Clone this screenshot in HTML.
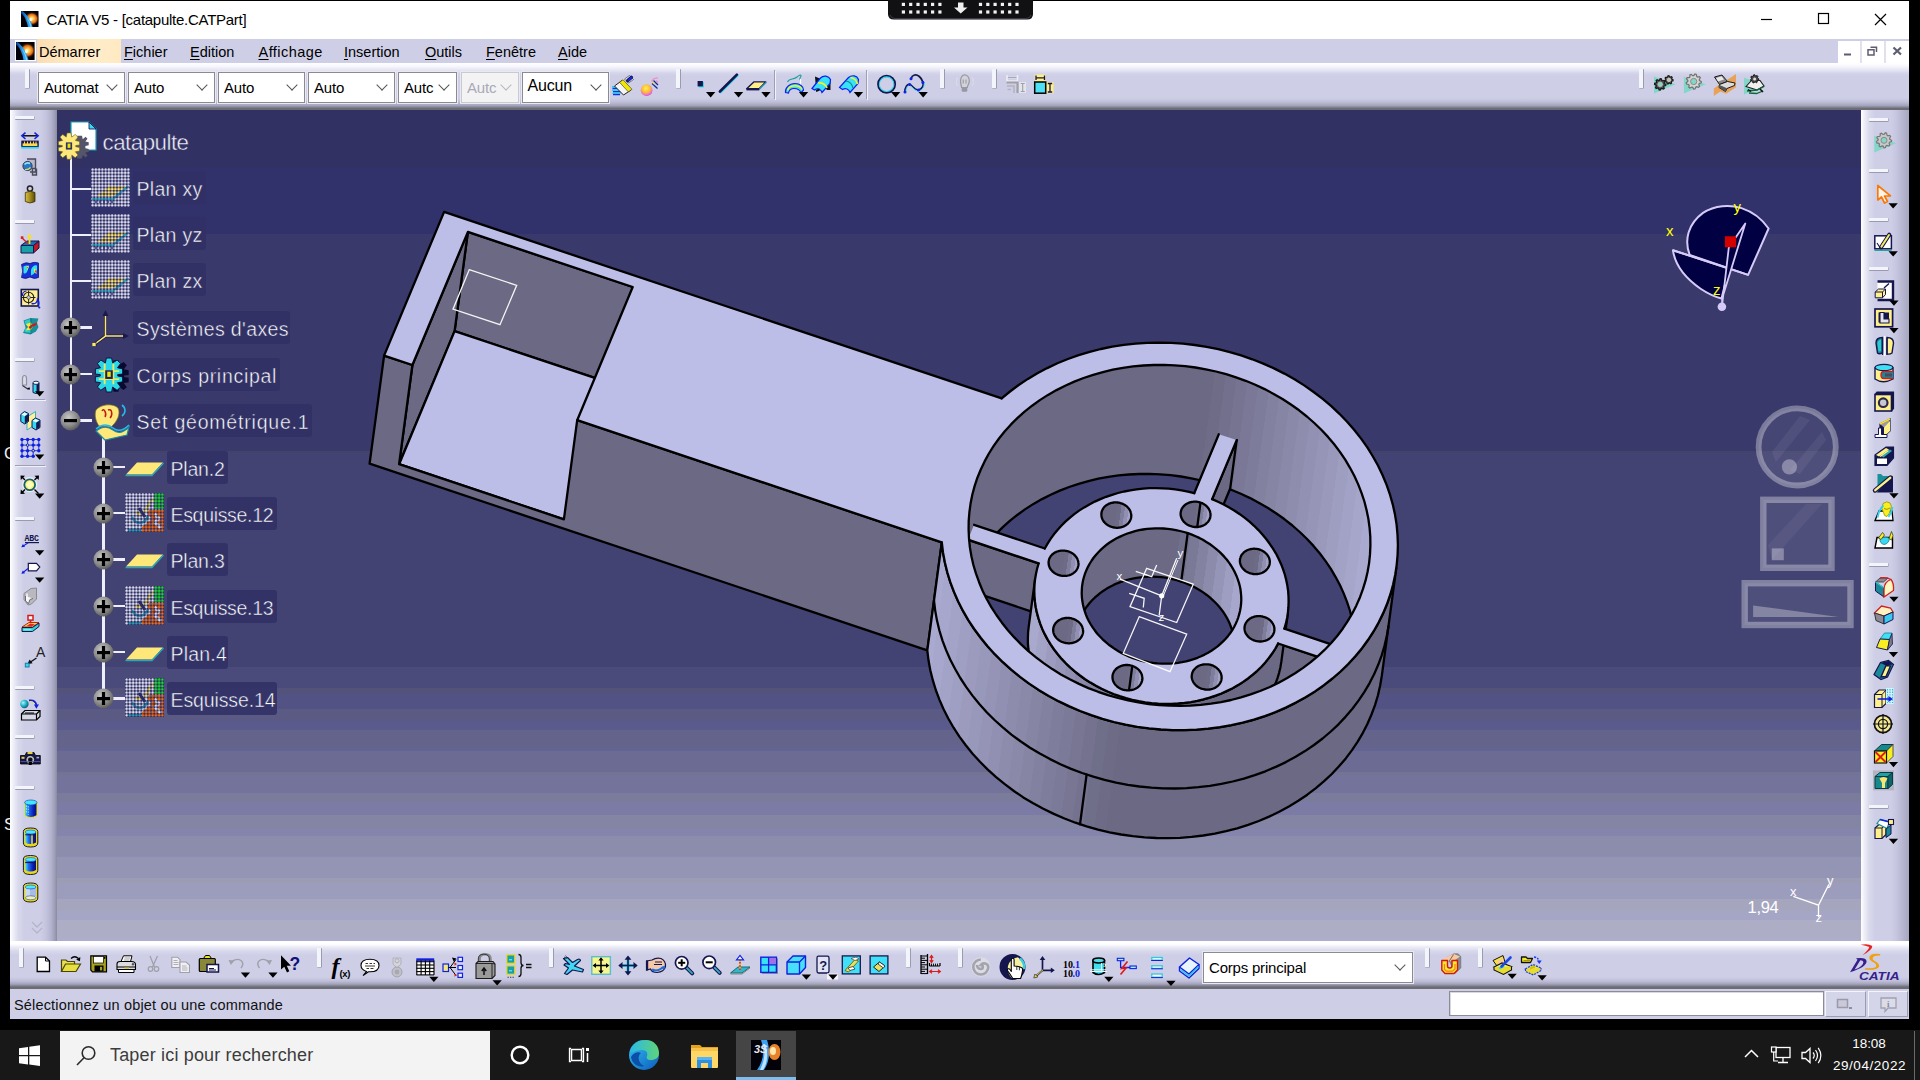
<!DOCTYPE html>
<html><head><meta charset="utf-8"><title>CATIA V5 - [catapulte.CATPart]</title>
<style>
*{box-sizing:border-box;margin:0;padding:0}
html,body{width:1920px;height:1080px;overflow:hidden;background:#000}
body{font-family:"Liberation Sans",sans-serif;position:relative;color:#000}
body>*{position:absolute}
.a{position:absolute}
#win{left:10px;top:1px;width:1899px;height:1017px;background:#cecfe7}
#title{left:10px;top:1px;width:1899px;height:38px;background:#fff}
.tt{left:46.5px;top:10.5px;font-size:15px;letter-spacing:-0.27px;color:#000;white-space:nowrap}
#menu{left:10px;top:39px;width:1899px;height:24px;background:#cecfe7}
.mi{top:42px;font-size:14.5px;white-space:nowrap;height:20px;line-height:20px}
.mi u{text-decoration:underline;text-underline-offset:2px}
#tb{left:10px;top:63px;width:1899px;height:47px;background:linear-gradient(#ffffff 0,#f8f8fd 3px,#e6e6f4 7px,#d4d5ea 10px,#cecfe7 13px,#cecfe7 35px,#bebed8 39px,#a4a4bc 42.5px,#808090 44.5px,#6c6c74 45.3px,#6c6c74 47px)}
.combo{top:72px;height:31px;background:#fff;border:1px solid #8a8a90;box-shadow:0 0 0 1px #e9e9f3;font-size:15px;line-height:30px;padding-left:5px;overflow:hidden;white-space:nowrap;letter-spacing:-0.2px}
.combo:after{content:"";position:absolute;right:8px;top:8px;width:7px;height:7px;border-right:1.3px solid #555;border-bottom:1.3px solid #555;transform:rotate(45deg)}
.combo.dis{background:#f3f3f3;color:#a9a9b9;border-color:#c9c9d2}
.combo.dis:after{border-color:#b8b8c4}
#ltb{left:10px;top:110px;width:47px;height:831px;background:linear-gradient(90deg,#fff 0,#f0f0f9 3px,#dadaec 8px,#cecfe7 14px,#cecfe7 30px,#c4c4de 36px,#b3b3cf 41px,#9c9cb6 45px,#8a8a9e 47px)}
#rtb{left:1861px;top:110px;width:48px;height:831px;background:linear-gradient(90deg,#fff 0,#f0f0f9 3px,#dadaec 8px,#cecfe7 14px,#cecfe7 30px,#c4c4de 36px,#b5b5d0 42px,#a6a6c0 48px)}
#btb{left:10px;top:941px;width:1899px;height:48px;background:linear-gradient(#fff 0,#fff 3px,#ececf7 6px,#d8d8ec 10px,#cecfe7 14px,#cecfe7 36px,#bebed8 40px,#a4a4bc 43px,#808090 45px,#6c6c74 46px,#6c6c74 48px)}
#status{left:10px;top:989px;width:1899px;height:29.5px;background:#cecfe7}
#vp{left:57px;top:110px;width:1804px;height:831px;overflow:hidden}
.sep{width:20px;height:4px;background:#f4f4fb;border-bottom:1px solid #9a9ab0;border-right:1px solid #b0b0c4;border-radius:1px}
.vsep{width:5px;height:20px;background:#f4f4fb;border-right:1px solid #9a9ab0;border-bottom:1px solid #b0b0c4;border-radius:1px}
.line{background:#9e9eb6;box-shadow:1px 1px 0 #f2f2fa}
#task{left:0;top:1030px;width:1920px;height:50px;background:#181818}
.lbl{height:33px;background:rgba(49,49,102,.9);border-radius:3px;color:#fff;font-size:19.5px;line-height:33px;padding:0 2px;white-space:nowrap}
.tr{color:#fff;white-space:nowrap}
</style></head><body>
<div id="win"></div><div id="title"></div><div id="menu"></div><div id="tb"></div><div id="ltb"></div><div id="rtb"></div><div id="btb"></div><div id="status"></div><div id="task"></div><svg id="vp" viewBox="57 110 1804 831" width="1804" height="831"><defs><linearGradient id="bgv" gradientUnits="userSpaceOnUse" x1="0" y1="110" x2="0" y2="941"><stop offset="0.00000" stop-color="#313163"/><stop offset="0.06980" stop-color="#313163"/><stop offset="0.06980" stop-color="#31316b"/><stop offset="0.14922" stop-color="#31316b"/><stop offset="0.14922" stop-color="#39396b"/><stop offset="0.41035" stop-color="#39396b"/><stop offset="0.41035" stop-color="#42426b"/><stop offset="0.41276" stop-color="#42426b"/><stop offset="0.41276" stop-color="#424273"/><stop offset="0.67028" stop-color="#424273"/><stop offset="0.67028" stop-color="#4a4a7b"/><stop offset="0.69555" stop-color="#4a4a7b"/><stop offset="0.69555" stop-color="#52527b"/><stop offset="0.70277" stop-color="#52527b"/><stop offset="0.70277" stop-color="#525284"/><stop offset="0.72082" stop-color="#525284"/><stop offset="0.72082" stop-color="#5a5a84"/><stop offset="0.73526" stop-color="#5a5a84"/><stop offset="0.73526" stop-color="#5a5a8c"/><stop offset="0.74609" stop-color="#5a5a8c"/><stop offset="0.74609" stop-color="#63638c"/><stop offset="0.76775" stop-color="#63638c"/><stop offset="0.76775" stop-color="#636394"/><stop offset="0.77136" stop-color="#636394"/><stop offset="0.77136" stop-color="#6b6b94"/><stop offset="0.79663" stop-color="#6b6b94"/><stop offset="0.79663" stop-color="#737394"/><stop offset="0.80024" stop-color="#737394"/><stop offset="0.80024" stop-color="#73739c"/><stop offset="0.82190" stop-color="#73739c"/><stop offset="0.82190" stop-color="#7b7b9c"/><stop offset="0.83273" stop-color="#7b7b9c"/><stop offset="0.83273" stop-color="#7b7ba5"/><stop offset="0.84838" stop-color="#7b7ba5"/><stop offset="0.84838" stop-color="#8484a5"/><stop offset="0.86522" stop-color="#8484a5"/><stop offset="0.86522" stop-color="#8484ad"/><stop offset="0.87365" stop-color="#8484ad"/><stop offset="0.87365" stop-color="#8c8cad"/><stop offset="0.89771" stop-color="#8c8cad"/><stop offset="0.89771" stop-color="#8c8cb5"/><stop offset="0.89892" stop-color="#8c8cb5"/><stop offset="0.89892" stop-color="#9494b5"/><stop offset="0.92419" stop-color="#9494b5"/><stop offset="0.92419" stop-color="#9c9cb5"/><stop offset="0.93020" stop-color="#9c9cb5"/><stop offset="0.93020" stop-color="#9c9cbd"/><stop offset="0.94946" stop-color="#9c9cbd"/><stop offset="0.94946" stop-color="#a5a5bd"/><stop offset="0.96390" stop-color="#a5a5bd"/><stop offset="0.96390" stop-color="#a5a5c6"/><stop offset="0.97473" stop-color="#a5a5c6"/><stop offset="0.97473" stop-color="#adadc6"/><stop offset="0.99639" stop-color="#adadc6"/><stop offset="0.99639" stop-color="#adadce"/><stop offset="1.00000" stop-color="#adadce"/></linearGradient></defs><rect x="57" y="110" width="1804" height="832" fill="url(#bgv)"/><defs><linearGradient id="gOut" gradientUnits="userSpaceOnUse" x1="942.7" y1="504.9" x2="1396.3" y2="567.9"><stop offset="0.0000" stop-color="rgb(170,170,208)"/><stop offset="0.0250" stop-color="rgb(170,170,208)"/><stop offset="0.0250" stop-color="rgb(167,166,204)"/><stop offset="0.0500" stop-color="rgb(167,166,204)"/><stop offset="0.0500" stop-color="rgb(163,163,199)"/><stop offset="0.0750" stop-color="rgb(163,163,199)"/><stop offset="0.0750" stop-color="rgb(159,159,195)"/><stop offset="0.1000" stop-color="rgb(159,159,195)"/><stop offset="0.1000" stop-color="rgb(156,155,190)"/><stop offset="0.1250" stop-color="rgb(156,155,190)"/><stop offset="0.1250" stop-color="rgb(152,152,186)"/><stop offset="0.1500" stop-color="rgb(152,152,186)"/><stop offset="0.1500" stop-color="rgb(149,148,182)"/><stop offset="0.1750" stop-color="rgb(149,148,182)"/><stop offset="0.1750" stop-color="rgb(145,144,178)"/><stop offset="0.2000" stop-color="rgb(145,144,178)"/><stop offset="0.2000" stop-color="rgb(141,140,173)"/><stop offset="0.2250" stop-color="rgb(141,140,173)"/><stop offset="0.2250" stop-color="rgb(138,137,169)"/><stop offset="0.2500" stop-color="rgb(138,137,169)"/><stop offset="0.2500" stop-color="rgb(134,133,164)"/><stop offset="0.2750" stop-color="rgb(134,133,164)"/><stop offset="0.2750" stop-color="rgb(130,129,160)"/><stop offset="0.3000" stop-color="rgb(130,129,160)"/><stop offset="0.3000" stop-color="rgb(127,125,156)"/><stop offset="0.3250" stop-color="rgb(127,125,156)"/><stop offset="0.3250" stop-color="rgb(123,122,152)"/><stop offset="0.3500" stop-color="rgb(123,122,152)"/><stop offset="0.3500" stop-color="rgb(120,118,147)"/><stop offset="0.3750" stop-color="rgb(120,118,147)"/><stop offset="0.3750" stop-color="rgb(116,114,143)"/><stop offset="0.4000" stop-color="rgb(116,114,143)"/><stop offset="0.4000" stop-color="rgb(112,111,138)"/><stop offset="0.4250" stop-color="rgb(112,111,138)"/><stop offset="0.4250" stop-color="rgb(109,107,134)"/><stop offset="0.4500" stop-color="rgb(109,107,134)"/><stop offset="0.4500" stop-color="rgb(107,105,132)"/><stop offset="0.4750" stop-color="rgb(107,105,132)"/><stop offset="0.4750" stop-color="rgb(107,105,132)"/><stop offset="0.5000" stop-color="rgb(107,105,132)"/><stop offset="0.5000" stop-color="rgb(107,105,132)"/><stop offset="0.5250" stop-color="rgb(107,105,132)"/><stop offset="0.5250" stop-color="rgb(107,105,132)"/><stop offset="0.5500" stop-color="rgb(107,105,132)"/><stop offset="0.5500" stop-color="rgb(107,105,132)"/><stop offset="0.5750" stop-color="rgb(107,105,132)"/><stop offset="0.5750" stop-color="rgb(107,105,132)"/><stop offset="0.6000" stop-color="rgb(107,105,132)"/><stop offset="0.6000" stop-color="rgb(107,105,132)"/><stop offset="0.6250" stop-color="rgb(107,105,132)"/><stop offset="0.6250" stop-color="rgb(107,105,132)"/><stop offset="0.6500" stop-color="rgb(107,105,132)"/><stop offset="0.6500" stop-color="rgb(107,105,132)"/><stop offset="0.6750" stop-color="rgb(107,105,132)"/><stop offset="0.6750" stop-color="rgb(107,105,132)"/><stop offset="0.7000" stop-color="rgb(107,105,132)"/><stop offset="0.7000" stop-color="rgb(107,105,132)"/><stop offset="0.7250" stop-color="rgb(107,105,132)"/><stop offset="0.7250" stop-color="rgb(107,105,132)"/><stop offset="0.7500" stop-color="rgb(107,105,132)"/><stop offset="0.7500" stop-color="rgb(107,105,132)"/><stop offset="0.7750" stop-color="rgb(107,105,132)"/><stop offset="0.7750" stop-color="rgb(107,105,132)"/><stop offset="0.8000" stop-color="rgb(107,105,132)"/><stop offset="0.8000" stop-color="rgb(107,105,132)"/><stop offset="0.8250" stop-color="rgb(107,105,132)"/><stop offset="0.8250" stop-color="rgb(107,105,132)"/><stop offset="0.8500" stop-color="rgb(107,105,132)"/><stop offset="0.8500" stop-color="rgb(107,105,132)"/><stop offset="0.8750" stop-color="rgb(107,105,132)"/><stop offset="0.8750" stop-color="rgb(107,105,132)"/><stop offset="0.9000" stop-color="rgb(107,105,132)"/><stop offset="0.9000" stop-color="rgb(107,105,132)"/><stop offset="0.9250" stop-color="rgb(107,105,132)"/><stop offset="0.9250" stop-color="rgb(107,105,132)"/><stop offset="0.9500" stop-color="rgb(107,105,132)"/><stop offset="0.9500" stop-color="rgb(107,105,132)"/><stop offset="0.9750" stop-color="rgb(107,105,132)"/><stop offset="0.9750" stop-color="rgb(107,105,132)"/><stop offset="1.0000" stop-color="rgb(107,105,132)"/></linearGradient><linearGradient id="gIn" gradientUnits="userSpaceOnUse" x1="969.9" y1="508.7" x2="1369.1" y2="564.1"><stop offset="0.0000" stop-color="rgb(107,105,132)"/><stop offset="0.0278" stop-color="rgb(107,105,132)"/><stop offset="0.0278" stop-color="rgb(107,105,132)"/><stop offset="0.0556" stop-color="rgb(107,105,132)"/><stop offset="0.0556" stop-color="rgb(107,105,132)"/><stop offset="0.0833" stop-color="rgb(107,105,132)"/><stop offset="0.0833" stop-color="rgb(107,105,132)"/><stop offset="0.1111" stop-color="rgb(107,105,132)"/><stop offset="0.1111" stop-color="rgb(107,105,132)"/><stop offset="0.1389" stop-color="rgb(107,105,132)"/><stop offset="0.1389" stop-color="rgb(107,105,132)"/><stop offset="0.1667" stop-color="rgb(107,105,132)"/><stop offset="0.1667" stop-color="rgb(107,105,132)"/><stop offset="0.1944" stop-color="rgb(107,105,132)"/><stop offset="0.1944" stop-color="rgb(107,105,132)"/><stop offset="0.2222" stop-color="rgb(107,105,132)"/><stop offset="0.2222" stop-color="rgb(107,105,132)"/><stop offset="0.2500" stop-color="rgb(107,105,132)"/><stop offset="0.2500" stop-color="rgb(107,105,132)"/><stop offset="0.2778" stop-color="rgb(107,105,132)"/><stop offset="0.2778" stop-color="rgb(107,105,132)"/><stop offset="0.3056" stop-color="rgb(107,105,132)"/><stop offset="0.3056" stop-color="rgb(107,105,132)"/><stop offset="0.3333" stop-color="rgb(107,105,132)"/><stop offset="0.3333" stop-color="rgb(107,105,132)"/><stop offset="0.3611" stop-color="rgb(107,105,132)"/><stop offset="0.3611" stop-color="rgb(107,105,132)"/><stop offset="0.3889" stop-color="rgb(107,105,132)"/><stop offset="0.3889" stop-color="rgb(107,105,132)"/><stop offset="0.4167" stop-color="rgb(107,105,132)"/><stop offset="0.4167" stop-color="rgb(107,105,132)"/><stop offset="0.4444" stop-color="rgb(107,105,132)"/><stop offset="0.4444" stop-color="rgb(107,105,132)"/><stop offset="0.4722" stop-color="rgb(107,105,132)"/><stop offset="0.4722" stop-color="rgb(107,105,132)"/><stop offset="0.5000" stop-color="rgb(107,105,132)"/><stop offset="0.5000" stop-color="rgb(107,105,132)"/><stop offset="0.5278" stop-color="rgb(107,105,132)"/><stop offset="0.5278" stop-color="rgb(107,105,132)"/><stop offset="0.5556" stop-color="rgb(107,105,132)"/><stop offset="0.5556" stop-color="rgb(110,108,135)"/><stop offset="0.5833" stop-color="rgb(110,108,135)"/><stop offset="0.5833" stop-color="rgb(114,112,140)"/><stop offset="0.6111" stop-color="rgb(114,112,140)"/><stop offset="0.6111" stop-color="rgb(118,116,145)"/><stop offset="0.6389" stop-color="rgb(118,116,145)"/><stop offset="0.6389" stop-color="rgb(122,120,150)"/><stop offset="0.6667" stop-color="rgb(122,120,150)"/><stop offset="0.6667" stop-color="rgb(126,124,155)"/><stop offset="0.6944" stop-color="rgb(126,124,155)"/><stop offset="0.6944" stop-color="rgb(130,129,159)"/><stop offset="0.7222" stop-color="rgb(130,129,159)"/><stop offset="0.7222" stop-color="rgb(134,133,164)"/><stop offset="0.7500" stop-color="rgb(134,133,164)"/><stop offset="0.7500" stop-color="rgb(138,137,169)"/><stop offset="0.7778" stop-color="rgb(138,137,169)"/><stop offset="0.7778" stop-color="rgb(142,141,174)"/><stop offset="0.8056" stop-color="rgb(142,141,174)"/><stop offset="0.8056" stop-color="rgb(146,145,179)"/><stop offset="0.8333" stop-color="rgb(146,145,179)"/><stop offset="0.8333" stop-color="rgb(150,149,184)"/><stop offset="0.8611" stop-color="rgb(150,149,184)"/><stop offset="0.8611" stop-color="rgb(154,153,188)"/><stop offset="0.8889" stop-color="rgb(154,153,188)"/><stop offset="0.8889" stop-color="rgb(158,158,193)"/><stop offset="0.9167" stop-color="rgb(158,158,193)"/><stop offset="0.9167" stop-color="rgb(162,162,198)"/><stop offset="0.9444" stop-color="rgb(162,162,198)"/><stop offset="0.9444" stop-color="rgb(166,166,203)"/><stop offset="0.9722" stop-color="rgb(166,166,203)"/><stop offset="0.9722" stop-color="rgb(170,170,208)"/><stop offset="1.0000" stop-color="rgb(170,170,208)"/></linearGradient><linearGradient id="gHub" gradientUnits="userSpaceOnUse" x1="1035.2" y1="578.5" x2="1287.8" y2="613.6"><stop offset="0.0000" stop-color="rgb(169,169,206)"/><stop offset="0.0417" stop-color="rgb(169,169,206)"/><stop offset="0.0417" stop-color="rgb(163,163,199)"/><stop offset="0.0833" stop-color="rgb(163,163,199)"/><stop offset="0.0833" stop-color="rgb(157,156,192)"/><stop offset="0.1250" stop-color="rgb(157,156,192)"/><stop offset="0.1250" stop-color="rgb(151,150,185)"/><stop offset="0.1667" stop-color="rgb(151,150,185)"/><stop offset="0.1667" stop-color="rgb(145,144,178)"/><stop offset="0.2083" stop-color="rgb(145,144,178)"/><stop offset="0.2083" stop-color="rgb(139,138,170)"/><stop offset="0.2500" stop-color="rgb(139,138,170)"/><stop offset="0.2500" stop-color="rgb(133,132,163)"/><stop offset="0.2917" stop-color="rgb(133,132,163)"/><stop offset="0.2917" stop-color="rgb(127,125,156)"/><stop offset="0.3333" stop-color="rgb(127,125,156)"/><stop offset="0.3333" stop-color="rgb(121,119,149)"/><stop offset="0.3750" stop-color="rgb(121,119,149)"/><stop offset="0.3750" stop-color="rgb(115,113,141)"/><stop offset="0.4167" stop-color="rgb(115,113,141)"/><stop offset="0.4167" stop-color="rgb(109,107,134)"/><stop offset="0.4583" stop-color="rgb(109,107,134)"/><stop offset="0.4583" stop-color="rgb(107,105,132)"/><stop offset="0.5000" stop-color="rgb(107,105,132)"/><stop offset="0.5000" stop-color="rgb(107,105,132)"/><stop offset="0.5417" stop-color="rgb(107,105,132)"/><stop offset="0.5417" stop-color="rgb(107,105,132)"/><stop offset="0.5833" stop-color="rgb(107,105,132)"/><stop offset="0.5833" stop-color="rgb(107,105,132)"/><stop offset="0.6250" stop-color="rgb(107,105,132)"/><stop offset="0.6250" stop-color="rgb(107,105,132)"/><stop offset="0.6667" stop-color="rgb(107,105,132)"/><stop offset="0.6667" stop-color="rgb(107,105,132)"/><stop offset="0.7083" stop-color="rgb(107,105,132)"/><stop offset="0.7083" stop-color="rgb(107,105,132)"/><stop offset="0.7500" stop-color="rgb(107,105,132)"/><stop offset="0.7500" stop-color="rgb(107,105,132)"/><stop offset="0.7917" stop-color="rgb(107,105,132)"/><stop offset="0.7917" stop-color="rgb(107,105,132)"/><stop offset="0.8333" stop-color="rgb(107,105,132)"/><stop offset="0.8333" stop-color="rgb(107,105,132)"/><stop offset="0.8750" stop-color="rgb(107,105,132)"/><stop offset="0.8750" stop-color="rgb(107,105,132)"/><stop offset="0.9167" stop-color="rgb(107,105,132)"/><stop offset="0.9167" stop-color="rgb(107,105,132)"/><stop offset="0.9583" stop-color="rgb(107,105,132)"/><stop offset="0.9583" stop-color="rgb(107,105,132)"/><stop offset="1.0000" stop-color="rgb(107,105,132)"/></linearGradient><linearGradient id="gHin" gradientUnits="userSpaceOnUse" x1="1082.3" y1="585.0" x2="1240.7" y2="607.0"><stop offset="0.0000" stop-color="rgb(107,105,132)"/><stop offset="0.0625" stop-color="rgb(107,105,132)"/><stop offset="0.0625" stop-color="rgb(107,105,132)"/><stop offset="0.1250" stop-color="rgb(107,105,132)"/><stop offset="0.1250" stop-color="rgb(107,105,132)"/><stop offset="0.1875" stop-color="rgb(107,105,132)"/><stop offset="0.1875" stop-color="rgb(107,105,132)"/><stop offset="0.2500" stop-color="rgb(107,105,132)"/><stop offset="0.2500" stop-color="rgb(107,105,132)"/><stop offset="0.3125" stop-color="rgb(107,105,132)"/><stop offset="0.3125" stop-color="rgb(107,105,132)"/><stop offset="0.3750" stop-color="rgb(107,105,132)"/><stop offset="0.3750" stop-color="rgb(107,105,132)"/><stop offset="0.4375" stop-color="rgb(107,105,132)"/><stop offset="0.4375" stop-color="rgb(107,105,132)"/><stop offset="0.5000" stop-color="rgb(107,105,132)"/><stop offset="0.5000" stop-color="rgb(107,105,132)"/><stop offset="0.5625" stop-color="rgb(107,105,132)"/><stop offset="0.5625" stop-color="rgb(113,112,140)"/><stop offset="0.6250" stop-color="rgb(113,112,140)"/><stop offset="0.6250" stop-color="rgb(122,121,150)"/><stop offset="0.6875" stop-color="rgb(122,121,150)"/><stop offset="0.6875" stop-color="rgb(131,130,161)"/><stop offset="0.7500" stop-color="rgb(131,130,161)"/><stop offset="0.7500" stop-color="rgb(140,139,172)"/><stop offset="0.8125" stop-color="rgb(140,139,172)"/><stop offset="0.8125" stop-color="rgb(149,149,183)"/><stop offset="0.8750" stop-color="rgb(149,149,183)"/><stop offset="0.8750" stop-color="rgb(158,158,194)"/><stop offset="0.9375" stop-color="rgb(158,158,194)"/><stop offset="0.9375" stop-color="rgb(167,167,205)"/><stop offset="1.0000" stop-color="rgb(167,167,205)"/></linearGradient><clipPath id="cInTop"><path d="M1369.1,563.1 L1367.6,571.8 L1365.6,580.4 L1363.0,588.9 L1360.0,597.2 L1356.4,605.4 L1352.3,613.4 L1347.7,621.1 L1342.7,628.7 L1337.2,636.0 L1331.2,643.0 L1324.8,649.7 L1317.9,656.1 L1310.7,662.2 L1303.1,667.9 L1295.1,673.3 L1286.8,678.3 L1278.2,683.0 L1269.3,687.2 L1260.1,691.0 L1250.6,694.4 L1241.0,697.4 L1231.1,700.0 L1221.1,702.1 L1211.0,703.7 L1200.7,704.9 L1190.4,705.6 L1180.0,705.9 L1169.6,705.7 L1159.1,705.1 L1148.7,704.0 L1138.4,702.4 L1128.1,700.4 L1118.0,698.0 L1107.9,695.1 L1098.1,691.8 L1088.4,688.1 L1079.0,683.9 L1069.8,679.3 L1060.9,674.4 L1052.3,669.1 L1044.0,663.4 L1036.0,657.4 L1028.4,651.1 L1021.1,644.4 L1014.3,637.4 L1007.9,630.2 L1001.9,622.7 L996.4,615.0 L991.3,607.1 L986.7,599.0 L982.6,590.7 L979.1,582.2 L976.0,573.6 L973.4,565.0 L971.4,556.2 L969.9,547.4 L969.0,538.5 L968.6,529.7 L968.7,520.8 L969.4,512.1 L970.6,503.3 L972.3,494.7 L974.6,486.1 L977.4,477.7 L980.8,469.5 L984.6,461.4 L988.9,453.5 L993.7,445.9 L999.0,438.5 L1004.8,431.3 L1011.0,424.4 L1017.6,417.9 L1024.6,411.6 L1032.1,405.7 L1039.8,400.1 L1048.0,394.9 L1056.5,390.1 L1065.2,385.7 L1074.3,381.6 L1083.6,378.0 L1093.2,374.8 L1102.9,372.1 L1112.8,369.7 L1122.9,367.9 L1133.1,366.4 L1143.4,365.5 L1153.8,365.0 L1164.2,364.9 L1174.7,365.3 L1185.1,366.2 L1195.5,367.5 L1205.8,369.3 L1216.0,371.5 L1226.1,374.2 L1236.0,377.3 L1245.7,380.8 L1255.3,384.8 L1264.6,389.1 L1273.7,393.9 L1282.5,399.0 L1290.9,404.5 L1299.1,410.3 L1306.9,416.5 L1314.3,423.0 L1321.3,429.8 L1328.0,436.9 L1334.2,444.3 L1339.9,451.9 L1345.2,459.7 L1350.0,467.8 L1354.4,476.0 L1358.2,484.4 L1361.5,492.9 L1364.4,501.5 L1366.6,510.2 L1368.4,519.0 L1369.6,527.8 L1370.3,536.7 L1370.4,545.5 L1370.0,554.4Z"/></clipPath><clipPath id="cInBot"><path d="M1354.6,672.1 L1353.1,680.8 L1351.1,689.4 L1348.5,697.9 L1345.5,706.2 L1341.9,714.4 L1337.8,722.4 L1333.2,730.1 L1328.2,737.7 L1322.7,745.0 L1316.7,752.0 L1310.3,758.7 L1303.4,765.1 L1296.2,771.2 L1288.6,776.9 L1280.6,782.3 L1272.3,787.3 L1263.7,792.0 L1254.8,796.2 L1245.6,800.0 L1236.1,803.4 L1226.5,806.4 L1216.6,809.0 L1206.6,811.1 L1196.5,812.7 L1186.2,813.9 L1175.9,814.6 L1165.5,814.9 L1155.1,814.7 L1144.6,814.1 L1134.2,813.0 L1123.9,811.4 L1113.6,809.4 L1103.5,807.0 L1093.4,804.1 L1083.6,800.8 L1073.9,797.1 L1064.5,792.9 L1055.3,788.3 L1046.4,783.4 L1037.8,778.1 L1029.5,772.4 L1021.5,766.4 L1013.9,760.1 L1006.6,753.4 L999.8,746.4 L993.4,739.2 L987.4,731.7 L981.9,724.0 L976.8,716.1 L972.2,708.0 L968.1,699.7 L964.6,691.2 L961.5,682.6 L958.9,674.0 L956.9,665.2 L955.4,656.4 L954.5,647.5 L954.1,638.7 L954.2,629.8 L954.9,621.1 L956.1,612.3 L957.8,603.7 L960.1,595.1 L962.9,586.7 L966.3,578.5 L970.1,570.4 L974.4,562.5 L979.2,554.9 L984.5,547.5 L990.3,540.3 L996.5,533.4 L1003.1,526.9 L1010.1,520.6 L1017.6,514.7 L1025.3,509.1 L1033.5,503.9 L1042.0,499.1 L1050.7,494.7 L1059.8,490.6 L1069.1,487.0 L1078.7,483.8 L1088.4,481.1 L1098.3,478.7 L1108.4,476.9 L1118.6,475.4 L1128.9,474.5 L1139.3,474.0 L1149.7,473.9 L1160.2,474.3 L1170.6,475.2 L1181.0,476.5 L1191.3,478.3 L1201.5,480.5 L1211.6,483.2 L1221.5,486.3 L1231.2,489.8 L1240.8,493.8 L1250.1,498.1 L1259.2,502.9 L1268.0,508.0 L1276.4,513.5 L1284.6,519.3 L1292.4,525.5 L1299.8,532.0 L1306.8,538.8 L1313.5,545.9 L1319.7,553.3 L1325.4,560.9 L1330.7,568.7 L1335.5,576.8 L1339.9,585.0 L1343.7,593.4 L1347.0,601.9 L1349.9,610.5 L1352.1,619.2 L1353.9,628.0 L1355.1,636.8 L1355.8,645.7 L1355.9,654.5 L1355.5,663.4Z"/></clipPath><clipPath id="cHTop"><path d="M1240.7,607.0 L1240.1,610.5 L1239.3,613.9 L1238.3,617.3 L1237.1,620.6 L1235.7,623.8 L1234.1,627.0 L1232.3,630.1 L1230.3,633.0 L1228.1,635.9 L1225.7,638.7 L1223.1,641.4 L1220.4,643.9 L1217.6,646.4 L1214.5,648.6 L1211.4,650.8 L1208.1,652.8 L1204.6,654.6 L1201.1,656.3 L1197.5,657.8 L1193.7,659.2 L1189.9,660.3 L1186.0,661.4 L1182.0,662.2 L1178.0,662.8 L1173.9,663.3 L1169.8,663.6 L1165.7,663.7 L1161.5,663.6 L1157.4,663.4 L1153.2,663.0 L1149.1,662.3 L1145.1,661.5 L1141.0,660.6 L1137.1,659.4 L1133.1,658.1 L1129.3,656.6 L1125.6,655.0 L1121.9,653.2 L1118.4,651.2 L1115.0,649.1 L1111.7,646.8 L1108.5,644.5 L1105.5,641.9 L1102.6,639.3 L1099.9,636.5 L1097.3,633.7 L1095.0,630.7 L1092.8,627.6 L1090.8,624.5 L1088.9,621.2 L1087.3,618.0 L1085.9,614.6 L1084.7,611.2 L1083.7,607.7 L1082.9,604.3 L1082.3,600.8 L1081.9,597.3 L1081.7,593.7 L1081.8,590.2 L1082.0,586.7 L1082.5,583.3 L1083.2,579.8 L1084.1,576.5 L1085.2,573.1 L1086.6,569.8 L1088.1,566.6 L1089.8,563.5 L1091.7,560.5 L1093.8,557.5 L1096.1,554.7 L1098.6,552.0 L1101.2,549.4 L1104.0,546.9 L1106.9,544.5 L1110.0,542.3 L1113.3,540.2 L1116.6,538.3 L1120.1,536.6 L1123.7,535.0 L1127.4,533.5 L1131.2,532.3 L1135.1,531.2 L1139.0,530.2 L1143.0,529.5 L1147.1,528.9 L1151.1,528.6 L1155.3,528.3 L1159.4,528.3 L1163.5,528.5 L1167.7,528.8 L1171.8,529.4 L1175.9,530.1 L1179.9,531.0 L1184.0,532.0 L1187.9,533.2 L1191.8,534.6 L1195.6,536.2 L1199.3,537.9 L1202.9,539.8 L1206.3,541.9 L1209.7,544.0 L1212.9,546.4 L1216.0,548.8 L1219.0,551.4 L1221.8,554.1 L1224.4,556.9 L1226.9,559.8 L1229.2,562.9 L1231.3,566.0 L1233.2,569.2 L1234.9,572.4 L1236.4,575.7 L1237.7,579.1 L1238.9,582.6 L1239.8,586.0 L1240.5,589.5 L1240.9,593.0 L1241.2,596.5 L1241.3,600.0 L1241.1,603.5Z"/></clipPath><clipPath id="cHBot"><path d="M1234.2,655.4 L1233.7,658.9 L1232.9,662.3 L1231.8,665.6 L1230.6,668.9 L1229.2,672.2 L1227.6,675.4 L1225.8,678.4 L1223.8,681.4 L1221.6,684.3 L1219.2,687.1 L1216.6,689.8 L1213.9,692.3 L1211.1,694.7 L1208.0,697.0 L1204.9,699.2 L1201.6,701.2 L1198.2,703.0 L1194.6,704.7 L1191.0,706.2 L1187.2,707.5 L1183.4,708.7 L1179.5,709.7 L1175.5,710.6 L1171.5,711.2 L1167.4,711.7 L1163.3,712.0 L1159.2,712.1 L1155.0,712.0 L1150.9,711.8 L1146.7,711.3 L1142.6,710.7 L1138.6,709.9 L1134.5,709.0 L1130.6,707.8 L1126.7,706.5 L1122.8,705.0 L1119.1,703.4 L1115.4,701.6 L1111.9,699.6 L1108.5,697.5 L1105.2,695.2 L1102.0,692.8 L1099.0,690.3 L1096.1,687.7 L1093.4,684.9 L1090.8,682.0 L1088.5,679.1 L1086.3,676.0 L1084.3,672.9 L1082.4,669.6 L1080.8,666.3 L1079.4,663.0 L1078.2,659.6 L1077.2,656.1 L1076.4,652.7 L1075.8,649.2 L1075.4,645.6 L1075.2,642.1 L1075.3,638.6 L1075.5,635.1 L1076.0,631.7 L1076.7,628.2 L1077.6,624.8 L1078.7,621.5 L1080.1,618.2 L1081.6,615.0 L1083.3,611.9 L1085.2,608.9 L1087.3,605.9 L1089.6,603.1 L1092.1,600.3 L1094.7,597.7 L1097.5,595.3 L1100.4,592.9 L1103.5,590.7 L1106.8,588.6 L1110.1,586.7 L1113.6,584.9 L1117.2,583.3 L1120.9,581.9 L1124.7,580.6 L1128.6,579.5 L1132.5,578.6 L1136.5,577.9 L1140.6,577.3 L1144.7,576.9 L1148.8,576.7 L1152.9,576.7 L1157.1,576.9 L1161.2,577.2 L1165.3,577.7 L1169.4,578.5 L1173.5,579.3 L1177.5,580.4 L1181.4,581.6 L1185.3,583.0 L1189.1,584.6 L1192.8,586.3 L1196.4,588.2 L1199.8,590.2 L1203.2,592.4 L1206.4,594.7 L1209.5,597.2 L1212.5,599.8 L1215.3,602.5 L1217.9,605.3 L1220.4,608.2 L1222.7,611.2 L1224.8,614.4 L1226.7,617.5 L1228.4,620.8 L1229.9,624.1 L1231.2,627.5 L1232.4,630.9 L1233.3,634.4 L1234.0,637.9 L1234.5,641.4 L1234.7,644.9 L1234.8,648.4 L1234.6,651.9Z"/></clipPath><linearGradient id="gh0" gradientUnits="userSpaceOnUse" x1="1180.7" y1="512.3" x2="1210.4" y2="516.4"><stop offset="0.0000" stop-color="rgb(107,105,132)"/><stop offset="0.1250" stop-color="rgb(107,105,132)"/><stop offset="0.1250" stop-color="rgb(107,105,132)"/><stop offset="0.2500" stop-color="rgb(107,105,132)"/><stop offset="0.2500" stop-color="rgb(107,105,132)"/><stop offset="0.3750" stop-color="rgb(107,105,132)"/><stop offset="0.3750" stop-color="rgb(107,105,132)"/><stop offset="0.5000" stop-color="rgb(107,105,132)"/><stop offset="0.5000" stop-color="rgb(109,107,134)"/><stop offset="0.6250" stop-color="rgb(109,107,134)"/><stop offset="0.6250" stop-color="rgb(127,125,156)"/><stop offset="0.7500" stop-color="rgb(127,125,156)"/><stop offset="0.7500" stop-color="rgb(145,144,178)"/><stop offset="0.8750" stop-color="rgb(145,144,178)"/><stop offset="0.8750" stop-color="rgb(163,163,199)"/><stop offset="1.0000" stop-color="rgb(163,163,199)"/></linearGradient><linearGradient id="gh1" gradientUnits="userSpaceOnUse" x1="1240.0" y1="559.4" x2="1269.7" y2="563.5"><stop offset="0.0000" stop-color="rgb(107,105,132)"/><stop offset="0.1250" stop-color="rgb(107,105,132)"/><stop offset="0.1250" stop-color="rgb(107,105,132)"/><stop offset="0.2500" stop-color="rgb(107,105,132)"/><stop offset="0.2500" stop-color="rgb(107,105,132)"/><stop offset="0.3750" stop-color="rgb(107,105,132)"/><stop offset="0.3750" stop-color="rgb(107,105,132)"/><stop offset="0.5000" stop-color="rgb(107,105,132)"/><stop offset="0.5000" stop-color="rgb(109,107,134)"/><stop offset="0.6250" stop-color="rgb(109,107,134)"/><stop offset="0.6250" stop-color="rgb(127,125,156)"/><stop offset="0.7500" stop-color="rgb(127,125,156)"/><stop offset="0.7500" stop-color="rgb(145,144,178)"/><stop offset="0.8750" stop-color="rgb(145,144,178)"/><stop offset="0.8750" stop-color="rgb(163,163,199)"/><stop offset="1.0000" stop-color="rgb(163,163,199)"/></linearGradient><linearGradient id="gh2" gradientUnits="userSpaceOnUse" x1="1244.6" y1="626.7" x2="1274.3" y2="630.8"><stop offset="0.0000" stop-color="rgb(107,105,132)"/><stop offset="0.1250" stop-color="rgb(107,105,132)"/><stop offset="0.1250" stop-color="rgb(107,105,132)"/><stop offset="0.2500" stop-color="rgb(107,105,132)"/><stop offset="0.2500" stop-color="rgb(107,105,132)"/><stop offset="0.3750" stop-color="rgb(107,105,132)"/><stop offset="0.3750" stop-color="rgb(107,105,132)"/><stop offset="0.5000" stop-color="rgb(107,105,132)"/><stop offset="0.5000" stop-color="rgb(109,107,134)"/><stop offset="0.6250" stop-color="rgb(109,107,134)"/><stop offset="0.6250" stop-color="rgb(127,125,156)"/><stop offset="0.7500" stop-color="rgb(127,125,156)"/><stop offset="0.7500" stop-color="rgb(145,144,178)"/><stop offset="0.8750" stop-color="rgb(145,144,178)"/><stop offset="0.8750" stop-color="rgb(163,163,199)"/><stop offset="1.0000" stop-color="rgb(163,163,199)"/></linearGradient><linearGradient id="gh3" gradientUnits="userSpaceOnUse" x1="1191.8" y1="674.9" x2="1221.5" y2="679.0"><stop offset="0.0000" stop-color="rgb(107,105,132)"/><stop offset="0.1250" stop-color="rgb(107,105,132)"/><stop offset="0.1250" stop-color="rgb(107,105,132)"/><stop offset="0.2500" stop-color="rgb(107,105,132)"/><stop offset="0.2500" stop-color="rgb(107,105,132)"/><stop offset="0.3750" stop-color="rgb(107,105,132)"/><stop offset="0.3750" stop-color="rgb(107,105,132)"/><stop offset="0.5000" stop-color="rgb(107,105,132)"/><stop offset="0.5000" stop-color="rgb(109,107,134)"/><stop offset="0.6250" stop-color="rgb(109,107,134)"/><stop offset="0.6250" stop-color="rgb(127,125,156)"/><stop offset="0.7500" stop-color="rgb(127,125,156)"/><stop offset="0.7500" stop-color="rgb(145,144,178)"/><stop offset="0.8750" stop-color="rgb(145,144,178)"/><stop offset="0.8750" stop-color="rgb(163,163,199)"/><stop offset="1.0000" stop-color="rgb(163,163,199)"/></linearGradient><linearGradient id="gh4" gradientUnits="userSpaceOnUse" x1="1112.6" y1="675.6" x2="1142.3" y2="679.8"><stop offset="0.0000" stop-color="rgb(107,105,132)"/><stop offset="0.1250" stop-color="rgb(107,105,132)"/><stop offset="0.1250" stop-color="rgb(107,105,132)"/><stop offset="0.2500" stop-color="rgb(107,105,132)"/><stop offset="0.2500" stop-color="rgb(107,105,132)"/><stop offset="0.3750" stop-color="rgb(107,105,132)"/><stop offset="0.3750" stop-color="rgb(107,105,132)"/><stop offset="0.5000" stop-color="rgb(107,105,132)"/><stop offset="0.5000" stop-color="rgb(109,107,134)"/><stop offset="0.6250" stop-color="rgb(109,107,134)"/><stop offset="0.6250" stop-color="rgb(127,125,156)"/><stop offset="0.7500" stop-color="rgb(127,125,156)"/><stop offset="0.7500" stop-color="rgb(145,144,178)"/><stop offset="0.8750" stop-color="rgb(145,144,178)"/><stop offset="0.8750" stop-color="rgb(163,163,199)"/><stop offset="1.0000" stop-color="rgb(163,163,199)"/></linearGradient><linearGradient id="gh5" gradientUnits="userSpaceOnUse" x1="1053.3" y1="628.5" x2="1083.0" y2="632.7"><stop offset="0.0000" stop-color="rgb(107,105,132)"/><stop offset="0.1250" stop-color="rgb(107,105,132)"/><stop offset="0.1250" stop-color="rgb(107,105,132)"/><stop offset="0.2500" stop-color="rgb(107,105,132)"/><stop offset="0.2500" stop-color="rgb(107,105,132)"/><stop offset="0.3750" stop-color="rgb(107,105,132)"/><stop offset="0.3750" stop-color="rgb(107,105,132)"/><stop offset="0.5000" stop-color="rgb(107,105,132)"/><stop offset="0.5000" stop-color="rgb(109,107,134)"/><stop offset="0.6250" stop-color="rgb(109,107,134)"/><stop offset="0.6250" stop-color="rgb(127,125,156)"/><stop offset="0.7500" stop-color="rgb(127,125,156)"/><stop offset="0.7500" stop-color="rgb(145,144,178)"/><stop offset="0.8750" stop-color="rgb(145,144,178)"/><stop offset="0.8750" stop-color="rgb(163,163,199)"/><stop offset="1.0000" stop-color="rgb(163,163,199)"/></linearGradient><linearGradient id="gh6" gradientUnits="userSpaceOnUse" x1="1048.7" y1="561.2" x2="1078.4" y2="565.3"><stop offset="0.0000" stop-color="rgb(107,105,132)"/><stop offset="0.1250" stop-color="rgb(107,105,132)"/><stop offset="0.1250" stop-color="rgb(107,105,132)"/><stop offset="0.2500" stop-color="rgb(107,105,132)"/><stop offset="0.2500" stop-color="rgb(107,105,132)"/><stop offset="0.3750" stop-color="rgb(107,105,132)"/><stop offset="0.3750" stop-color="rgb(107,105,132)"/><stop offset="0.5000" stop-color="rgb(107,105,132)"/><stop offset="0.5000" stop-color="rgb(109,107,134)"/><stop offset="0.6250" stop-color="rgb(109,107,134)"/><stop offset="0.6250" stop-color="rgb(127,125,156)"/><stop offset="0.7500" stop-color="rgb(127,125,156)"/><stop offset="0.7500" stop-color="rgb(145,144,178)"/><stop offset="0.8750" stop-color="rgb(145,144,178)"/><stop offset="0.8750" stop-color="rgb(163,163,199)"/><stop offset="1.0000" stop-color="rgb(163,163,199)"/></linearGradient><linearGradient id="gh7" gradientUnits="userSpaceOnUse" x1="1101.5" y1="513.0" x2="1131.2" y2="517.2"><stop offset="0.0000" stop-color="rgb(107,105,132)"/><stop offset="0.1250" stop-color="rgb(107,105,132)"/><stop offset="0.1250" stop-color="rgb(107,105,132)"/><stop offset="0.2500" stop-color="rgb(107,105,132)"/><stop offset="0.2500" stop-color="rgb(107,105,132)"/><stop offset="0.3750" stop-color="rgb(107,105,132)"/><stop offset="0.3750" stop-color="rgb(107,105,132)"/><stop offset="0.5000" stop-color="rgb(107,105,132)"/><stop offset="0.5000" stop-color="rgb(109,107,134)"/><stop offset="0.6250" stop-color="rgb(109,107,134)"/><stop offset="0.6250" stop-color="rgb(127,125,156)"/><stop offset="0.7500" stop-color="rgb(127,125,156)"/><stop offset="0.7500" stop-color="rgb(145,144,178)"/><stop offset="0.8750" stop-color="rgb(145,144,178)"/><stop offset="0.8750" stop-color="rgb(163,163,199)"/><stop offset="1.0000" stop-color="rgb(163,163,199)"/></linearGradient></defs>
<path d="M467.9,231.9 L632.7,287.0 L619.4,386.2 L454.6,331.1Z" fill="#6b6984" stroke="#000" stroke-width="2.3" stroke-linejoin="round" stroke-linecap="round"/>
<path d="M412.4,365.0 L467.9,231.9 L454.6,331.1 L399.1,464.2Z" fill="#6b6984" stroke="#000" stroke-width="2.3" stroke-linejoin="round" stroke-linecap="round"/>
<path d="M454.6,331.1 L619.4,386.2 L563.9,519.3 L399.1,464.2Z" fill="#bdbee7" stroke="#000" stroke-width="2.3" stroke-linejoin="round" stroke-linecap="round"/>
<path d="M384.1,355.6 L412.4,365.0 L399.1,464.2 L563.9,519.3 L577.2,420.2 L941.8,542.3 L927.3,650.3 L369.6,463.6Z" fill="#6b6984" stroke="#000" stroke-width="2.3" stroke-linejoin="round" stroke-linecap="round"/>
<path d="M941.8,542.3 L943.0,552.3 L944.8,562.3 L947.3,572.2 L950.3,582.0 L953.9,591.6 L958.1,601.2 L962.8,610.5 L968.1,619.7 L973.9,628.6 L980.3,637.3 L987.1,645.7 L994.5,653.8 L1002.3,661.6 L1010.6,669.1 L1019.3,676.2 L1028.4,683.0 L1037.8,689.4 L1047.7,695.3 L1057.8,700.8 L1068.3,705.9 L1079.0,710.5 L1089.9,714.7 L1101.1,718.4 L1112.5,721.6 L1124.0,724.3 L1135.6,726.5 L1147.3,728.2 L1159.1,729.4 L1170.9,730.0 L1182.7,730.2 L1194.5,729.8 L1206.2,728.9 L1217.8,727.5 L1229.3,725.6 L1240.6,723.2 L1251.7,720.3 L1262.6,716.9 L1273.3,713.0 L1283.6,708.6 L1293.7,703.8 L1303.4,698.5 L1312.8,692.8 L1321.8,686.7 L1330.4,680.1 L1338.6,673.2 L1346.3,666.0 L1353.5,658.3 L1360.3,650.4 L1366.5,642.1 L1372.2,633.6 L1377.4,624.8 L1382.0,615.8 L1386.0,606.5 L1389.5,597.1 L1392.4,587.5 L1394.6,577.8 L1396.3,567.9 L1381.8,675.9 L1380.1,685.8 L1377.9,695.5 L1375.0,705.1 L1371.5,714.5 L1367.5,723.8 L1362.9,732.8 L1357.7,741.6 L1352.0,750.1 L1345.8,758.4 L1339.0,766.3 L1331.8,774.0 L1324.1,781.2 L1315.9,788.1 L1307.3,794.7 L1298.3,800.8 L1288.9,806.5 L1279.2,811.8 L1269.1,816.6 L1258.8,821.0 L1248.1,824.9 L1237.2,828.3 L1226.1,831.2 L1214.8,833.6 L1203.3,835.5 L1191.7,836.9 L1180.0,837.8 L1168.2,838.2 L1156.4,838.0 L1144.6,837.4 L1132.8,836.2 L1121.1,834.5 L1109.5,832.3 L1098.0,829.6 L1086.6,826.4 L1075.4,822.7 L1064.5,818.5 L1053.8,813.9 L1043.3,808.8 L1033.2,803.3 L1023.3,797.4 L1013.9,791.0 L1004.8,784.2 L996.1,777.1 L987.8,769.6 L980.0,761.8 L972.6,753.7 L965.8,745.3 L959.4,736.6 L953.6,727.7 L948.3,718.5 L943.6,709.2 L939.4,699.6 L935.8,690.0 L932.8,680.2 L930.3,670.3 L928.5,660.3 L927.3,650.3Z" fill="url(#gOut)" stroke="#000" stroke-width="2.3" stroke-linejoin="round" stroke-linecap="round"/>
<path d="M934.0,600.6 L935.2,610.6 L937.0,620.6 L939.4,630.5 L942.4,640.3 L946.0,649.9 L950.2,659.5 L955.0,668.8 L960.3,678.0 L966.1,686.9 L972.5,695.6 L979.3,704.0 L986.7,712.2 L994.5,720.0 L1002.8,727.4 L1011.4,734.6 L1020.5,741.3 L1030.0,747.7 L1039.8,753.6 L1050.0,759.1 L1060.4,764.2 L1071.1,768.9 L1082.1,773.0 L1093.3,776.7 L1104.6,779.9 L1116.1,782.6 L1127.8,784.8 L1139.5,786.5 L1151.3,787.7 L1163.1,788.4 L1174.9,788.5 L1186.6,788.1 L1198.3,787.2 L1209.9,785.8 L1221.4,783.9 L1232.7,781.5 L1243.9,778.6 L1254.8,775.2 L1265.4,771.3 L1275.8,766.9 L1285.9,762.1 L1295.6,756.8 L1305.0,751.1 L1314.0,745.0 L1322.6,738.5 L1330.8,731.5 L1338.5,724.3 L1345.7,716.6 L1352.4,708.7 L1358.7,700.4 L1364.4,691.9 L1369.6,683.1 L1374.2,674.1 L1378.2,664.8 L1381.7,655.4 L1384.5,645.8 L1386.8,636.1 L1388.5,626.2" fill="none" stroke="#000" stroke-width="2.3" stroke-linejoin="round" stroke-linecap="round"/>
<path d="M1086.6,774.6 L1080.0,824.3" fill="none" stroke="#000" stroke-width="2.3" stroke-linejoin="round" stroke-linecap="round"/>
<path d="M444.1,211.9 L1001.7,398.4 L941.8,542.3 L577.2,420.2 L632.7,287.0 L467.9,231.9 L412.4,365.0 L384.1,355.6Z" fill="#bdbee7"/>
<path d="M1396.3,567.9 L1394.6,577.8 L1392.3,587.6 L1389.5,597.2 L1386.0,606.7 L1381.9,615.9 L1377.3,625.0 L1372.1,633.8 L1366.3,642.4 L1360.0,650.7 L1353.2,658.6 L1346.0,666.3 L1338.2,673.6 L1330.0,680.5 L1321.3,687.0 L1312.3,693.2 L1302.8,698.9 L1293.0,704.1 L1282.9,708.9 L1272.4,713.3 L1261.7,717.2 L1250.8,720.5 L1239.6,723.4 L1228.2,725.8 L1216.7,727.7 L1205.0,729.0 L1193.2,729.9 L1181.4,730.2 L1169.6,730.0 L1157.7,729.3 L1145.9,728.0 L1134.1,726.2 L1122.5,724.0 L1110.9,721.2 L1099.5,717.9 L1088.4,714.1 L1077.4,709.9 L1066.7,705.2 L1056.2,700.0 L1046.1,694.4 L1036.3,688.3 L1026.8,681.9 L1017.8,675.1 L1009.1,667.8 L1000.9,660.3 L993.1,652.4 L985.8,644.2 L979.0,635.7 L972.7,626.9 L967.0,617.9 L961.8,608.6 L957.1,599.2 L953.1,589.6 L949.6,579.8 L946.7,570.0 L944.4,560.0 L942.7,550.0 L941.6,540.0 L941.1,529.9 L941.3,519.9 L942.1,509.9 L943.4,499.9 L945.4,490.1 L948.0,480.4 L951.2,470.8 L955.0,461.5 L959.3,452.3 L964.3,443.3 L969.7,434.6 L975.8,426.2 L982.3,418.1 L989.3,410.3 L996.9,402.8 L1004.9,395.7 L1013.3,389.0 L1022.2,382.7 L1031.4,376.7 L1041.0,371.3 L1051.0,366.2 L1061.3,361.6 L1071.9,357.5 L1082.7,353.9 L1093.8,350.8 L1105.1,348.1 L1116.6,346.0 L1128.2,344.4 L1139.9,343.3 L1151.7,342.7 L1163.5,342.6 L1175.4,343.1 L1187.2,344.1 L1199.0,345.6 L1210.7,347.6 L1222.3,350.2 L1233.8,353.2 L1245.1,356.7 L1256.2,360.7 L1267.0,365.2 L1277.6,370.2 L1287.9,375.6 L1297.9,381.4 L1307.5,387.6 L1316.8,394.3 L1325.6,401.3 L1334.1,408.7 L1342.1,416.4 L1349.6,424.5 L1356.6,432.9 L1363.2,441.5 L1369.2,450.4 L1374.7,459.5 L1379.6,468.9 L1384.0,478.4 L1387.8,488.1 L1390.9,497.9 L1393.5,507.8 L1395.5,517.8 L1396.9,527.8 L1397.7,537.9 L1397.9,547.9 L1397.4,557.9Z" fill="#bdbee7"/>
<path d="M941.8,542.3 L577.2,420.2 L632.7,287.0 L467.9,231.9 L412.4,365.0 L384.1,355.6 L444.1,211.9 L1001.7,398.4" fill="none" stroke="#000" stroke-width="2.3" stroke-linejoin="round" stroke-linecap="round"/>
<path d="M1001.7,398.4 L1010.0,391.5 L1018.7,385.0 L1027.9,378.9 L1037.4,373.3 L1047.2,368.1 L1057.4,363.3 L1067.9,359.0 L1078.7,355.2 L1089.7,351.9 L1100.9,349.0 L1112.3,346.7 L1123.9,344.9 L1135.6,343.6 L1147.4,342.9 L1159.2,342.6 L1171.1,342.9 L1183.0,343.7 L1194.8,345.0 L1206.6,346.9 L1218.2,349.2 L1229.8,352.1 L1241.1,355.4 L1252.3,359.3 L1263.3,363.6 L1274.0,368.4 L1284.4,373.6 L1294.5,379.3 L1304.2,385.4 L1313.6,392.0 L1322.7,398.9 L1331.3,406.2 L1339.4,413.8 L1347.1,421.8 L1354.3,430.0 L1361.1,438.6 L1367.3,447.4 L1372.9,456.5 L1378.1,465.8 L1382.6,475.3 L1386.6,484.9 L1390.0,494.7 L1392.8,504.6 L1395.0,514.6 L1396.6,524.6 L1397.5,534.7 L1397.9,544.7 L1397.6,554.8 L1396.7,564.8 L1395.2,574.7 L1393.1,584.5 L1390.4,594.2 L1387.1,603.8 L1383.2,613.1 L1378.7,622.3 L1373.7,631.2 L1368.1,639.8 L1362.0,648.2 L1355.3,656.3 L1348.2,664.0 L1340.5,671.5 L1332.4,678.5 L1323.9,685.2 L1315.0,691.4 L1305.6,697.2 L1295.9,702.6 L1285.8,707.6 L1275.5,712.1 L1264.8,716.1 L1253.9,719.6 L1242.7,722.7 L1231.4,725.2 L1219.9,727.2 L1208.2,728.7 L1196.5,729.7 L1184.7,730.2 L1172.8,730.1 L1160.9,729.5 L1149.1,728.4 L1137.3,726.8 L1125.6,724.6 L1114.0,722.0 L1102.5,718.8 L1091.3,715.2 L1080.2,711.0 L1069.4,706.4 L1058.9,701.4 L1048.7,695.9 L1038.7,689.9 L1029.2,683.6 L1020.0,676.8 L1011.2,669.7 L1002.9,662.2 L995.0,654.4 L987.6,646.2 L980.7,637.8 L974.2,629.0 L968.3,620.1 L963.0,610.9 L958.2,601.5 L954.0,591.9 L950.3,582.2 L947.3,572.3 L944.9,562.4 L943.0,552.4 L941.8,542.3" fill="none" stroke="#000" stroke-width="2.3" stroke-linejoin="round" stroke-linecap="round"/>
<g clip-path="url(#cInTop)">
<path d="M1369.1,563.1 L1367.6,571.8 L1365.6,580.4 L1363.0,588.9 L1360.0,597.2 L1356.4,605.4 L1352.3,613.4 L1347.7,621.1 L1342.7,628.7 L1337.2,636.0 L1331.2,643.0 L1324.8,649.7 L1317.9,656.1 L1310.7,662.2 L1303.1,667.9 L1295.1,673.3 L1286.8,678.3 L1278.2,683.0 L1269.3,687.2 L1260.1,691.0 L1250.6,694.4 L1241.0,697.4 L1231.1,700.0 L1221.1,702.1 L1211.0,703.7 L1200.7,704.9 L1190.4,705.6 L1180.0,705.9 L1169.6,705.7 L1159.1,705.1 L1148.7,704.0 L1138.4,702.4 L1128.1,700.4 L1118.0,698.0 L1107.9,695.1 L1098.1,691.8 L1088.4,688.1 L1079.0,683.9 L1069.8,679.3 L1060.9,674.4 L1052.3,669.1 L1044.0,663.4 L1036.0,657.4 L1028.4,651.1 L1021.1,644.4 L1014.3,637.4 L1007.9,630.2 L1001.9,622.7 L996.4,615.0 L991.3,607.1 L986.7,599.0 L982.6,590.7 L979.1,582.2 L976.0,573.6 L973.4,565.0 L971.4,556.2 L969.9,547.4 L969.0,538.5 L968.6,529.7 L968.7,520.8 L969.4,512.1 L970.6,503.3 L972.3,494.7 L974.6,486.1 L977.4,477.7 L980.8,469.5 L984.6,461.4 L988.9,453.5 L993.7,445.9 L999.0,438.5 L1004.8,431.3 L1011.0,424.4 L1017.6,417.9 L1024.6,411.6 L1032.1,405.7 L1039.8,400.1 L1048.0,394.9 L1056.5,390.1 L1065.2,385.7 L1074.3,381.6 L1083.6,378.0 L1093.2,374.8 L1102.9,372.1 L1112.8,369.7 L1122.9,367.9 L1133.1,366.4 L1143.4,365.5 L1153.8,365.0 L1164.2,364.9 L1174.7,365.3 L1185.1,366.2 L1195.5,367.5 L1205.8,369.3 L1216.0,371.5 L1226.1,374.2 L1236.0,377.3 L1245.7,380.8 L1255.3,384.8 L1264.6,389.1 L1273.7,393.9 L1282.5,399.0 L1290.9,404.5 L1299.1,410.3 L1306.9,416.5 L1314.3,423.0 L1321.3,429.8 L1328.0,436.9 L1334.2,444.3 L1339.9,451.9 L1345.2,459.7 L1350.0,467.8 L1354.4,476.0 L1358.2,484.4 L1361.5,492.9 L1364.4,501.5 L1366.6,510.2 L1368.4,519.0 L1369.6,527.8 L1370.3,536.7 L1370.4,545.5 L1370.0,554.4Z" fill="url(#gIn)"/>
<g clip-path="url(#cInBot)"><rect x="900" y="300" width="520" height="560" fill="url(#bgv)"/></g>
<path d="M1354.6,672.1 L1353.1,680.8 L1351.1,689.4 L1348.5,697.9 L1345.5,706.2 L1341.9,714.4 L1337.8,722.4 L1333.2,730.1 L1328.2,737.7 L1322.7,745.0 L1316.7,752.0 L1310.3,758.7 L1303.4,765.1 L1296.2,771.2 L1288.6,776.9 L1280.6,782.3 L1272.3,787.3 L1263.7,792.0 L1254.8,796.2 L1245.6,800.0 L1236.1,803.4 L1226.5,806.4 L1216.6,809.0 L1206.6,811.1 L1196.5,812.7 L1186.2,813.9 L1175.9,814.6 L1165.5,814.9 L1155.1,814.7 L1144.6,814.1 L1134.2,813.0 L1123.9,811.4 L1113.6,809.4 L1103.5,807.0 L1093.4,804.1 L1083.6,800.8 L1073.9,797.1 L1064.5,792.9 L1055.3,788.3 L1046.4,783.4 L1037.8,778.1 L1029.5,772.4 L1021.5,766.4 L1013.9,760.1 L1006.6,753.4 L999.8,746.4 L993.4,739.2 L987.4,731.7 L981.9,724.0 L976.8,716.1 L972.2,708.0 L968.1,699.7 L964.6,691.2 L961.5,682.6 L958.9,674.0 L956.9,665.2 L955.4,656.4 L954.5,647.5 L954.1,638.7 L954.2,629.8 L954.9,621.1 L956.1,612.3 L957.8,603.7 L960.1,595.1 L962.9,586.7 L966.3,578.5 L970.1,570.4 L974.4,562.5 L979.2,554.9 L984.5,547.5 L990.3,540.3 L996.5,533.4 L1003.1,526.9 L1010.1,520.6 L1017.6,514.7 L1025.3,509.1 L1033.5,503.9 L1042.0,499.1 L1050.7,494.7 L1059.8,490.6 L1069.1,487.0 L1078.7,483.8 L1088.4,481.1 L1098.3,478.7 L1108.4,476.9 L1118.6,475.4 L1128.9,474.5 L1139.3,474.0 L1149.7,473.9 L1160.2,474.3 L1170.6,475.2 L1181.0,476.5 L1191.3,478.3 L1201.5,480.5 L1211.6,483.2 L1221.5,486.3 L1231.2,489.8 L1240.8,493.8 L1250.1,498.1 L1259.2,502.9 L1268.0,508.0 L1276.4,513.5 L1284.6,519.3 L1292.4,525.5 L1299.8,532.0 L1306.8,538.8 L1313.5,545.9 L1319.7,553.3 L1325.4,560.9 L1330.7,568.7 L1335.5,576.8 L1339.9,585.0 L1343.7,593.4 L1347.0,601.9 L1349.9,610.5 L1352.1,619.2 L1353.9,628.0 L1355.1,636.8 L1355.8,645.7 L1355.9,654.5 L1355.5,663.4Z" fill="none" stroke="#000" stroke-width="2.3" stroke-linejoin="round" stroke-linecap="round"/>
<path d="M1211.8,499.9 L1236.7,440.1 L1230.2,488.5 L1205.3,548.3Z" fill="#6b6984" stroke="#000" stroke-width="2.3" stroke-linejoin="round" stroke-linecap="round"/>
<path d="M1277.2,643.2 L1348.9,667.2 L1342.4,715.6 L1270.7,691.6Z" fill="#6b6984" stroke="#000" stroke-width="2.3" stroke-linejoin="round" stroke-linecap="round"/>
<path d="M1039.6,563.7 L967.9,539.7 L961.4,588.1 L1033.1,612.1Z" fill="#6b6984" stroke="#000" stroke-width="2.3" stroke-linejoin="round" stroke-linecap="round"/>
<path d="M1035.2,578.5 L1034.6,584.0 L1034.4,589.5 L1034.4,595.1 L1034.9,600.6 L1035.6,606.2 L1036.7,611.7 L1038.1,617.2 L1039.9,622.6 L1041.9,627.9 L1044.3,633.2 L1047.0,638.4 L1050.0,643.4 L1053.3,648.3 L1056.9,653.1 L1060.7,657.8 L1064.9,662.2 L1069.2,666.5 L1073.9,670.6 L1078.7,674.6 L1083.8,678.3 L1089.1,681.7 L1094.6,685.0 L1100.2,688.0 L1106.0,690.8 L1112.0,693.3 L1118.1,695.6 L1124.3,697.6 L1130.6,699.3 L1137.0,700.8 L1143.5,702.0 L1150.0,702.9 L1156.5,703.5 L1163.0,703.8 L1169.6,703.9 L1176.1,703.7 L1182.6,703.1 L1189.0,702.3 L1195.4,701.2 L1201.6,699.9 L1207.8,698.2 L1213.8,696.3 L1219.7,694.1 L1225.5,691.7 L1231.0,689.0 L1236.4,686.1 L1241.6,682.9 L1246.6,679.5 L1251.3,675.8 L1255.9,672.0 L1260.1,668.0 L1264.1,663.7 L1267.8,659.3 L1271.3,654.7 L1274.4,650.0 L1277.3,645.1 L1279.9,640.1 L1282.1,635.0 L1284.0,629.7 L1285.6,624.4 L1286.9,619.0 L1287.8,613.6 L1281.3,661.9 L1280.4,667.4 L1279.1,672.8 L1277.5,678.1 L1275.6,683.3 L1273.4,688.5 L1270.8,693.5 L1268.0,698.4 L1264.8,703.1 L1261.4,707.7 L1257.6,712.1 L1253.6,716.3 L1249.4,720.4 L1244.8,724.2 L1240.1,727.9 L1235.1,731.3 L1229.9,734.4 L1224.5,737.4 L1219.0,740.1 L1213.2,742.5 L1207.3,744.7 L1201.3,746.6 L1195.1,748.3 L1188.9,749.6 L1182.5,750.7 L1176.1,751.5 L1169.6,752.0 L1163.1,752.3 L1156.5,752.2 L1150.0,751.9 L1143.5,751.3 L1137.0,750.4 L1130.5,749.2 L1124.1,747.7 L1117.8,746.0 L1111.6,744.0 L1105.5,741.7 L1099.5,739.2 L1093.7,736.4 L1088.1,733.4 L1082.6,730.1 L1077.3,726.6 L1072.2,722.9 L1067.4,719.0 L1062.7,714.9 L1058.4,710.6 L1054.2,706.1 L1050.4,701.5 L1046.8,696.7 L1043.5,691.8 L1040.5,686.7 L1037.8,681.6 L1035.4,676.3 L1033.4,671.0 L1031.6,665.5 L1030.2,660.1 L1029.1,654.5 L1028.4,649.0 L1027.9,643.4 L1027.9,637.9 L1028.1,632.4 L1028.7,626.9Z" fill="url(#gHub)" stroke="#000" stroke-width="2.3" stroke-linejoin="round" stroke-linecap="round"/>
<path d="M1210.5,503.1 L1236.7,440.1 L1218.8,434.2 L1192.6,497.1Z" fill="#bdbee7"/>
<path d="M1273.4,642.0 L1348.9,667.2 L1355.1,652.3 L1279.7,627.0Z" fill="#bdbee7"/>
<path d="M1049.6,550.1 L974.1,524.8 L967.9,539.7 L1043.3,565.0Z" fill="#bdbee7"/>
<path d="M1287.8,613.6 L1286.8,619.1 L1285.6,624.5 L1284.0,629.9 L1282.0,635.1 L1279.8,640.3 L1277.2,645.4 L1274.3,650.3 L1271.1,655.0 L1267.6,659.6 L1263.8,664.1 L1259.7,668.3 L1255.4,672.4 L1250.8,676.2 L1246.0,679.9 L1241.0,683.3 L1235.7,686.5 L1230.3,689.4 L1224.6,692.1 L1218.8,694.5 L1212.8,696.7 L1206.7,698.5 L1200.5,700.1 L1194.2,701.5 L1187.7,702.5 L1181.3,703.3 L1174.7,703.7 L1168.1,703.9 L1161.5,703.8 L1154.9,703.4 L1148.3,702.7 L1141.8,701.7 L1135.3,700.4 L1128.9,698.9 L1122.5,697.1 L1116.3,695.0 L1110.2,692.6 L1104.2,690.0 L1098.4,687.1 L1092.8,684.0 L1087.3,680.6 L1082.1,677.0 L1077.0,673.2 L1072.2,669.2 L1067.6,665.0 L1063.3,660.6 L1059.2,656.0 L1055.4,651.3 L1052.0,646.4 L1048.7,641.4 L1045.8,636.2 L1043.3,631.0 L1041.0,625.6 L1039.0,620.2 L1037.4,614.7 L1036.2,609.2 L1035.2,603.6 L1034.6,598.0 L1034.4,592.4 L1034.4,586.8 L1034.9,581.2 L1035.6,575.7 L1036.7,570.2 L1038.2,564.8 L1040.0,559.5 L1042.1,554.3 L1044.5,549.2 L1047.2,544.2 L1050.3,539.4 L1053.6,534.7 L1057.3,530.1 L1061.2,525.8 L1065.4,521.6 L1069.8,517.7 L1074.5,513.9 L1079.5,510.4 L1084.6,507.1 L1090.0,504.1 L1095.5,501.3 L1101.3,498.7 L1107.1,496.4 L1113.2,494.4 L1119.4,492.7 L1125.6,491.2 L1132.0,490.0 L1138.5,489.1 L1145.0,488.5 L1151.6,488.2 L1158.2,488.1 L1164.8,488.4 L1171.4,489.0 L1177.9,489.8 L1184.4,490.9 L1190.9,492.3 L1197.3,494.0 L1203.6,496.0 L1209.7,498.2 L1215.8,500.7 L1221.7,503.5 L1227.4,506.5 L1233.0,509.7 L1238.3,513.2 L1243.5,516.9 L1248.4,520.8 L1253.1,524.9 L1257.6,529.2 L1261.8,533.7 L1265.7,538.4 L1269.3,543.2 L1272.7,548.1 L1275.7,553.2 L1278.5,558.4 L1280.9,563.7 L1283.0,569.1 L1284.8,574.6 L1286.2,580.1 L1287.3,585.6 L1288.1,591.2 L1288.6,596.8 L1288.6,602.4 L1288.4,608.0Z" fill="#bdbee7"/>
<path d="M1212.1,499.1 L1236.7,440.1" fill="none" stroke="#000" stroke-width="2.3" stroke-linejoin="round" stroke-linecap="round"/>
<path d="M1194.2,493.2 L1218.8,434.2" fill="none" stroke="#000" stroke-width="2.3" stroke-linejoin="round" stroke-linecap="round"/>
<path d="M1278.1,643.5 L1348.9,667.2" fill="none" stroke="#000" stroke-width="2.3" stroke-linejoin="round" stroke-linecap="round"/>
<path d="M1284.4,628.6 L1355.1,652.3" fill="none" stroke="#000" stroke-width="2.3" stroke-linejoin="round" stroke-linecap="round"/>
<path d="M1044.8,548.5 L974.1,524.8" fill="none" stroke="#000" stroke-width="2.3" stroke-linejoin="round" stroke-linecap="round"/>
<path d="M1038.6,563.4 L967.9,539.7" fill="none" stroke="#000" stroke-width="2.3" stroke-linejoin="round" stroke-linecap="round"/>
<path d="M1278.1,643.5 L1275.4,648.5 L1272.3,653.3 L1268.9,657.9 L1265.3,662.4 L1261.4,666.7 L1257.2,670.8 L1252.7,674.7 L1248.0,678.4 L1243.1,681.9 L1238.0,685.1 L1232.7,688.2 L1227.1,690.9 L1221.4,693.5 L1215.6,695.7 L1209.6,697.7 L1203.4,699.4 L1197.2,700.9 L1190.8,702.1 L1184.4,702.9 L1177.9,703.5 L1171.4,703.9 L1164.9,703.9 L1158.3,703.6 L1151.7,703.1 L1145.2,702.3 L1138.7,701.2 L1132.3,699.8 L1126.0,698.1 L1119.7,696.2 L1113.6,694.0 L1107.6,691.5 L1101.7,688.8 L1096.0,685.8 L1090.5,682.6 L1085.1,679.2 L1080.0,675.5 L1075.1,671.6 L1070.4,667.6 L1065.9,663.3 L1061.7,658.9 L1057.8,654.3 L1054.1,649.5 L1050.8,644.6 L1047.7,639.6 L1044.9,634.4 L1042.4,629.2 L1040.3,623.8 L1038.5,618.4 L1037.0,612.9 L1035.8,607.4 L1035.0,601.9 L1034.5,596.3 L1034.3,590.7 L1034.5,585.2 L1035.0,579.7 L1035.9,574.2 L1037.1,568.8 L1038.6,563.4" fill="none" stroke="#000" stroke-width="2.3" stroke-linejoin="round" stroke-linecap="round"/>
<path d="M1044.8,548.5 L1047.6,543.6 L1050.6,538.9 L1053.9,534.3 L1057.5,529.9 L1061.3,525.7 L1065.4,521.6 L1069.7,517.8 L1074.3,514.1 L1079.1,510.6 L1084.2,507.4 L1089.4,504.4 L1094.8,501.6 L1100.4,499.1 L1106.1,496.8 L1112.0,494.8 L1118.0,493.0 L1124.1,491.5 L1130.3,490.3 L1136.6,489.3 L1143.0,488.6 L1149.4,488.2 L1155.8,488.1 L1162.3,488.3 L1168.7,488.7 L1175.2,489.4 L1181.6,490.4 L1187.9,491.6 L1194.2,493.2" fill="none" stroke="#000" stroke-width="2.3" stroke-linejoin="round" stroke-linecap="round"/>
<path d="M1212.1,499.1 L1218.0,501.7 L1223.7,504.5 L1229.2,507.5 L1234.6,510.7 L1239.8,514.2 L1244.8,517.9 L1249.5,521.7 L1254.1,525.8 L1258.4,530.1 L1262.4,534.5 L1266.2,539.0 L1269.7,543.8 L1273.0,548.6 L1276.0,553.6 L1278.6,558.7 L1281.0,563.9 L1283.0,569.2 L1284.8,574.5 L1286.2,579.9 L1287.3,585.3 L1288.1,590.8 L1288.5,596.3 L1288.6,601.7 L1288.4,607.2 L1287.9,612.6 L1287.1,618.0 L1285.9,623.4 L1284.4,628.6" fill="none" stroke="#000" stroke-width="2.3" stroke-linejoin="round" stroke-linecap="round"/>
<path d="M1240.7,607.0 L1240.1,610.5 L1239.3,613.9 L1238.3,617.3 L1237.1,620.6 L1235.7,623.8 L1234.1,627.0 L1232.3,630.1 L1230.3,633.0 L1228.1,635.9 L1225.7,638.7 L1223.1,641.4 L1220.4,643.9 L1217.6,646.4 L1214.5,648.6 L1211.4,650.8 L1208.1,652.8 L1204.6,654.6 L1201.1,656.3 L1197.5,657.8 L1193.7,659.2 L1189.9,660.3 L1186.0,661.4 L1182.0,662.2 L1178.0,662.8 L1173.9,663.3 L1169.8,663.6 L1165.7,663.7 L1161.5,663.6 L1157.4,663.4 L1153.2,663.0 L1149.1,662.3 L1145.1,661.5 L1141.0,660.6 L1137.1,659.4 L1133.1,658.1 L1129.3,656.6 L1125.6,655.0 L1121.9,653.2 L1118.4,651.2 L1115.0,649.1 L1111.7,646.8 L1108.5,644.5 L1105.5,641.9 L1102.6,639.3 L1099.9,636.5 L1097.3,633.7 L1095.0,630.7 L1092.8,627.6 L1090.8,624.5 L1088.9,621.2 L1087.3,618.0 L1085.9,614.6 L1084.7,611.2 L1083.7,607.7 L1082.9,604.3 L1082.3,600.8 L1081.9,597.3 L1081.7,593.7 L1081.8,590.2 L1082.0,586.7 L1082.5,583.3 L1083.2,579.8 L1084.1,576.5 L1085.2,573.1 L1086.6,569.8 L1088.1,566.6 L1089.8,563.5 L1091.7,560.5 L1093.8,557.5 L1096.1,554.7 L1098.6,552.0 L1101.2,549.4 L1104.0,546.9 L1106.9,544.5 L1110.0,542.3 L1113.3,540.2 L1116.6,538.3 L1120.1,536.6 L1123.7,535.0 L1127.4,533.5 L1131.2,532.3 L1135.1,531.2 L1139.0,530.2 L1143.0,529.5 L1147.1,528.9 L1151.1,528.6 L1155.3,528.3 L1159.4,528.3 L1163.5,528.5 L1167.7,528.8 L1171.8,529.4 L1175.9,530.1 L1179.9,531.0 L1184.0,532.0 L1187.9,533.2 L1191.8,534.6 L1195.6,536.2 L1199.3,537.9 L1202.9,539.8 L1206.3,541.9 L1209.7,544.0 L1212.9,546.4 L1216.0,548.8 L1219.0,551.4 L1221.8,554.1 L1224.4,556.9 L1226.9,559.8 L1229.2,562.9 L1231.3,566.0 L1233.2,569.2 L1234.9,572.4 L1236.4,575.7 L1237.7,579.1 L1238.9,582.6 L1239.8,586.0 L1240.5,589.5 L1240.9,593.0 L1241.2,596.5 L1241.3,600.0 L1241.1,603.5Z" fill="url(#gHin)"/>
<g clip-path="url(#cHTop)"><g clip-path="url(#cHBot)"><rect x="900" y="300" width="520" height="560" fill="url(#bgv)"/></g>
<path d="M1234.2,655.4 L1233.7,658.9 L1232.9,662.3 L1231.8,665.6 L1230.6,668.9 L1229.2,672.2 L1227.6,675.4 L1225.8,678.4 L1223.8,681.4 L1221.6,684.3 L1219.2,687.1 L1216.6,689.8 L1213.9,692.3 L1211.1,694.7 L1208.0,697.0 L1204.9,699.2 L1201.6,701.2 L1198.2,703.0 L1194.6,704.7 L1191.0,706.2 L1187.2,707.5 L1183.4,708.7 L1179.5,709.7 L1175.5,710.6 L1171.5,711.2 L1167.4,711.7 L1163.3,712.0 L1159.2,712.1 L1155.0,712.0 L1150.9,711.8 L1146.7,711.3 L1142.6,710.7 L1138.6,709.9 L1134.5,709.0 L1130.6,707.8 L1126.7,706.5 L1122.8,705.0 L1119.1,703.4 L1115.4,701.6 L1111.9,699.6 L1108.5,697.5 L1105.2,695.2 L1102.0,692.8 L1099.0,690.3 L1096.1,687.7 L1093.4,684.9 L1090.8,682.0 L1088.5,679.1 L1086.3,676.0 L1084.3,672.9 L1082.4,669.6 L1080.8,666.3 L1079.4,663.0 L1078.2,659.6 L1077.2,656.1 L1076.4,652.7 L1075.8,649.2 L1075.4,645.6 L1075.2,642.1 L1075.3,638.6 L1075.5,635.1 L1076.0,631.7 L1076.7,628.2 L1077.6,624.8 L1078.7,621.5 L1080.1,618.2 L1081.6,615.0 L1083.3,611.9 L1085.2,608.9 L1087.3,605.9 L1089.6,603.1 L1092.1,600.3 L1094.7,597.7 L1097.5,595.3 L1100.4,592.9 L1103.5,590.7 L1106.8,588.6 L1110.1,586.7 L1113.6,584.9 L1117.2,583.3 L1120.9,581.9 L1124.7,580.6 L1128.6,579.5 L1132.5,578.6 L1136.5,577.9 L1140.6,577.3 L1144.7,576.9 L1148.8,576.7 L1152.9,576.7 L1157.1,576.9 L1161.2,577.2 L1165.3,577.7 L1169.4,578.5 L1173.5,579.3 L1177.5,580.4 L1181.4,581.6 L1185.3,583.0 L1189.1,584.6 L1192.8,586.3 L1196.4,588.2 L1199.8,590.2 L1203.2,592.4 L1206.4,594.7 L1209.5,597.2 L1212.5,599.8 L1215.3,602.5 L1217.9,605.3 L1220.4,608.2 L1222.7,611.2 L1224.8,614.4 L1226.7,617.5 L1228.4,620.8 L1229.9,624.1 L1231.2,627.5 L1232.4,630.9 L1233.3,634.4 L1234.0,637.9 L1234.5,641.4 L1234.7,644.9 L1234.8,648.4 L1234.6,651.9Z" fill="none" stroke="#000" stroke-width="2.3" stroke-linejoin="round" stroke-linecap="round"/>
<path d="M1187.7,533.2 L1181.2,581.6" fill="none" stroke="#000" stroke-width="2.3" stroke-linejoin="round" stroke-linecap="round"/>
</g>
<path d="M1240.7,607.0 L1240.1,610.5 L1239.3,613.9 L1238.3,617.3 L1237.1,620.6 L1235.7,623.8 L1234.1,627.0 L1232.3,630.1 L1230.3,633.0 L1228.1,635.9 L1225.7,638.7 L1223.1,641.4 L1220.4,643.9 L1217.6,646.4 L1214.5,648.6 L1211.4,650.8 L1208.1,652.8 L1204.6,654.6 L1201.1,656.3 L1197.5,657.8 L1193.7,659.2 L1189.9,660.3 L1186.0,661.4 L1182.0,662.2 L1178.0,662.8 L1173.9,663.3 L1169.8,663.6 L1165.7,663.7 L1161.5,663.6 L1157.4,663.4 L1153.2,663.0 L1149.1,662.3 L1145.1,661.5 L1141.0,660.6 L1137.1,659.4 L1133.1,658.1 L1129.3,656.6 L1125.6,655.0 L1121.9,653.2 L1118.4,651.2 L1115.0,649.1 L1111.7,646.8 L1108.5,644.5 L1105.5,641.9 L1102.6,639.3 L1099.9,636.5 L1097.3,633.7 L1095.0,630.7 L1092.8,627.6 L1090.8,624.5 L1088.9,621.2 L1087.3,618.0 L1085.9,614.6 L1084.7,611.2 L1083.7,607.7 L1082.9,604.3 L1082.3,600.8 L1081.9,597.3 L1081.7,593.7 L1081.8,590.2 L1082.0,586.7 L1082.5,583.3 L1083.2,579.8 L1084.1,576.5 L1085.2,573.1 L1086.6,569.8 L1088.1,566.6 L1089.8,563.5 L1091.7,560.5 L1093.8,557.5 L1096.1,554.7 L1098.6,552.0 L1101.2,549.4 L1104.0,546.9 L1106.9,544.5 L1110.0,542.3 L1113.3,540.2 L1116.6,538.3 L1120.1,536.6 L1123.7,535.0 L1127.4,533.5 L1131.2,532.3 L1135.1,531.2 L1139.0,530.2 L1143.0,529.5 L1147.1,528.9 L1151.1,528.6 L1155.3,528.3 L1159.4,528.3 L1163.5,528.5 L1167.7,528.8 L1171.8,529.4 L1175.9,530.1 L1179.9,531.0 L1184.0,532.0 L1187.9,533.2 L1191.8,534.6 L1195.6,536.2 L1199.3,537.9 L1202.9,539.8 L1206.3,541.9 L1209.7,544.0 L1212.9,546.4 L1216.0,548.8 L1219.0,551.4 L1221.8,554.1 L1224.4,556.9 L1226.9,559.8 L1229.2,562.9 L1231.3,566.0 L1233.2,569.2 L1234.9,572.4 L1236.4,575.7 L1237.7,579.1 L1238.9,582.6 L1239.8,586.0 L1240.5,589.5 L1240.9,593.0 L1241.2,596.5 L1241.3,600.0 L1241.1,603.5Z" fill="none" stroke="#000" stroke-width="2.3" stroke-linejoin="round" stroke-linecap="round"/>
<path d="M1210.4,516.4 L1210.3,517.0 L1210.2,517.7 L1210.0,518.3 L1209.7,518.9 L1209.5,519.5 L1209.2,520.1 L1208.8,520.7 L1208.5,521.3 L1208.1,521.8 L1207.6,522.3 L1207.1,522.8 L1206.6,523.3 L1206.1,523.8 L1205.5,524.2 L1204.9,524.6 L1204.3,525.0 L1203.7,525.3 L1203.0,525.6 L1202.3,525.9 L1201.6,526.2 L1200.9,526.4 L1200.2,526.6 L1199.4,526.7 L1198.7,526.9 L1197.9,527.0 L1197.1,527.0 L1196.3,527.0 L1195.6,527.0 L1194.8,527.0 L1194.0,526.9 L1193.3,526.8 L1192.5,526.6 L1191.7,526.4 L1191.0,526.2 L1190.3,526.0 L1189.5,525.7 L1188.8,525.4 L1188.1,525.0 L1187.5,524.7 L1186.8,524.3 L1186.2,523.9 L1185.6,523.4 L1185.1,522.9 L1184.5,522.4 L1184.0,521.9 L1183.5,521.4 L1183.1,520.8 L1182.7,520.3 L1182.3,519.7 L1182.0,519.1 L1181.7,518.4 L1181.4,517.8 L1181.2,517.2 L1181.0,516.5 L1180.8,515.9 L1180.7,515.2 L1180.6,514.6 L1180.6,513.9 L1180.6,513.2 L1180.7,512.6 L1180.8,511.9 L1180.9,511.3 L1181.1,510.7 L1181.3,510.0 L1181.5,509.4 L1181.8,508.8 L1182.1,508.2 L1182.5,507.7 L1182.9,507.1 L1183.3,506.6 L1183.8,506.1 L1184.3,505.6 L1184.8,505.1 L1185.3,504.7 L1185.9,504.3 L1186.5,503.9 L1187.2,503.5 L1187.8,503.2 L1188.5,502.9 L1189.2,502.6 L1189.9,502.4 L1190.6,502.2 L1191.4,502.0 L1192.1,501.9 L1192.9,501.8 L1193.6,501.7 L1194.4,501.6 L1195.2,501.6 L1196.0,501.7 L1196.7,501.7 L1197.5,501.8 L1198.3,502.0 L1199.0,502.1 L1199.8,502.3 L1200.5,502.6 L1201.2,502.8 L1202.0,503.1 L1202.6,503.4 L1203.3,503.8 L1204.0,504.2 L1204.6,504.6 L1205.2,505.0 L1205.8,505.5 L1206.3,506.0 L1206.9,506.5 L1207.4,507.0 L1207.8,507.6 L1208.3,508.1 L1208.7,508.7 L1209.0,509.3 L1209.3,509.9 L1209.6,510.5 L1209.9,511.2 L1210.1,511.8 L1210.2,512.5 L1210.4,513.1 L1210.5,513.8 L1210.5,514.4 L1210.5,515.1 L1210.5,515.7Z" fill="url(#gh0)" stroke="#000" stroke-width="2.3" stroke-linejoin="round" stroke-linecap="round"/>
<clipPath id="ch0"><path d="M1210.4,516.4 L1210.3,517.0 L1210.2,517.7 L1210.0,518.3 L1209.7,518.9 L1209.5,519.5 L1209.2,520.1 L1208.8,520.7 L1208.5,521.3 L1208.1,521.8 L1207.6,522.3 L1207.1,522.8 L1206.6,523.3 L1206.1,523.8 L1205.5,524.2 L1204.9,524.6 L1204.3,525.0 L1203.7,525.3 L1203.0,525.6 L1202.3,525.9 L1201.6,526.2 L1200.9,526.4 L1200.2,526.6 L1199.4,526.7 L1198.7,526.9 L1197.9,527.0 L1197.1,527.0 L1196.3,527.0 L1195.6,527.0 L1194.8,527.0 L1194.0,526.9 L1193.3,526.8 L1192.5,526.6 L1191.7,526.4 L1191.0,526.2 L1190.3,526.0 L1189.5,525.7 L1188.8,525.4 L1188.1,525.0 L1187.5,524.7 L1186.8,524.3 L1186.2,523.9 L1185.6,523.4 L1185.1,522.9 L1184.5,522.4 L1184.0,521.9 L1183.5,521.4 L1183.1,520.8 L1182.7,520.3 L1182.3,519.7 L1182.0,519.1 L1181.7,518.4 L1181.4,517.8 L1181.2,517.2 L1181.0,516.5 L1180.8,515.9 L1180.7,515.2 L1180.6,514.6 L1180.6,513.9 L1180.6,513.2 L1180.7,512.6 L1180.8,511.9 L1180.9,511.3 L1181.1,510.7 L1181.3,510.0 L1181.5,509.4 L1181.8,508.8 L1182.1,508.2 L1182.5,507.7 L1182.9,507.1 L1183.3,506.6 L1183.8,506.1 L1184.3,505.6 L1184.8,505.1 L1185.3,504.7 L1185.9,504.3 L1186.5,503.9 L1187.2,503.5 L1187.8,503.2 L1188.5,502.9 L1189.2,502.6 L1189.9,502.4 L1190.6,502.2 L1191.4,502.0 L1192.1,501.9 L1192.9,501.8 L1193.6,501.7 L1194.4,501.6 L1195.2,501.6 L1196.0,501.7 L1196.7,501.7 L1197.5,501.8 L1198.3,502.0 L1199.0,502.1 L1199.8,502.3 L1200.5,502.6 L1201.2,502.8 L1202.0,503.1 L1202.6,503.4 L1203.3,503.8 L1204.0,504.2 L1204.6,504.6 L1205.2,505.0 L1205.8,505.5 L1206.3,506.0 L1206.9,506.5 L1207.4,507.0 L1207.8,507.6 L1208.3,508.1 L1208.7,508.7 L1209.0,509.3 L1209.3,509.9 L1209.6,510.5 L1209.9,511.2 L1210.1,511.8 L1210.2,512.5 L1210.4,513.1 L1210.5,513.8 L1210.5,514.4 L1210.5,515.1 L1210.5,515.7Z"/></clipPath>
<path clip-path="url(#ch0)" d="M1200.5,502.6 L1194.0,551.2" fill="none" stroke="#000" stroke-width="2.3" stroke-linejoin="round" stroke-linecap="round"/>
<path d="M1269.7,563.5 L1269.6,564.1 L1269.5,564.8 L1269.3,565.4 L1269.0,566.0 L1268.8,566.6 L1268.5,567.2 L1268.1,567.8 L1267.7,568.4 L1267.3,568.9 L1266.9,569.4 L1266.4,569.9 L1265.9,570.4 L1265.4,570.9 L1264.8,571.3 L1264.2,571.7 L1263.6,572.1 L1262.9,572.4 L1262.3,572.7 L1261.6,573.0 L1260.9,573.3 L1260.2,573.5 L1259.4,573.7 L1258.7,573.8 L1257.9,574.0 L1257.2,574.0 L1256.4,574.1 L1255.6,574.1 L1254.9,574.1 L1254.1,574.1 L1253.3,574.0 L1252.5,573.9 L1251.8,573.7 L1251.0,573.5 L1250.3,573.3 L1249.5,573.1 L1248.8,572.8 L1248.1,572.5 L1247.4,572.1 L1246.8,571.8 L1246.1,571.4 L1245.5,571.0 L1244.9,570.5 L1244.4,570.0 L1243.8,569.5 L1243.3,569.0 L1242.8,568.5 L1242.4,567.9 L1242.0,567.4 L1241.6,566.8 L1241.3,566.2 L1240.9,565.5 L1240.7,564.9 L1240.5,564.3 L1240.3,563.6 L1240.1,563.0 L1240.0,562.3 L1239.9,561.7 L1239.9,561.0 L1239.9,560.3 L1240.0,559.7 L1240.0,559.0 L1240.2,558.4 L1240.4,557.8 L1240.6,557.1 L1240.8,556.5 L1241.1,555.9 L1241.4,555.3 L1241.8,554.8 L1242.2,554.2 L1242.6,553.7 L1243.1,553.2 L1243.5,552.7 L1244.1,552.2 L1244.6,551.8 L1245.2,551.4 L1245.8,551.0 L1246.4,550.6 L1247.1,550.3 L1247.8,550.0 L1248.5,549.7 L1249.2,549.5 L1249.9,549.3 L1250.6,549.1 L1251.4,549.0 L1252.1,548.8 L1252.9,548.8 L1253.7,548.7 L1254.5,548.7 L1255.2,548.8 L1256.0,548.8 L1256.8,548.9 L1257.6,549.1 L1258.3,549.2 L1259.1,549.4 L1259.8,549.7 L1260.5,549.9 L1261.2,550.2 L1261.9,550.5 L1262.6,550.9 L1263.3,551.3 L1263.9,551.7 L1264.5,552.1 L1265.1,552.6 L1265.6,553.1 L1266.2,553.6 L1266.7,554.1 L1267.1,554.6 L1267.5,555.2 L1267.9,555.8 L1268.3,556.4 L1268.6,557.0 L1268.9,557.6 L1269.2,558.3 L1269.4,558.9 L1269.5,559.6 L1269.7,560.2 L1269.8,560.9 L1269.8,561.5 L1269.8,562.2 L1269.8,562.8Z" fill="url(#gh1)" stroke="#000" stroke-width="2.3" stroke-linejoin="round" stroke-linecap="round"/>
<path d="M1274.3,630.8 L1274.2,631.5 L1274.1,632.1 L1273.9,632.8 L1273.6,633.4 L1273.4,634.0 L1273.1,634.6 L1272.7,635.2 L1272.3,635.7 L1271.9,636.3 L1271.5,636.8 L1271.0,637.3 L1270.5,637.8 L1270.0,638.2 L1269.4,638.6 L1268.8,639.1 L1268.2,639.4 L1267.5,639.8 L1266.9,640.1 L1266.2,640.4 L1265.5,640.6 L1264.8,640.8 L1264.0,641.0 L1263.3,641.2 L1262.5,641.3 L1261.8,641.4 L1261.0,641.5 L1260.2,641.5 L1259.5,641.5 L1258.7,641.4 L1257.9,641.3 L1257.1,641.2 L1256.4,641.1 L1255.6,640.9 L1254.9,640.7 L1254.1,640.4 L1253.4,640.1 L1252.7,639.8 L1252.0,639.5 L1251.4,639.1 L1250.7,638.7 L1250.1,638.3 L1249.5,637.9 L1248.9,637.4 L1248.4,636.9 L1247.9,636.4 L1247.4,635.8 L1247.0,635.3 L1246.6,634.7 L1246.2,634.1 L1245.8,633.5 L1245.5,632.9 L1245.3,632.3 L1245.0,631.6 L1244.9,631.0 L1244.7,630.3 L1244.6,629.7 L1244.5,629.0 L1244.5,628.4 L1244.5,627.7 L1244.6,627.0 L1244.6,626.4 L1244.8,625.8 L1244.9,625.1 L1245.2,624.5 L1245.4,623.9 L1245.7,623.3 L1246.0,622.7 L1246.4,622.1 L1246.8,621.6 L1247.2,621.0 L1247.7,620.5 L1248.1,620.0 L1248.7,619.6 L1249.2,619.1 L1249.8,618.7 L1250.4,618.3 L1251.0,618.0 L1251.7,617.6 L1252.4,617.3 L1253.1,617.1 L1253.8,616.8 L1254.5,616.6 L1255.2,616.4 L1256.0,616.3 L1256.7,616.2 L1257.5,616.1 L1258.3,616.1 L1259.1,616.1 L1259.8,616.1 L1260.6,616.2 L1261.4,616.3 L1262.2,616.4 L1262.9,616.6 L1263.7,616.8 L1264.4,617.0 L1265.1,617.3 L1265.8,617.6 L1266.5,617.9 L1267.2,618.2 L1267.9,618.6 L1268.5,619.0 L1269.1,619.5 L1269.7,619.9 L1270.2,620.4 L1270.8,620.9 L1271.3,621.5 L1271.7,622.0 L1272.1,622.6 L1272.5,623.1 L1272.9,623.7 L1273.2,624.4 L1273.5,625.0 L1273.8,625.6 L1274.0,626.3 L1274.1,626.9 L1274.3,627.6 L1274.4,628.2 L1274.4,628.9 L1274.4,629.5 L1274.4,630.2Z" fill="url(#gh2)" stroke="#000" stroke-width="2.3" stroke-linejoin="round" stroke-linecap="round"/>
<path d="M1221.5,679.0 L1221.4,679.7 L1221.3,680.3 L1221.1,680.9 L1220.8,681.5 L1220.6,682.2 L1220.3,682.7 L1219.9,683.3 L1219.6,683.9 L1219.2,684.4 L1218.7,685.0 L1218.2,685.5 L1217.7,685.9 L1217.2,686.4 L1216.6,686.8 L1216.0,687.2 L1215.4,687.6 L1214.8,687.9 L1214.1,688.2 L1213.4,688.5 L1212.7,688.8 L1212.0,689.0 L1211.3,689.2 L1210.5,689.4 L1209.8,689.5 L1209.0,689.6 L1208.2,689.6 L1207.5,689.6 L1206.7,689.6 L1205.9,689.6 L1205.1,689.5 L1204.4,689.4 L1203.6,689.2 L1202.8,689.0 L1202.1,688.8 L1201.4,688.6 L1200.6,688.3 L1199.9,688.0 L1199.2,687.7 L1198.6,687.3 L1197.9,686.9 L1197.3,686.5 L1196.7,686.0 L1196.2,685.6 L1195.6,685.1 L1195.1,684.5 L1194.6,684.0 L1194.2,683.4 L1193.8,682.9 L1193.4,682.3 L1193.1,681.7 L1192.8,681.1 L1192.5,680.4 L1192.3,679.8 L1192.1,679.1 L1191.9,678.5 L1191.8,677.8 L1191.7,677.2 L1191.7,676.5 L1191.7,675.9 L1191.8,675.2 L1191.9,674.6 L1192.0,673.9 L1192.2,673.3 L1192.4,672.7 L1192.6,672.0 L1192.9,671.4 L1193.2,670.8 L1193.6,670.3 L1194.0,669.7 L1194.4,669.2 L1194.9,668.7 L1195.4,668.2 L1195.9,667.7 L1196.4,667.3 L1197.0,666.9 L1197.6,666.5 L1198.3,666.1 L1198.9,665.8 L1199.6,665.5 L1200.3,665.2 L1201.0,665.0 L1201.7,664.8 L1202.5,664.6 L1203.2,664.5 L1204.0,664.4 L1204.7,664.3 L1205.5,664.3 L1206.3,664.3 L1207.1,664.3 L1207.8,664.3 L1208.6,664.4 L1209.4,664.6 L1210.1,664.7 L1210.9,664.9 L1211.6,665.2 L1212.3,665.4 L1213.1,665.7 L1213.8,666.1 L1214.4,666.4 L1215.1,666.8 L1215.7,667.2 L1216.3,667.6 L1216.9,668.1 L1217.4,668.6 L1218.0,669.1 L1218.5,669.6 L1218.9,670.2 L1219.4,670.7 L1219.8,671.3 L1220.1,671.9 L1220.4,672.5 L1220.7,673.1 L1221.0,673.8 L1221.2,674.4 L1221.3,675.1 L1221.5,675.7 L1221.6,676.4 L1221.6,677.0 L1221.6,677.7 L1221.6,678.4Z" fill="url(#gh3)" stroke="#000" stroke-width="2.3" stroke-linejoin="round" stroke-linecap="round"/>
<path d="M1142.3,679.8 L1142.2,680.4 L1142.0,681.1 L1141.8,681.7 L1141.6,682.3 L1141.3,682.9 L1141.0,683.5 L1140.7,684.1 L1140.3,684.6 L1139.9,685.2 L1139.5,685.7 L1139.0,686.2 L1138.5,686.7 L1137.9,687.1 L1137.4,687.6 L1136.8,688.0 L1136.2,688.3 L1135.5,688.7 L1134.8,689.0 L1134.2,689.3 L1133.5,689.5 L1132.7,689.8 L1132.0,689.9 L1131.3,690.1 L1130.5,690.2 L1129.7,690.3 L1129.0,690.4 L1128.2,690.4 L1127.4,690.4 L1126.6,690.3 L1125.9,690.2 L1125.1,690.1 L1124.3,690.0 L1123.6,689.8 L1122.8,689.6 L1122.1,689.3 L1121.4,689.1 L1120.7,688.8 L1120.0,688.4 L1119.3,688.0 L1118.7,687.7 L1118.1,687.2 L1117.5,686.8 L1116.9,686.3 L1116.4,685.8 L1115.9,685.3 L1115.4,684.8 L1114.9,684.2 L1114.5,683.6 L1114.2,683.0 L1113.8,682.4 L1113.5,681.8 L1113.2,681.2 L1113.0,680.5 L1112.8,679.9 L1112.7,679.2 L1112.6,678.6 L1112.5,677.9 L1112.5,677.3 L1112.5,676.6 L1112.5,676.0 L1112.6,675.3 L1112.7,674.7 L1112.9,674.0 L1113.1,673.4 L1113.4,672.8 L1113.7,672.2 L1114.0,671.6 L1114.3,671.0 L1114.7,670.5 L1115.2,670.0 L1115.6,669.4 L1116.1,668.9 L1116.6,668.5 L1117.2,668.0 L1117.8,667.6 L1118.4,667.2 L1119.0,666.9 L1119.7,666.6 L1120.3,666.3 L1121.0,666.0 L1121.7,665.7 L1122.5,665.5 L1123.2,665.4 L1124.0,665.2 L1124.7,665.1 L1125.5,665.0 L1126.3,665.0 L1127.0,665.0 L1127.8,665.0 L1128.6,665.1 L1129.4,665.2 L1130.1,665.3 L1130.9,665.5 L1131.6,665.7 L1132.4,665.9 L1133.1,666.2 L1133.8,666.5 L1134.5,666.8 L1135.2,667.2 L1135.8,667.5 L1136.5,668.0 L1137.1,668.4 L1137.6,668.9 L1138.2,669.3 L1138.7,669.8 L1139.2,670.4 L1139.7,670.9 L1140.1,671.5 L1140.5,672.1 L1140.9,672.7 L1141.2,673.3 L1141.5,673.9 L1141.7,674.5 L1141.9,675.2 L1142.1,675.8 L1142.2,676.5 L1142.3,677.1 L1142.4,677.8 L1142.4,678.5 L1142.4,679.1Z" fill="url(#gh4)" stroke="#000" stroke-width="2.3" stroke-linejoin="round" stroke-linecap="round"/>
<clipPath id="ch4"><path d="M1142.3,679.8 L1142.2,680.4 L1142.0,681.1 L1141.8,681.7 L1141.6,682.3 L1141.3,682.9 L1141.0,683.5 L1140.7,684.1 L1140.3,684.6 L1139.9,685.2 L1139.5,685.7 L1139.0,686.2 L1138.5,686.7 L1137.9,687.1 L1137.4,687.6 L1136.8,688.0 L1136.2,688.3 L1135.5,688.7 L1134.8,689.0 L1134.2,689.3 L1133.5,689.5 L1132.7,689.8 L1132.0,689.9 L1131.3,690.1 L1130.5,690.2 L1129.7,690.3 L1129.0,690.4 L1128.2,690.4 L1127.4,690.4 L1126.6,690.3 L1125.9,690.2 L1125.1,690.1 L1124.3,690.0 L1123.6,689.8 L1122.8,689.6 L1122.1,689.3 L1121.4,689.1 L1120.7,688.8 L1120.0,688.4 L1119.3,688.0 L1118.7,687.7 L1118.1,687.2 L1117.5,686.8 L1116.9,686.3 L1116.4,685.8 L1115.9,685.3 L1115.4,684.8 L1114.9,684.2 L1114.5,683.6 L1114.2,683.0 L1113.8,682.4 L1113.5,681.8 L1113.2,681.2 L1113.0,680.5 L1112.8,679.9 L1112.7,679.2 L1112.6,678.6 L1112.5,677.9 L1112.5,677.3 L1112.5,676.6 L1112.5,676.0 L1112.6,675.3 L1112.7,674.7 L1112.9,674.0 L1113.1,673.4 L1113.4,672.8 L1113.7,672.2 L1114.0,671.6 L1114.3,671.0 L1114.7,670.5 L1115.2,670.0 L1115.6,669.4 L1116.1,668.9 L1116.6,668.5 L1117.2,668.0 L1117.8,667.6 L1118.4,667.2 L1119.0,666.9 L1119.7,666.6 L1120.3,666.3 L1121.0,666.0 L1121.7,665.7 L1122.5,665.5 L1123.2,665.4 L1124.0,665.2 L1124.7,665.1 L1125.5,665.0 L1126.3,665.0 L1127.0,665.0 L1127.8,665.0 L1128.6,665.1 L1129.4,665.2 L1130.1,665.3 L1130.9,665.5 L1131.6,665.7 L1132.4,665.9 L1133.1,666.2 L1133.8,666.5 L1134.5,666.8 L1135.2,667.2 L1135.8,667.5 L1136.5,668.0 L1137.1,668.4 L1137.6,668.9 L1138.2,669.3 L1138.7,669.8 L1139.2,670.4 L1139.7,670.9 L1140.1,671.5 L1140.5,672.1 L1140.9,672.7 L1141.2,673.3 L1141.5,673.9 L1141.7,674.5 L1141.9,675.2 L1142.1,675.8 L1142.2,676.5 L1142.3,677.1 L1142.4,677.8 L1142.4,678.5 L1142.4,679.1Z"/></clipPath>
<path clip-path="url(#ch4)" d="M1132.3,665.9 L1125.8,714.5" fill="none" stroke="#000" stroke-width="2.3" stroke-linejoin="round" stroke-linecap="round"/>
<path d="M1083.0,632.7 L1082.9,633.3 L1082.7,634.0 L1082.5,634.6 L1082.3,635.2 L1082.0,635.8 L1081.7,636.4 L1081.4,637.0 L1081.0,637.5 L1080.6,638.1 L1080.2,638.6 L1079.7,639.1 L1079.2,639.6 L1078.6,640.0 L1078.1,640.5 L1077.5,640.9 L1076.9,641.2 L1076.2,641.6 L1075.6,641.9 L1074.9,642.2 L1074.2,642.4 L1073.5,642.7 L1072.7,642.9 L1072.0,643.0 L1071.2,643.1 L1070.5,643.2 L1069.7,643.3 L1068.9,643.3 L1068.1,643.3 L1067.4,643.2 L1066.6,643.2 L1065.8,643.0 L1065.1,642.9 L1064.3,642.7 L1063.6,642.5 L1062.8,642.2 L1062.1,642.0 L1061.4,641.7 L1060.7,641.3 L1060.1,641.0 L1059.4,640.6 L1058.8,640.1 L1058.2,639.7 L1057.6,639.2 L1057.1,638.7 L1056.6,638.2 L1056.1,637.7 L1055.7,637.1 L1055.2,636.5 L1054.9,635.9 L1054.5,635.3 L1054.2,634.7 L1054.0,634.1 L1053.7,633.5 L1053.5,632.8 L1053.4,632.2 L1053.3,631.5 L1053.2,630.8 L1053.2,630.2 L1053.2,629.5 L1053.2,628.9 L1053.3,628.2 L1053.5,627.6 L1053.6,626.9 L1053.8,626.3 L1054.1,625.7 L1054.4,625.1 L1054.7,624.5 L1055.1,623.9 L1055.4,623.4 L1055.9,622.9 L1056.3,622.3 L1056.8,621.9 L1057.4,621.4 L1057.9,620.9 L1058.5,620.5 L1059.1,620.1 L1059.7,619.8 L1060.4,619.5 L1061.0,619.2 L1061.7,618.9 L1062.5,618.7 L1063.2,618.4 L1063.9,618.3 L1064.7,618.1 L1065.4,618.0 L1066.2,618.0 L1067.0,617.9 L1067.7,617.9 L1068.5,617.9 L1069.3,618.0 L1070.1,618.1 L1070.8,618.2 L1071.6,618.4 L1072.3,618.6 L1073.1,618.8 L1073.8,619.1 L1074.5,619.4 L1075.2,619.7 L1075.9,620.1 L1076.5,620.5 L1077.2,620.9 L1077.8,621.3 L1078.4,621.8 L1078.9,622.2 L1079.4,622.7 L1079.9,623.3 L1080.4,623.8 L1080.8,624.4 L1081.2,625.0 L1081.6,625.6 L1081.9,626.2 L1082.2,626.8 L1082.4,627.4 L1082.6,628.1 L1082.8,628.7 L1082.9,629.4 L1083.0,630.0 L1083.1,630.7 L1083.1,631.4 L1083.1,632.0Z" fill="url(#gh5)" stroke="#000" stroke-width="2.3" stroke-linejoin="round" stroke-linecap="round"/>
<path d="M1078.4,565.3 L1078.3,566.0 L1078.1,566.6 L1077.9,567.2 L1077.7,567.9 L1077.4,568.5 L1077.1,569.1 L1076.8,569.6 L1076.4,570.2 L1076.0,570.7 L1075.6,571.3 L1075.1,571.8 L1074.6,572.2 L1074.0,572.7 L1073.5,573.1 L1072.9,573.5 L1072.3,573.9 L1071.6,574.2 L1071.0,574.6 L1070.3,574.8 L1069.6,575.1 L1068.9,575.3 L1068.1,575.5 L1067.4,575.7 L1066.6,575.8 L1065.9,575.9 L1065.1,575.9 L1064.3,575.9 L1063.5,575.9 L1062.8,575.9 L1062.0,575.8 L1061.2,575.7 L1060.5,575.5 L1059.7,575.4 L1059.0,575.1 L1058.2,574.9 L1057.5,574.6 L1056.8,574.3 L1056.1,574.0 L1055.5,573.6 L1054.8,573.2 L1054.2,572.8 L1053.6,572.3 L1053.0,571.9 L1052.5,571.4 L1052.0,570.8 L1051.5,570.3 L1051.1,569.8 L1050.6,569.2 L1050.3,568.6 L1049.9,568.0 L1049.6,567.4 L1049.4,566.7 L1049.1,566.1 L1048.9,565.4 L1048.8,564.8 L1048.7,564.1 L1048.6,563.5 L1048.6,562.8 L1048.6,562.2 L1048.6,561.5 L1048.7,560.9 L1048.9,560.2 L1049.0,559.6 L1049.2,559.0 L1049.5,558.3 L1049.8,557.7 L1050.1,557.2 L1050.5,556.6 L1050.8,556.0 L1051.3,555.5 L1051.7,555.0 L1052.2,554.5 L1052.8,554.0 L1053.3,553.6 L1053.9,553.2 L1054.5,552.8 L1055.1,552.4 L1055.8,552.1 L1056.4,551.8 L1057.1,551.5 L1057.9,551.3 L1058.6,551.1 L1059.3,550.9 L1060.1,550.8 L1060.8,550.7 L1061.6,550.6 L1062.4,550.6 L1063.1,550.6 L1063.9,550.6 L1064.7,550.7 L1065.5,550.8 L1066.2,550.9 L1067.0,551.1 L1067.7,551.2 L1068.5,551.5 L1069.2,551.7 L1069.9,552.0 L1070.6,552.4 L1071.3,552.7 L1071.9,553.1 L1072.6,553.5 L1073.2,553.9 L1073.8,554.4 L1074.3,554.9 L1074.8,555.4 L1075.3,555.9 L1075.8,556.5 L1076.2,557.0 L1076.6,557.6 L1077.0,558.2 L1077.3,558.8 L1077.6,559.4 L1077.8,560.1 L1078.0,560.7 L1078.2,561.4 L1078.3,562.0 L1078.4,562.7 L1078.5,563.3 L1078.5,564.0 L1078.5,564.7Z" fill="url(#gh6)" stroke="#000" stroke-width="2.3" stroke-linejoin="round" stroke-linecap="round"/>
<path d="M1131.2,517.2 L1131.1,517.8 L1130.9,518.4 L1130.7,519.1 L1130.5,519.7 L1130.2,520.3 L1129.9,520.9 L1129.6,521.5 L1129.2,522.0 L1128.8,522.6 L1128.4,523.1 L1127.9,523.6 L1127.4,524.1 L1126.8,524.5 L1126.3,525.0 L1125.7,525.4 L1125.1,525.7 L1124.4,526.1 L1123.7,526.4 L1123.1,526.7 L1122.4,526.9 L1121.6,527.1 L1120.9,527.3 L1120.2,527.5 L1119.4,527.6 L1118.6,527.7 L1117.9,527.8 L1117.1,527.8 L1116.3,527.8 L1115.5,527.7 L1114.8,527.6 L1114.0,527.5 L1113.2,527.4 L1112.5,527.2 L1111.7,527.0 L1111.0,526.7 L1110.3,526.5 L1109.6,526.1 L1108.9,525.8 L1108.2,525.4 L1107.6,525.0 L1107.0,524.6 L1106.4,524.2 L1105.8,523.7 L1105.3,523.2 L1104.8,522.7 L1104.3,522.1 L1103.8,521.6 L1103.4,521.0 L1103.1,520.4 L1102.7,519.8 L1102.4,519.2 L1102.1,518.6 L1101.9,517.9 L1101.7,517.3 L1101.6,516.6 L1101.5,516.0 L1101.4,515.3 L1101.4,514.7 L1101.4,514.0 L1101.4,513.3 L1101.5,512.7 L1101.6,512.1 L1101.8,511.4 L1102.0,510.8 L1102.3,510.2 L1102.6,509.6 L1102.9,509.0 L1103.2,508.4 L1103.6,507.9 L1104.1,507.3 L1104.5,506.8 L1105.0,506.3 L1105.5,505.9 L1106.1,505.4 L1106.7,505.0 L1107.3,504.6 L1107.9,504.3 L1108.6,503.9 L1109.2,503.6 L1109.9,503.4 L1110.6,503.1 L1111.4,502.9 L1112.1,502.8 L1112.9,502.6 L1113.6,502.5 L1114.4,502.4 L1115.2,502.4 L1115.9,502.4 L1116.7,502.4 L1117.5,502.5 L1118.3,502.6 L1119.0,502.7 L1119.8,502.9 L1120.5,503.1 L1121.3,503.3 L1122.0,503.6 L1122.7,503.9 L1123.4,504.2 L1124.1,504.6 L1124.7,504.9 L1125.4,505.3 L1126.0,505.8 L1126.5,506.2 L1127.1,506.7 L1127.6,507.2 L1128.1,507.8 L1128.6,508.3 L1129.0,508.9 L1129.4,509.5 L1129.8,510.1 L1130.1,510.7 L1130.4,511.3 L1130.6,511.9 L1130.8,512.6 L1131.0,513.2 L1131.1,513.9 L1131.2,514.5 L1131.3,515.2 L1131.3,515.8 L1131.2,516.5Z" fill="url(#gh7)" stroke="#000" stroke-width="2.3" stroke-linejoin="round" stroke-linecap="round"/>
</g>
<path d="M1369.1,563.1 L1367.6,571.8 L1365.6,580.4 L1363.0,588.9 L1360.0,597.2 L1356.4,605.4 L1352.3,613.4 L1347.7,621.1 L1342.7,628.7 L1337.2,636.0 L1331.2,643.0 L1324.8,649.7 L1317.9,656.1 L1310.7,662.2 L1303.1,667.9 L1295.1,673.3 L1286.8,678.3 L1278.2,683.0 L1269.3,687.2 L1260.1,691.0 L1250.6,694.4 L1241.0,697.4 L1231.1,700.0 L1221.1,702.1 L1211.0,703.7 L1200.7,704.9 L1190.4,705.6 L1180.0,705.9 L1169.6,705.7 L1159.1,705.1 L1148.7,704.0 L1138.4,702.4 L1128.1,700.4 L1118.0,698.0 L1107.9,695.1 L1098.1,691.8 L1088.4,688.1 L1079.0,683.9 L1069.8,679.3 L1060.9,674.4 L1052.3,669.1 L1044.0,663.4 L1036.0,657.4 L1028.4,651.1 L1021.1,644.4 L1014.3,637.4 L1007.9,630.2 L1001.9,622.7 L996.4,615.0 L991.3,607.1 L986.7,599.0 L982.6,590.7 L979.1,582.2 L976.0,573.6 L973.4,565.0 L971.4,556.2 L969.9,547.4 L969.0,538.5 L968.6,529.7 L968.7,520.8 L969.4,512.1 L970.6,503.3 L972.3,494.7 L974.6,486.1 L977.4,477.7 L980.8,469.5 L984.6,461.4 L988.9,453.5 L993.7,445.9 L999.0,438.5 L1004.8,431.3 L1011.0,424.4 L1017.6,417.9 L1024.6,411.6 L1032.1,405.7 L1039.8,400.1 L1048.0,394.9 L1056.5,390.1 L1065.2,385.7 L1074.3,381.6 L1083.6,378.0 L1093.2,374.8 L1102.9,372.1 L1112.8,369.7 L1122.9,367.9 L1133.1,366.4 L1143.4,365.5 L1153.8,365.0 L1164.2,364.9 L1174.7,365.3 L1185.1,366.2 L1195.5,367.5 L1205.8,369.3 L1216.0,371.5 L1226.1,374.2 L1236.0,377.3 L1245.7,380.8 L1255.3,384.8 L1264.6,389.1 L1273.7,393.9 L1282.5,399.0 L1290.9,404.5 L1299.1,410.3 L1306.9,416.5 L1314.3,423.0 L1321.3,429.8 L1328.0,436.9 L1334.2,444.3 L1339.9,451.9 L1345.2,459.7 L1350.0,467.8 L1354.4,476.0 L1358.2,484.4 L1361.5,492.9 L1364.4,501.5 L1366.6,510.2 L1368.4,519.0 L1369.6,527.8 L1370.3,536.7 L1370.4,545.5 L1370.0,554.4Z" fill="none" stroke="#000" stroke-width="2.3" stroke-linejoin="round" stroke-linecap="round"/><path d="M1689.7,255 C1684,240 1688,224 1703,212.9 C1715,205 1730,204.5 1741.5,208.1 C1752,211.5 1762,219 1768.6,228.5 L1748.1,274.9 Z" fill="#000042" stroke="#d6cbf7" stroke-width="2" stroke-linejoin="round"/>
<path d="M1672.9,250.2 C1675,264 1685,278 1700.6,288.7 C1707,293 1714,296.5 1721.5,298.5 L1729,268.6 Z" fill="#000042" stroke="#d6cbf7" stroke-width="2" stroke-linejoin="round"/>
<path d="M1672.9,250.2 L1748.1,274.9" stroke="#d6cbf7" stroke-width="2" fill="none"/>
<path d="M1722,306 L1722.2,298.3 L1745.3,223.5 L1728.8,247.5 Z" fill="#000042" stroke="#d6cbf7" stroke-width="1.8" stroke-linejoin="round"/>
<circle cx="1721.9" cy="306.8" r="4.3" fill="#d6cbf7"/>
<rect x="1724.9" y="236.3" width="11.2" height="11" fill="#d40000"/>
<text x="1666" y="236" font-family="Liberation Sans" font-size="15" fill="#ffff00">x</text>
<text x="1733.5" y="212" font-family="Liberation Sans" font-size="15" fill="#ffff00">y</text>
<text x="1713" y="294.5" font-family="Liberation Sans" font-size="15" fill="#ffff00">z</text>
<g>
<circle cx="1797.2" cy="446.9" r="38.6" fill="rgba(255,255,255,.07)" stroke="rgba(255,255,255,.33)" stroke-width="5.8"/>
<path d="M1772,452 L1800,416 L1810,420 L1776,462Z M1790,470 L1822,432 L1826,440 L1800,474Z" fill="rgba(255,255,255,.06)"/>
<circle cx="1789.4" cy="466.8" r="7.6" fill="rgba(255,255,255,.33)"/>
<rect x="1763.3" y="499.8" width="68.2" height="68" fill="rgba(255,255,255,.07)" stroke="rgba(255,255,255,.33)" stroke-width="6.4"/>
<path d="M1768,545 L1806,504 L1822,504 L1772,560Z" fill="rgba(255,255,255,.05)"/>
<rect x="1771.8" y="548.4" width="12" height="11.8" fill="rgba(255,255,255,.33)"/>
<rect x="1744.7" y="583.2" width="105.8" height="41.8" fill="rgba(255,255,255,.07)" stroke="rgba(255,255,255,.33)" stroke-width="6.4"/>
<path d="M1753.1,605.4V617.1H1838.6Z" fill="rgba(255,255,255,.3)"/>
</g>
<text x="1747.5" y="912.5" font-family="Liberation Sans" font-size="16.5" fill="#fff" letter-spacing="-0.3">1,94</text>
<path d="M1793.3,896.3L1818.5,905.2L1828.9,884.4M1818.5,905.2V917" fill="none" stroke="#fff" stroke-width="1.3"/>
<text x="1790" y="896" font-family="Liberation Sans" font-size="13" fill="#fff">x</text>
<text x="1827" y="885" font-family="Liberation Sans" font-size="13" fill="#fff">y</text>
<text x="1815.5" y="922" font-family="Liberation Sans" font-size="13" fill="#fff">z</text>
<path d="M1146.7,568.3L1193.3,584.2L1176.7,622.5L1130,606.7Z" stroke="#fff" stroke-width="1.3" fill="none" stroke-opacity=".95"/>
<path d="M1154.2,570.8L1151.7,576.7L1144.2,574.2" stroke="#fff" stroke-width="1.3" fill="none" stroke-opacity=".95"/>
<path d="M1135.8,571.3L1146.7,575M1156.7,565L1154.2,570.8M1129.2,593.3L1144.2,598.3L1143.3,607.5" stroke="#fff" stroke-width="1.3" fill="none" stroke-opacity=".95"/>
<path d="M1139.2,616.7L1186.7,634.2L1170,671.7L1123.3,653.3Z" stroke="#fff" stroke-width="1.3" fill="none" stroke-opacity=".95"/>
<path d="M1120,579.2L1161.7,595.8L1176.7,558.3M1161.7,595.8L1159.2,615" stroke="#fff" stroke-width="1.3" fill="none" stroke-opacity=".95"/>
<path d="M1163.7,595L1178,560" stroke="#fff" stroke-width="1" fill="none"/>
<circle cx="1161.7" cy="595.8" r="2.6" fill="#fff"/>
<text x="1116.5" y="579.5" font-family="Liberation Sans" font-size="11.5" fill="#fff">x</text>
<text x="1177.5" y="557" font-family="Liberation Sans" font-size="11.5" fill="#fff">y</text>
<text x="1158.5" y="620.5" font-family="Liberation Sans" font-size="11.5" fill="#fff">z</text>
<path d="M469.2,269.7L516.7,285.3L500,324.7L453,309.2Z" stroke="#f4f4f4" stroke-width="1.3" fill="none"/></svg><svg width="0" height="0" style="left:0;top:0"><defs><pattern id="dots" width="3.25" height="3.25" patternUnits="userSpaceOnUse"><rect width="3.25" height="3.25" fill="#3a3a70"/><circle cx="1.6" cy="1.6" r="1.15" fill="#d4d4e6"/></pattern><pattern id="ydots" width="3.25" height="3.25" patternUnits="userSpaceOnUse"><rect width="3.25" height="3.25" fill="#8a7a50"/><circle cx="1.6" cy="1.6" r="1.25" fill="#ffe868"/></pattern><pattern id="holes" width="3.25" height="3.25" patternUnits="userSpaceOnUse"><path d="M0,0H3.25V3.25H0Z M1.62,0.27A1.35,1.35 0 1 0 1.63,0.27Z" fill="#2c2c64" fill-rule="evenodd"/></pattern><radialGradient id="ball" cx=".4" cy=".35" r=".7"><stop offset="0" stop-color="#c8c8c8"/><stop offset=".6" stop-color="#8a8a8a"/><stop offset="1" stop-color="#555"/></radialGradient></defs></svg>
<div style="left:69.8px;top:155px;width:2.3px;height:266px;background:#eeeeff"></div>
<div style="left:71px;top:187.8px;width:21px;height:2.3px;background:#eeeeff"></div>
<div style="left:71px;top:233.8px;width:21px;height:2.3px;background:#eeeeff"></div>
<div style="left:71px;top:279.8px;width:21px;height:2.3px;background:#eeeeff"></div>
<div style="left:78px;top:326.3px;width:14px;height:2.3px;background:#eeeeff"></div>
<div style="left:78px;top:372.8px;width:14px;height:2.3px;background:#eeeeff"></div>
<div style="left:78px;top:419.3px;width:14px;height:2.3px;background:#eeeeff"></div>
<div style="left:102.3px;top:436px;width:2.3px;height:263px;background:#eeeeff"></div>
<div style="left:111px;top:465.8px;width:14px;height:2.3px;background:#eeeeff"></div>
<div style="left:111px;top:511.8px;width:14px;height:2.3px;background:#eeeeff"></div>
<div style="left:111px;top:558.3px;width:14px;height:2.3px;background:#eeeeff"></div>
<div style="left:111px;top:604.8px;width:14px;height:2.3px;background:#eeeeff"></div>
<div style="left:111px;top:650.8px;width:14px;height:2.3px;background:#eeeeff"></div>
<div style="left:111px;top:697.3px;width:14px;height:2.3px;background:#eeeeff"></div>
<svg style="left:59.5px;top:317px" width="21" height="21" viewBox="0 0 21 21" ><circle cx="10.5" cy="10.5" r="10" fill="url(#ball)"/><rect x="4" y="9" width="13" height="3.2" fill="#000"/><rect x="8.9" y="4" width="3.2" height="13" fill="#000"/></svg>
<svg style="left:59.5px;top:363.5px" width="21" height="21" viewBox="0 0 21 21" ><circle cx="10.5" cy="10.5" r="10" fill="url(#ball)"/><rect x="4" y="9" width="13" height="3.2" fill="#000"/><rect x="8.9" y="4" width="3.2" height="13" fill="#000"/></svg>
<svg style="left:59.5px;top:410px" width="21" height="21" viewBox="0 0 21 21" ><circle cx="10.5" cy="10.5" r="10" fill="url(#ball)"/><rect x="4" y="9" width="13" height="3.2" fill="#000"/></svg>
<svg style="left:92.5px;top:456.5px" width="21" height="21" viewBox="0 0 21 21" ><circle cx="10.5" cy="10.5" r="10" fill="url(#ball)"/><rect x="4" y="9" width="13" height="3.2" fill="#000"/><rect x="8.9" y="4" width="3.2" height="13" fill="#000"/></svg>
<svg style="left:92.5px;top:502.5px" width="21" height="21" viewBox="0 0 21 21" ><circle cx="10.5" cy="10.5" r="10" fill="url(#ball)"/><rect x="4" y="9" width="13" height="3.2" fill="#000"/><rect x="8.9" y="4" width="3.2" height="13" fill="#000"/></svg>
<svg style="left:92.5px;top:549px" width="21" height="21" viewBox="0 0 21 21" ><circle cx="10.5" cy="10.5" r="10" fill="url(#ball)"/><rect x="4" y="9" width="13" height="3.2" fill="#000"/><rect x="8.9" y="4" width="3.2" height="13" fill="#000"/></svg>
<svg style="left:92.5px;top:595.5px" width="21" height="21" viewBox="0 0 21 21" ><circle cx="10.5" cy="10.5" r="10" fill="url(#ball)"/><rect x="4" y="9" width="13" height="3.2" fill="#000"/><rect x="8.9" y="4" width="3.2" height="13" fill="#000"/></svg>
<svg style="left:92.5px;top:641.5px" width="21" height="21" viewBox="0 0 21 21" ><circle cx="10.5" cy="10.5" r="10" fill="url(#ball)"/><rect x="4" y="9" width="13" height="3.2" fill="#000"/><rect x="8.9" y="4" width="3.2" height="13" fill="#000"/></svg>
<svg style="left:92.5px;top:688px" width="21" height="21" viewBox="0 0 21 21" ><circle cx="10.5" cy="10.5" r="10" fill="url(#ball)"/><rect x="4" y="9" width="13" height="3.2" fill="#000"/><rect x="8.9" y="4" width="3.2" height="13" fill="#000"/></svg>
<svg style="left:56px;top:120px" width="42" height="42" viewBox="0 0 42 42" ><path d="M15,2H33L40,9V30H15Z" fill="#fff" stroke="#18a0b8" stroke-width="1.2"/><path d="M33,2V9H40Z" fill="#38d8f0" stroke="#0a0a50" stroke-width=".8"/><g transform="translate(17,26.5) scale(1.2)"><path d="M0,-9.5L2,-9.5L2.6,-6.6L5,-8.6L6.6,-7L4.8,-4.6L7.6,-4L7.6,-1.6L4.8,-1L4.8,1L7.6,1.6L7.6,4L4.8,4.6L6.6,7L5,8.6L2.6,6.6L2,9.5L-2,9.5L-2.6,6.6L-5,8.6L-6.6,7L-4.8,4.6L-7.6,4L-7.6,1.6L-4.8,1L-4.8,-1L-7.6,-1.6L-7.6,-4L-4.8,-4.6L-6.6,-7L-5,-8.6L-2.6,-6.6L-2,-9.5Z" fill="#55556a" transform="translate(5.5,0.5)"/></g><g transform="translate(13,25.5) scale(1.2)"><path d="M-1.6,-10.5H1.6L2.3,-7L5.2,-9.2L7.5,-7L5.3,-4.2L8.8,-3.4V-0.4L5.6,0V1L8.8,1.6V4.6L5.3,5.2L7.5,8L5.2,10.2L2.3,8L1.6,11.5H-1.6L-2.3,8L-5.2,10.2L-7.5,8L-5.3,5.2L-8.8,4.6V1.6L-5.6,1V0L-8.8,-0.4V-3.4L-5.3,-4.2L-7.5,-7L-5.2,-9.2L-2.3,-7Z" fill="#ffe87a" stroke="#6a6020" stroke-width=".5"/><rect x="-2.6" y="-2.6" width="5.2" height="6" fill="#30306a"/><rect x="-1.2" y="-1.6" width="2.4" height="3.6" fill="#e8e800"/></g></svg>
<div style="left:102.5px;top:129.8px;font-size:22.3px;letter-spacing:-0.5px;color:#f4f4ff;-webkit-text-stroke:0.45px #313163;white-space:nowrap">catapulte</div>
<svg style="left:91px;top:167.5px" width="39" height="39" viewBox="0 0 39 39" ><rect width="39" height="39" fill="#dcdcec"/><path d="M5.5,28.5L18,18H35L22,28.5Z" fill="#ffe868"/><path d="M1,31.2H22L37.5,18.2" fill="none" stroke="#35b5c5" stroke-width="2.2"/><path d="M5,32.5V35M9,32.5V35M13,32.5V35M17,32.5V35M21,32.5V35" stroke="#3a3a8a" stroke-width="1.6"/><rect width="39" height="39" fill="url(#holes)"/></svg>
<div class="lbl" style="left:133px;top:171px;width:72.5px;font-size:19.5px;letter-spacing:0.29px;padding-left:3.5px;line-height:37px;-webkit-text-stroke:0.45px #313166">Plan xy</div>
<svg style="left:91px;top:213.5px" width="39" height="39" viewBox="0 0 39 39" ><rect width="39" height="39" fill="#dcdcec"/><path d="M5.5,28.5L18,18H35L22,28.5Z" fill="#ffe868"/><path d="M1,31.2H22L37.5,18.2" fill="none" stroke="#35b5c5" stroke-width="2.2"/><path d="M5,32.5V35M9,32.5V35M13,32.5V35M17,32.5V35M21,32.5V35" stroke="#3a3a8a" stroke-width="1.6"/><rect width="39" height="39" fill="url(#holes)"/></svg>
<div class="lbl" style="left:133px;top:217px;width:72.5px;font-size:19.5px;letter-spacing:0.29px;padding-left:3.5px;line-height:37px;-webkit-text-stroke:0.45px #313166">Plan yz</div>
<svg style="left:91px;top:259.5px" width="39" height="39" viewBox="0 0 39 39" ><rect width="39" height="39" fill="#dcdcec"/><path d="M5.5,28.5L18,18H35L22,28.5Z" fill="#ffe868"/><path d="M1,31.2H22L37.5,18.2" fill="none" stroke="#35b5c5" stroke-width="2.2"/><path d="M5,32.5V35M9,32.5V35M13,32.5V35M17,32.5V35M21,32.5V35" stroke="#3a3a8a" stroke-width="1.6"/><rect width="39" height="39" fill="url(#holes)"/></svg>
<div class="lbl" style="left:133px;top:263px;width:72.5px;font-size:19.5px;letter-spacing:0.29px;padding-left:3.5px;line-height:37px;-webkit-text-stroke:0.45px #313166">Plan zx</div>
<svg style="left:92px;top:309px" width="38" height="38" viewBox="0 0 38 38" ><path d="M13.5,4V27L1.5,36M13.5,27H34" fill="none" stroke="#1a1a50" stroke-width="3"/><path d="M13.5,4V27L1.5,36M13.5,27H34" fill="none" stroke="#ffe868" stroke-width="1.5"/><path d="M13.5,1L16.5,7H10.5Z" fill="#1a1a50"/><path d="M37,27L31,24V30Z" fill="#1a1a50"/><rect x="0" y="33.5" width="4" height="4" fill="#ffe868" stroke="#1a1a50" stroke-width=".6"/></svg>
<div class="lbl" style="left:133px;top:311px;width:156.5px;font-size:19.5px;letter-spacing:0.37px;padding-left:3.5px;line-height:37px;-webkit-text-stroke:0.45px #313166">Systèmes d'axes</div>
<svg style="left:92px;top:355px" width="40" height="40" viewBox="0 0 40 40" ><g transform="translate(24,20) scale(1.35)"><path d="M-1.8,-11H1.8L2.5,-7.6L5.6,-9.6L8,-7.2L5.8,-4.3L9.4,-3.5V0L6,0.4V1.4L9.4,2V5.4L5.8,6L8,9L5.6,11.2L2.5,9L1.8,12.4H-1.8L-2.5,9L-5.6,11.2L-8,9L-5.8,6L-9.4,5.4V2L-6,1.4V0.4L-9.4,0V-3.5L-5.8,-4.3L-8,-7.2L-5.6,-9.6L-2.5,-7.6Z" fill="#0a0a30"/></g><g transform="translate(17,19) scale(1.45)"><path d="M-1.8,-11H1.8L2.5,-7.6L5.6,-9.6L8,-7.2L5.8,-4.3L9.4,-3.5V0L6,0.4V1.4L9.4,2V5.4L5.8,6L8,9L5.6,11.2L2.5,9L1.8,12.4H-1.8L-2.5,9L-5.6,11.2L-8,9L-5.8,6L-9.4,5.4V2L-6,1.4V0.4L-9.4,0V-3.5L-5.8,-4.3L-8,-7.2L-5.6,-9.6L-2.5,-7.6Z" fill="#28d8e8" stroke="#0a0a30" stroke-width=".6"/><path d="M-3,-7V7M3,-7V7M-7,-2H7M-7,3.5H7" stroke="#e8e868" stroke-width="1.3"/><rect x="-2.6" y="-2.6" width="5.2" height="6" fill="#20205a"/><rect x="-1.2" y="-1.6" width="2.4" height="3.6" fill="#e8e800"/></g></svg>
<div class="lbl" style="left:133px;top:357.5px;width:146.5px;font-size:19.5px;letter-spacing:0.7px;padding-left:3.5px;line-height:37px;-webkit-text-stroke:0.45px #313166">Corps principal</div>
<svg style="left:93px;top:402px" width="40" height="40" viewBox="0 0 40 40" ><path d="M3,8C8,2 20,1 25,6C28,12 24,20 18,25L6,24C3,20 1,13 3,8Z" fill="#ffe87a" stroke="#7a6a20" stroke-width=".7"/><path d="M9,9C11,5 14,12 12,15M15,8C19,6 20,13 17,16" fill="none" stroke="#c01818" stroke-width="1.5"/><path d="M29,3C33,6 33,11 29,14" fill="none" stroke="#28b8e8" stroke-width="1.6"/><path d="M3,29C9,24 15,24 20,28C25,32 31,30 36,25L34,33L12,38Z" fill="#ffe87a" stroke="#1a8aa0" stroke-width="1.2"/><path d="M3,27C9,22 15,22 20,26C25,30 31,28 36,23" fill="none" stroke="#28b8e8" stroke-width="1.6"/></svg>
<div class="lbl" style="left:133px;top:404px;width:178.5px;font-size:19.5px;letter-spacing:0.8px;padding-left:3.5px;line-height:37px;-webkit-text-stroke:0.45px #313166">Set géométrique.1</div>
<svg style="left:125px;top:457.5px" width="40" height="20" viewBox="0 0 40 20" ><path d="M1,16.5L12,4.5H38L27,16.5Z" fill="#ffe87a"/><path d="M0.5,17.5H27L38.5,5" fill="none" stroke="#28a8b8" stroke-width="1.4"/></svg>
<div class="lbl" style="left:167px;top:450.5px;width:60.5px;font-size:19.5px;letter-spacing:-0.2px;padding-left:3.5px;line-height:37px;-webkit-text-stroke:0.45px #313166">Plan.2</div>
<svg style="left:125px;top:492.5px" width="39" height="39" viewBox="0 0 39 39" ><rect width="39" height="39" fill="#dcdcec"/><rect x="29.2" y="0" width="9.8" height="16.3" fill="#18d828"/><path d="M24,17H39V39H17V34L22,30L27,26L22.5,21Z" fill="#f06a10"/><path d="M29.5,21L34,25.5L30,29.5L36,35" fill="none" stroke="#dcdcec" stroke-width="3.2"/><path d="M10,19.5L17,21L21,17L24.5,10L28,5.5" fill="none" stroke="#f0e060" stroke-width="3"/><path d="M7,24Q10,31 17,29.5Q21,28 23,23" fill="none" stroke="#2aa0b0" stroke-width="2.6"/><path d="M3,37.5H16" stroke="#2aa0b0" stroke-width="3"/><path d="M14,15L20,24" stroke="#28286a" stroke-width="3"/><rect width="39" height="39" fill="url(#holes)"/></svg>
<div class="lbl" style="left:167px;top:496.5px;width:109.5px;font-size:19.5px;letter-spacing:-0.32px;padding-left:3.5px;line-height:37px;-webkit-text-stroke:0.45px #313166">Esquisse.12</div>
<svg style="left:125px;top:550px" width="40" height="20" viewBox="0 0 40 20" ><path d="M1,16.5L12,4.5H38L27,16.5Z" fill="#ffe87a"/><path d="M0.5,17.5H27L38.5,5" fill="none" stroke="#28a8b8" stroke-width="1.4"/></svg>
<div class="lbl" style="left:167px;top:543px;width:60.5px;font-size:19.5px;letter-spacing:-0.2px;padding-left:3.5px;line-height:37px;-webkit-text-stroke:0.45px #313166">Plan.3</div>
<svg style="left:125px;top:585.5px" width="39" height="39" viewBox="0 0 39 39" ><rect width="39" height="39" fill="#dcdcec"/><rect x="29.2" y="0" width="9.8" height="16.3" fill="#18d828"/><path d="M24,17H39V39H17V34L22,30L27,26L22.5,21Z" fill="#f06a10"/><path d="M29.5,21L34,25.5L30,29.5L36,35" fill="none" stroke="#dcdcec" stroke-width="3.2"/><path d="M10,19.5L17,21L21,17L24.5,10L28,5.5" fill="none" stroke="#f0e060" stroke-width="3"/><path d="M7,24Q10,31 17,29.5Q21,28 23,23" fill="none" stroke="#2aa0b0" stroke-width="2.6"/><path d="M3,37.5H16" stroke="#2aa0b0" stroke-width="3"/><path d="M14,15L20,24" stroke="#28286a" stroke-width="3"/><rect width="39" height="39" fill="url(#holes)"/></svg>
<div class="lbl" style="left:167px;top:589.5px;width:109.5px;font-size:19.5px;letter-spacing:-0.32px;padding-left:3.5px;line-height:37px;-webkit-text-stroke:0.45px #313166">Esquisse.13</div>
<svg style="left:125px;top:642.5px" width="40" height="20" viewBox="0 0 40 20" ><path d="M1,16.5L12,4.5H38L27,16.5Z" fill="#ffe87a"/><path d="M0.5,17.5H27L38.5,5" fill="none" stroke="#28a8b8" stroke-width="1.4"/></svg>
<div class="lbl" style="left:167px;top:635.5px;width:61px;font-size:19.5px;letter-spacing:0.2px;padding-left:3.5px;line-height:37px;-webkit-text-stroke:0.45px #313166">Plan.4</div>
<svg style="left:125px;top:678px" width="39" height="39" viewBox="0 0 39 39" ><rect width="39" height="39" fill="#dcdcec"/><rect x="29.2" y="0" width="9.8" height="16.3" fill="#18d828"/><path d="M24,17H39V39H17V34L22,30L27,26L22.5,21Z" fill="#f06a10"/><path d="M29.5,21L34,25.5L30,29.5L36,35" fill="none" stroke="#dcdcec" stroke-width="3.2"/><path d="M10,19.5L17,21L21,17L24.5,10L28,5.5" fill="none" stroke="#f0e060" stroke-width="3"/><path d="M7,24Q10,31 17,29.5Q21,28 23,23" fill="none" stroke="#2aa0b0" stroke-width="2.6"/><path d="M3,37.5H16" stroke="#2aa0b0" stroke-width="3"/><path d="M14,15L20,24" stroke="#28286a" stroke-width="3"/><rect width="39" height="39" fill="url(#holes)"/></svg>
<div class="lbl" style="left:167px;top:682px;width:109.5px;font-size:19.5px;letter-spacing:-0.12px;padding-left:3.5px;line-height:37px;-webkit-text-stroke:0.45px #313166">Esquisse.14</div><svg style="left:21.2px;top:11px" width="17.5" height="16.4" viewBox="0 0 20 18" preserveAspectRatio="none"><defs><radialGradient id="lf1" cx=".62" cy=".47" r=".42"><stop offset="0" stop-color="#fff6c8"/><stop offset=".3" stop-color="#ffc040"/><stop offset=".65" stop-color="#e06a18"/><stop offset="1" stop-color="#401808" stop-opacity="0"/></radialGradient><linearGradient id="ls1" x1="0" y1=".6" x2="1" y2=".4"><stop offset="0" stop-color="#0a1a70"/><stop offset=".45" stop-color="#1a8ce8"/><stop offset=".7" stop-color="#3ab8ff"/><stop offset="1" stop-color="#1a60c0"/></linearGradient></defs><rect width="20" height="18" fill="#020206"/><rect width="20" height="18" fill="url(#lf1)"/><path d="M0,0.5 L1.5,0 C7,4 11,9.5 13.5,18 L8,18 C7,11 4,5 0,2.5Z" fill="url(#ls1)"/><path d="M6,6.5C9,9.5 11,13 12.3,18L11,18C10,13.5 8.5,10 6,6.5Z" fill="#9fe0ff" opacity=".8"/><ellipse cx="11.3" cy="9.3" rx="1.6" ry="2" fill="#fffbe8" opacity=".9"/></svg>
<div class="tt" style="left:46.6px;top:10.7px;">CATIA V5 - [catapulte.CATPart]</div>
<svg style="left:1755px;top:8px" width="140" height="24" viewBox="0 0 140 24" ><path d="M6,11.5H17" stroke="#000" stroke-width="1.2"/><rect x="63.5" y="5.5" width="10" height="10" fill="none" stroke="#000" stroke-width="1.2"/><path d="M120,6L131,17M131,6L120,17" stroke="#000" stroke-width="1.2"/></svg>
<svg style="left:888px;top:0px" width="145" height="20" viewBox="0 0 145 20" ><path d="M0,0H145V14Q145,19.5 139,19.5H6Q0,19.5 0,14Z" fill="#111114"/><path d="M2,15Q3,18.5 7,18.5H138Q142,18.5 143,15" fill="none" stroke="#3a3a44" stroke-width="1"/><rect x="13.8" y="2.8" width="3.2" height="3.2" fill="#f2f2f2"/><rect x="13.8" y="10.4" width="3.2" height="3.2" fill="#f2f2f2"/><rect x="21.1" y="2.8" width="3.2" height="3.2" fill="#f2f2f2"/><rect x="21.1" y="10.4" width="3.2" height="3.2" fill="#f2f2f2"/><rect x="28.4" y="2.8" width="3.2" height="3.2" fill="#f2f2f2"/><rect x="28.4" y="10.4" width="3.2" height="3.2" fill="#f2f2f2"/><rect x="35.7" y="2.8" width="3.2" height="3.2" fill="#f2f2f2"/><rect x="35.7" y="10.4" width="3.2" height="3.2" fill="#f2f2f2"/><rect x="43.0" y="2.8" width="3.2" height="3.2" fill="#f2f2f2"/><rect x="43.0" y="10.4" width="3.2" height="3.2" fill="#f2f2f2"/><rect x="50.3" y="2.8" width="3.2" height="3.2" fill="#f2f2f2"/><rect x="50.3" y="10.4" width="3.2" height="3.2" fill="#f2f2f2"/><rect x="90.9" y="2.8" width="3.2" height="3.2" fill="#f2f2f2"/><rect x="90.9" y="10.4" width="3.2" height="3.2" fill="#f2f2f2"/><rect x="98.2" y="2.8" width="3.2" height="3.2" fill="#f2f2f2"/><rect x="98.2" y="10.4" width="3.2" height="3.2" fill="#f2f2f2"/><rect x="105.5" y="2.8" width="3.2" height="3.2" fill="#f2f2f2"/><rect x="105.5" y="10.4" width="3.2" height="3.2" fill="#f2f2f2"/><rect x="112.8" y="2.8" width="3.2" height="3.2" fill="#f2f2f2"/><rect x="112.8" y="10.4" width="3.2" height="3.2" fill="#f2f2f2"/><rect x="120.1" y="2.8" width="3.2" height="3.2" fill="#f2f2f2"/><rect x="120.1" y="10.4" width="3.2" height="3.2" fill="#f2f2f2"/><rect x="127.4" y="2.8" width="3.2" height="3.2" fill="#f2f2f2"/><rect x="127.4" y="10.4" width="3.2" height="3.2" fill="#f2f2f2"/><path d="M70,2.5H75.5V7.5H79.5L72.7,13.5L66,7.5H70Z" fill="#f0f0f0"/></svg>
<div style="left:37px;top:39px;width:84px;height:24px;background:linear-gradient(90deg,#fbdcb2,#fee6bf 30%,#ffedc8 70%,#ffe9c2)"></div>
<div style="left:15px;top:40.4px;width:21px;height:21px;background:#fff"></div><svg style="left:16.2px;top:42px" width="18.6" height="18" viewBox="0 0 20 18" preserveAspectRatio="none"><defs><radialGradient id="lf2" cx=".62" cy=".47" r=".42"><stop offset="0" stop-color="#fff6c8"/><stop offset=".3" stop-color="#ffc040"/><stop offset=".65" stop-color="#e06a18"/><stop offset="1" stop-color="#401808" stop-opacity="0"/></radialGradient><linearGradient id="ls2" x1="0" y1=".6" x2="1" y2=".4"><stop offset="0" stop-color="#0a1a70"/><stop offset=".45" stop-color="#1a8ce8"/><stop offset=".7" stop-color="#3ab8ff"/><stop offset="1" stop-color="#1a60c0"/></linearGradient></defs><rect width="20" height="18" fill="#020206"/><rect width="20" height="18" fill="url(#lf2)"/><path d="M0,0.5 L1.5,0 C7,4 11,9.5 13.5,18 L8,18 C7,11 4,5 0,2.5Z" fill="url(#ls2)"/><path d="M6,6.5C9,9.5 11,13 12.3,18L11,18C10,13.5 8.5,10 6,6.5Z" fill="#9fe0ff" opacity=".8"/><ellipse cx="11.3" cy="9.3" rx="1.6" ry="2" fill="#fffbe8" opacity=".9"/></svg>
<div class="mi" style="left:39px;top:42px;">Démarrer</div>
<div class="mi" style="left:124px;top:42px;"><u>F</u>ichier</div>
<div class="mi" style="left:190px;top:42px;"><u>E</u>dition</div>
<div class="mi" style="left:258.5px;top:42px;letter-spacing:0.45px"><u>A</u>ffichage</div>
<div class="mi" style="left:344px;top:42px;"><u>I</u>nsertion</div>
<div class="mi" style="left:425px;top:42px;"><u>O</u>utils</div>
<div class="mi" style="left:486px;top:42px;"><u>F</u>enêtre</div>
<div class="mi" style="left:558px;top:42px;"><u>A</u>ide</div>
<div style="left:1837.5px;top:41px;width:71.5px;height:22px;background:#fff"></div>
<div style="left:1860px;top:41px;width:2px;height:22px;background:#e1e1ee"></div>
<div style="left:1883.5px;top:41px;width:2px;height:22px;background:#e1e1ee"></div>
<svg style="left:1838px;top:41px" width="70" height="22" viewBox="0 0 70 22" ><path d="M6,13.5H13" stroke="#5d5d72" stroke-width="2"/><path d="M32.5,6.2H38.5V11M30,8.8H36V14H30Z" fill="none" stroke="#5d5d72" stroke-width="1.5"/><path d="M55.5,6.5L63,13.5M63,6.5L55.5,13.5" stroke="#5d5d72" stroke-width="2.2"/></svg>
<div class="vsep" style="left:25px;top:69px;"></div>
<div class="combo" style="left:38px;top:72px;width:86.5px;height:31px;">Automat</div>
<div class="combo" style="left:128px;top:72px;width:86.5px;height:31px;">Auto</div>
<div class="combo" style="left:218px;top:72px;width:86.5px;height:31px;">Auto</div>
<div class="combo" style="left:308px;top:72px;width:86.5px;height:31px;">Auto</div>
<div class="combo" style="left:398px;top:72px;width:59px;height:31px;">Autc</div>
<div class="combo dis" style="left:461px;top:72px;width:57.5px;height:31px;">Autc</div>
<div class="combo" style="left:521.5px;top:72px;width:87px;height:31px;font-size:16px;line-height:26px;">Aucun</div>
<div class="vsep" style="left:676px;top:69px;"></div>
<div class="vsep" style="left:940px;top:69px;"></div>
<div class="vsep" style="left:992px;top:69px;"></div>
<div class="vsep" style="left:1639px;top:69px;"></div>
<div class="line" style="left:774px;top:70px;width:1px;height:29px;"></div>
<div class="line" style="left:866px;top:70px;width:1px;height:29px;"></div>
<div class="sep" style="left:15px;top:116px;"></div>
<div class="sep" style="left:15px;top:220px;"></div>
<div class="sep" style="left:15px;top:358px;"></div>
<div class="sep" style="left:15px;top:517px;"></div>
<div class="sep" style="left:15px;top:686px;"></div>
<div class="sep" style="left:15px;top:735px;"></div>
<div class="sep" style="left:15px;top:786px;"></div>
<div class="line" style="left:15px;top:399px;width:30px;height:1px;"></div>
<div class="line" style="left:15px;top:465px;width:30px;height:1px;"></div>
<div class="sep" style="left:1869px;top:118px;"></div>
<div class="sep" style="left:1869px;top:169px;"></div>
<div class="sep" style="left:1869px;top:218px;"></div>
<div class="sep" style="left:1869px;top:267px;"></div>
<div class="sep" style="left:1869px;top:563px;"></div>
<div class="sep" style="left:1869px;top:805px;"></div>
<svg style="left:31px;top:921px" width="12" height="14" viewBox="0 0 12 14" ><path d="M1,1L6,6L11,1M1,7L6,12L11,7" fill="none" stroke="#b4b4c8" stroke-width="1.3"/></svg>
<div class="vsep" style="left:19px;top:948px;"></div>
<div class="vsep" style="left:317px;top:948px;"></div>
<div class="vsep" style="left:549px;top:948px;"></div>
<div class="vsep" style="left:906px;top:948px;"></div>
<div class="vsep" style="left:1425px;top:948px;"></div>
<div class="vsep" style="left:1478px;top:948px;"></div>
<div class="vsep" style="left:958px;top:948px;"></div>
<div class="combo" style="left:1203px;top:952px;width:210px;height:31px;">Corps principal</div>
<div style="left:14px;top:997.2px;font-size:14.5px;white-space:nowrap;letter-spacing:0.17px;color:#111">Sélectionnez un objet ou une commande</div>
<div style="left:1449px;top:991px;width:375px;height:25px;background:#fff;border:1px solid #8c8c98;box-shadow:inset 1px 1px 0 #d8d8e4"></div>
<div style="left:1825px;top:991px;width:41px;height:26px;background:#d5d5ea;border:1px solid #f4f4fa;border-right-color:#9c9cb4;border-bottom-color:#9c9cb4"></div>
<div style="left:1868px;top:991px;width:40px;height:26px;background:#d5d5ea;border:1px solid #f4f4fa;border-right-color:#9c9cb4;border-bottom-color:#9c9cb4"></div>
<svg style="left:1836px;top:998px" width="20" height="14" viewBox="0 0 20 14" ><rect x="1.5" y="1.5" width="10" height="8" fill="#c9c9d8" stroke="#9a9aac" stroke-width="1.5"/><rect x="13" y="9" width="3" height="2" fill="#8f8fa2"/></svg>
<svg style="left:1879px;top:996px" width="20" height="18" viewBox="0 0 20 18" ><path d="M2,2H17V12H9L6,15.5V12H2Z" fill="#dcdce8" stroke="#a0a0b2" stroke-width="1.3"/><text x="8" y="10.5" font-size="9" font-family="Liberation Serif" fill="#8a8a9c" font-weight="bold">i</text></svg>
<div style="left:60px;top:1031px;width:430px;height:49px;background:#f3f3f3"></div>
<svg style="left:19px;top:1045px" width="22" height="22" viewBox="0 0 22 22" ><path d="M0,3.2L9,2V10H0ZM10.3,1.8L21,0.3V10H10.3ZM0,11.3H9V19.4L0,18.2ZM10.3,11.3H21V21L10.3,19.6Z" fill="#fff"/></svg>
<svg style="left:75px;top:1044px" width="24" height="24" viewBox="0 0 24 24" ><circle cx="13.5" cy="9" r="6.3" fill="none" stroke="#2b2b2b" stroke-width="1.6"/><path d="M9,13.8L2,21" stroke="#2b2b2b" stroke-width="1.6"/></svg>
<div style="left:110px;top:1045px;font-size:18px;color:#3c3c3c;white-space:nowrap;letter-spacing:0.17px">Taper ici pour rechercher</div>
<svg style="left:508px;top:1043px" width="24" height="24" viewBox="0 0 24 24" ><circle cx="12" cy="12" r="8.3" fill="none" stroke="#fff" stroke-width="2.4"/></svg>
<svg style="left:568px;top:1044px" width="24" height="22" viewBox="0 0 24 22" ><path d="M3,4.5H1.5V17.5H3M14,4.5H15.5V17.5H14" fill="none" stroke="#fff" stroke-width="1.3"/><rect x="3.5" y="5.5" width="10" height="11" fill="none" stroke="#fff" stroke-width="1.5"/><rect x="18" y="4" width="3" height="3" fill="#fff"/><path d="M19.5,9V18" stroke="#fff" stroke-width="1.5"/></svg>
<svg style="left:628px;top:1039px" width="32" height="32" viewBox="0 0 32 32" ><defs><linearGradient id="eg1" x1="0" y1="0" x2="1" y2="1"><stop offset="0" stop-color="#35c1f1"/><stop offset="1" stop-color="#0b5cbd"/></linearGradient><linearGradient id="eg2" x1="0" y1="0" x2="1" y2="0"><stop offset="0" stop-color="#2bb8e6"/><stop offset="1" stop-color="#5ed37a"/></linearGradient></defs><circle cx="16" cy="16" r="15" fill="url(#eg1)"/><path d="M2,13C4,4 12,1 18,1C26,1 31,7 31,14C31,19 27,21 23,21C19,21 18,19 19,17C20,15 19,11 14,11C8,11 3,15 2,13Z" fill="url(#eg2)"/><path d="M13,14C9,17 10,24 16,27C11,29 4,25 3,18C5,14 10,12 13,14Z" fill="#0a4fa8"/></svg>
<svg style="left:690px;top:1043px" width="30" height="26" viewBox="0 0 30 26" ><path d="M1,2H10L12,4H28V8H1Z" fill="#e3a21a"/><rect x="1" y="5" width="27" height="20" rx="1" fill="#ffd766"/><rect x="1" y="5" width="27" height="3" fill="#f8c24a"/><path d="M7,14H22V25H18V20H11V25H7Z" fill="#2f8fe0"/><rect x="7" y="14" width="15" height="3" fill="#56b3f5"/></svg>
<div style="left:736px;top:1031px;width:60px;height:49px;background:#454545"></div>
<div style="left:736px;top:1077px;width:60px;height:3px;background:#7fbdee"></div>
<svg style="left:751px;top:1040px" width="30" height="30" viewBox="0 0 30 30" ><rect width="30" height="30" fill="#020208"/><path d="M6,30C12,22 14,12 10,0L16,0C20,12 18,22 13,30Z" fill="#3aa0f0"/><path d="M9,30C13,22 15,12 12,4L14,4C18,14 16,24 12,30Z" fill="#bfe2ff"/><ellipse cx="23.5" cy="12" rx="6" ry="8" fill="#e8822a"/><ellipse cx="22" cy="11" rx="3" ry="4" fill="#ffe7a8"/><text x="3" y="13" font-size="11" font-family="Liberation Sans" font-style="italic" font-weight="bold" fill="#e8e8f0">3S</text></svg>
<svg style="left:1743px;top:1047px" width="18" height="14" viewBox="0 0 18 14" ><path d="M2,10L8.5,3.5L15,10" fill="none" stroke="#fff" stroke-width="1.5"/></svg>
<svg style="left:1769px;top:1044px" width="24" height="22" viewBox="0 0 24 22" ><rect x="7" y="3.5" width="14" height="10" fill="none" stroke="#fff" stroke-width="1.3"/><path d="M14,14V18M9,18.5H19" stroke="#fff" stroke-width="1.3"/><rect x="2.5" y="3" width="4.5" height="5" fill="#181818" stroke="#fff" stroke-width="1.2"/><path d="M4.7,8V17H9" fill="none" stroke="#fff" stroke-width="1.2"/></svg>
<svg style="left:1800px;top:1044px" width="24" height="22" viewBox="0 0 24 22" ><path d="M2,8.5H5.5L10,4.5V18.5L5.5,14.5H2Z" fill="none" stroke="#fff" stroke-width="1.3"/><path d="M13,8.5Q15.5,11.5 13,14.5M15.5,6Q19.5,11.5 15.5,17M18.2,3.8Q23.5,11.5 18.2,19.2" fill="none" stroke="#fff" stroke-width="1.2"/></svg>
<div class="tr" style="left:1832px;top:1035.5px;width:74px;height:18px;font-size:13.5px;text-align:center;letter-spacing:-0.1px">18:08</div>
<div class="tr" style="left:1830px;top:1058px;width:79px;height:18px;font-size:13.5px;text-align:center;letter-spacing:0.55px">29/04/2022</div>
<div style="left:1914px;top:1031px;width:1px;height:49px;background:#6a6a6a"></div>
<div style="left:0;top:440px;width:9.8px;height:26px;overflow:hidden"><span class="a" style="left:4px;top:3.5px;font-size:16.5px;color:#f0f0f0">C</span></div>
<div style="left:0;top:810px;width:9.8px;height:26px;overflow:hidden"><span class="a" style="left:4px;top:5.2px;font-size:16.5px;color:#f0f0f0">S</span></div>
<svg style="left:10px;top:63px" width="1899" height="47" viewBox="10 63 1899 47" ><path d="M612,86.8h8M612,90h9M612.5,93.2h8" stroke="#20c8f0" stroke-width="1.6"/><path d="M612.5,88.4h7M613,91.6h8M613,94.6h7" stroke="#1030e0" stroke-width="1.2"/><path d="M614.5,86L622,80.5L631,90L623.5,95Z" fill="#f4f4f4" stroke="#222" stroke-width="1"/><path d="M619.5,82.3L623,79.8L632,89.3L628.3,91.8Z" fill="#f0e800" stroke="#333" stroke-width=".6"/><path d="M624.5,79L629.5,75.5L633.5,79.5L628.5,83Z" fill="#e8e8e8" stroke="#333" stroke-width=".6"/><path d="M627.8,80.5L631.3,77.5" stroke="#16164e" stroke-width="3.6" stroke-linecap="round"/><path d="M628.5,80.2L631.5,77.6" stroke="#1428e8" stroke-width="2" stroke-linecap="round"/><defs><radialGradient id="gball" cx=".45" cy=".35" r=".65"><stop offset="0" stop-color="#fff060"/><stop offset=".5" stop-color="#ffc030"/><stop offset=".85" stop-color="#f070c0"/><stop offset="1" stop-color="#d040f0"/></radialGradient></defs><circle cx="646.6" cy="90.2" r="5.9" fill="url(#gball)"/><path d="M652,83.5L657.5,88.5M653.5,80.5L658,85" stroke="#1428a0" stroke-width="1.3"/><path d="M651.5,81.5L654,78.5L658,77.8M656,80.5l2,2" stroke="#f090c0" stroke-width="1.3" fill="none"/><path d="M653,82.5l1.5,1.5" stroke="#f0e020" stroke-width="1.5"/><rect x="698.6" y="82" width="5.3" height="5.4" fill="#30d8f0"/><rect x="697.6" y="81" width="5.3" height="5.4" fill="#16164e"/><path d="M706,92.1h9.3l-4.65,5.3z" fill="#000"/><path d="M720.7,92.7L738,75.4" stroke="#30d8f0" stroke-width="1.6" stroke-linecap="round"/><path d="M719.9,91.5L736.9,74.6" stroke="#16164e" stroke-width="2.6" stroke-linecap="round"/><path d="M733.9,92.1h9.3l-4.65,5.3z" fill="#000"/><path d="M746.7,88.8L753.8,81.9H765.8L759.1,88.8Z" fill="#ffee88" stroke="#16164e" stroke-width="1.4" stroke-linejoin="round"/><path d="M746.5,89.3H759.3" stroke="#16164e" stroke-width="2.2"/><path d="M759.6,89L766.3,82.2" stroke="#28a0b8" stroke-width="1.3"/><path d="M761.3,92.1h9.3l-4.65,5.3z" fill="#000"/><path d="M787.5,82C789,78 794,80 797,77C799,75.5 800.5,74.5 801,75.5C801.5,77 799,77.5 800,80" fill="none" stroke="#18a0a0" stroke-width="1.1"/><path d="M800.5,79V86" stroke="#fff" stroke-width="1.2"/><path d="M785.5,92.5C785,88 789,83.5 795,83.5C800,83.5 803.5,86.5 803.5,90L801,93C800,90 797,88.5 794,88.5C791,88.5 789,90.5 788.5,93Z" fill="#38e0f8" stroke="#1020f0" stroke-width="1.2"/><path d="M787.5,90.5C788.5,87.5 791,85.8 795,85.8C798.5,85.8 801,87.5 802,89.5" fill="none" stroke="#f8f020" stroke-width="1.6"/><path d="M798.9,92.1h9.3l-4.65,5.3z" fill="#000"/><path d="M815,76.5L821,79L828,77L830.5,80V90H827L823,86L816,89Z" fill="#101018"/><path d="M812,88.5L820.5,78C823.5,75 828.5,75.5 830.5,79.5L830,83.5L822,92.5C821,89 817.5,87.5 814.5,90Z" fill="#38e0f8" stroke="#1020f0" stroke-width="1.2"/><path d="M818,83C822,82.5 825.5,84.5 827,88" fill="none" stroke="#f8f020" stroke-width="1.7"/><path d="M816,91L819.5,89.5" stroke="#101018" stroke-width="2"/><path d="M839.5,87.5L848.5,77.5C852,74.5 857,75.5 858.5,79.5L858,83.5L850,92.5C849,89 845.5,87.5 842.5,89.5Z" fill="#38e0f8" stroke="#1020f0" stroke-width="1.2"/><path d="M850.5,77.5C854,78 856.5,80.5 857.5,84" fill="none" stroke="#f8f020" stroke-width="1.7"/><path d="M846,81C849.5,81.5 852,84 853,88" fill="none" stroke="#108888" stroke-width="1.1"/><path d="M853.8,92.1h9.3l-4.65,5.3z" fill="#000"/><circle cx="886.6" cy="84.2" r="8.4" fill="none" stroke="#16164e" stroke-width="2.2"/><circle cx="886.6" cy="84.2" r="7.3" fill="none" stroke="#30d8f0" stroke-width="1.1"/><path d="M891,92.1h9.3l-4.65,5.3z" fill="#000"/><path d="M904.8,92.5C905,87 907.5,83.5 910,84.5C913,86 914.5,90.5 918.5,89.9C922,89.5 924,85.5 922.9,82C921.5,77.5 917.5,74.2 914.5,75C912.5,75.6 911.5,77 911,78.8" fill="none" stroke="#16164e" stroke-width="1.8"/><path d="M905.8,92C906,87.5 908,84.5 910,85.5C913,87 914.5,91.3 918.7,90.8C922.5,90.3 925,86 923.9,82" fill="none" stroke="#30d8f0" stroke-width=".9"/><circle cx="905" cy="92" r="1.5" fill="#1020f0"/><circle cx="909.6" cy="84.6" r="1.5" fill="#1020f0"/><circle cx="918.5" cy="89.9" r="1.5" fill="#1020f0"/><circle cx="922.9" cy="82.4" r="1.5" fill="#1020f0"/><circle cx="911" cy="78.8" r="1.5" fill="#1020f0"/><path d="M918.5,92.1h9.3l-4.65,5.3z" fill="#000"/><path d="M960.5,81C960.5,77 963,74.8 964.3,74.8C967,74.8 969.3,77 969.3,81C969.3,83.5 967.5,85 967.3,87.5H961.6C961.3,85 960.5,83.5 960.5,81Z" fill="#d2d2da" stroke="#9898a2" stroke-width="1.2"/><path d="M963.2,79.5V83.5M966,79.5V83.5" stroke="#9898a2" stroke-width="1.1"/><rect x="961.7" y="87.8" width="5.6" height="4" rx="1" fill="#9898a2"/><path d="M957.5,77Q955.5,81.5 957.5,86M972.3,77Q974.3,81.5 972.3,86" fill="none" stroke="#dadae6" stroke-width="1.2"/><path d="M1007,75V81H1017.5V75M1008,77.5H1016.5" fill="none" stroke="#ececf2" stroke-width="1.6"/><path d="M1008,77.5H1016.5" stroke="#a8a8b0" stroke-width="1"/><path d="M1006.5,82.5H1017.5V93" fill="none" stroke="#a0a0a8" stroke-width="2.2"/><path d="M1007,86H1014V93M1007.5,89.5H1011" fill="none" stroke="#b4b4bc" stroke-width="1.6"/><rect x="1019" y="82" width="7" height="11" fill="#e4e4ec"/><path d="M1022.7,83.5V91.5M1020.7,83.5h4M1020.7,91.5h4" stroke="#a0a0a8" stroke-width="1.1"/><rect x="1034.7" y="74.6" width="11" height="6.6" fill="#fff080"/><path d="M1036,77.8H1044.5M1036,75.6v4.4M1044.5,75.6v4.4" stroke="#16164e" stroke-width="1.3"/><rect x="1046.5" y="82" width="7" height="11.3" fill="#fff080"/><path d="M1050,83.5V92M1047.8,83.5h4.4M1047.8,92h4.4" stroke="#16164e" stroke-width="1.3"/><rect x="1034.7" y="82" width="11" height="11.2" fill="#50e0f4" stroke="#000" stroke-width="1.5"/></svg>
<svg style="left:1640px;top:63px" width="140" height="47" viewBox="1640 63 140 47" ><path d="M1654,76.6L1675.8,84.2L1654,93.4Z" fill="#84d6c8"/><path d="M1665.8,84.4L1665.7,85.5L1664.1,86.0L1663.7,86.7L1664.2,88.4L1663.3,89.1L1661.8,88.3L1661.0,88.5L1660.2,90.0L1659.1,89.9L1658.6,88.3L1657.9,87.9L1656.2,88.4L1655.5,87.5L1656.3,86.0L1656.1,85.2L1654.6,84.4L1654.7,83.3L1656.3,82.8L1656.7,82.1L1656.2,80.4L1657.1,79.7L1658.6,80.5L1659.4,80.3L1660.2,78.8L1661.3,78.9L1661.8,80.5L1662.5,80.9L1664.2,80.4L1664.9,81.3L1664.1,82.8L1664.3,83.6Z" fill="#5a5a5a" stroke="#1a1a1a" stroke-width="1.3"/><circle cx="1660.2" cy="84.4" r="2.3" fill="#84d6c8" stroke="#bbb" stroke-width=".8"/><path d="M1673.1,79.9L1673.0,80.8L1671.7,81.3L1671.4,81.9L1671.5,83.2L1670.7,83.7L1669.6,83.0L1668.9,83.1L1668.0,84.0L1667.1,83.7L1666.9,82.4L1666.4,81.9L1665.1,81.7L1664.8,80.8L1665.8,79.9L1665.8,79.2L1665.1,78.1L1665.6,77.3L1666.9,77.4L1667.5,77.1L1668.0,75.8L1668.9,75.7L1669.6,76.8L1670.3,77.1L1671.5,76.6L1672.2,77.3L1671.7,78.5L1672.0,79.2Z" fill="#6a6a6a" stroke="#1a1a1a" stroke-width="1.2"/><circle cx="1668.9" cy="79.9" r="1.7" fill="#c8c0a0" stroke="#ddd" stroke-width=".7"/><path d="M1683.9,76.9L1705.8,84.2L1683.9,93.4Z" fill="#84d6c8"/><path d="M1701.3,81.5L1701.2,82.8L1699.3,83.5L1698.8,84.5L1699.5,86.4L1698.6,87.3L1696.7,86.6L1695.7,87.1L1695.0,89.0L1693.7,89.1L1692.7,87.3L1691.7,87.1L1689.9,88.1L1688.8,87.3L1689.2,85.3L1688.6,84.5L1686.6,84.1L1686.2,82.8L1687.8,81.5L1687.9,80.5L1686.6,78.9L1687.1,77.7L1689.2,77.7L1689.9,77.0L1689.9,74.9L1691.1,74.4L1692.7,75.7L1693.7,75.6L1695.0,74.0L1696.3,74.4L1696.7,76.4L1697.5,77.0L1699.5,76.6L1700.3,77.7L1699.3,79.5L1699.5,80.5Z" fill="#d4d4d4" stroke="#707070" stroke-width="1.2"/><circle cx="1693.7" cy="81.5" r="3.1" fill="#84d6c8" stroke="#8a8a8a" stroke-width="1"/><path d="M1713.8,88.5L1720,84L1730,78L1736,74V87.2L1726.2,93.7L1720.3,91.5L1713.8,95.9Z" fill="#e8a258"/><path d="M1714.5,77L1722,75L1727.5,81.5L1719.5,84.5Z" fill="#8a8a8a" stroke="#1a1a1a" stroke-width="1"/><path d="M1716,78L1721.5,76.3L1724,79.5L1718,81.5Z" fill="#e8e8e8"/><path d="M1719.5,84.5L1727.5,81.5L1735,83L1734.5,85.5L1727,88.5L1725.5,91.5L1719,87.5Z" fill="#dcdcdc" stroke="#1a1a1a" stroke-width="1"/><path d="M1719.5,85L1727,88.3L1725.5,91.5L1719,87.5Z" fill="#555"/><path d="M1744,77.7L1765.6,85.3L1744,94.4Z" fill="#84d6c8"/><path d="M1746,86.5L1752,80L1760,80.5L1764,86L1757,90Z" fill="#f0f0f0" stroke="#1a1a1a" stroke-width="1.1"/><path d="M1747,91L1757,90L1764,86.5M1749,93L1756.5,93.5L1763,91" fill="none" stroke="#0a6a3a" stroke-width="1.3"/><path d="M1748,89.5l3,2M1760,89l3,3" stroke="#111" stroke-width="1.5"/><path d="M1758.8,78.9L1758.7,79.8L1757.4,80.3L1757.1,80.9L1757.2,82.2L1756.4,82.7L1755.3,82.0L1754.6,82.1L1753.7,83.0L1752.8,82.7L1752.6,81.4L1752.1,80.9L1750.8,80.7L1750.5,79.8L1751.4,78.9L1751.5,78.2L1750.8,77.1L1751.3,76.3L1752.6,76.4L1753.2,76.1L1753.7,74.8L1754.6,74.7L1755.3,75.8L1756.0,76.1L1757.2,75.6L1757.9,76.3L1757.4,77.5L1757.7,78.2Z" fill="#4a4a4a" stroke="#111" stroke-width="1"/><circle cx="1754.6" cy="78.9" r="1.5" fill="#ddd"/></svg>
<svg style="left:10px;top:110px" width="47" height="831" viewBox="10 110 47 831" ><path d="M22.5,135.8H37.5" stroke="#000" stroke-width="1.4"/><path d="M25.5,132.6L21.8,135.8L25.5,139M34.5,132.6L38.2,135.8L34.5,139" fill="none" stroke="#1020e0" stroke-width="1.5"/><rect x="21.3" y="142.4" width="17.6" height="6.2" fill="#30d8f0"/><rect x="21.3" y="140.6" width="17.4" height="6.2" fill="#16164e"/><rect x="22.6" y="143.4" width="14.8" height="2.6" fill="#ffd850"/><path d="M24.5,141.5v2.4M27.5,141.5v2.4M30.5,141.5v2.4M33.5,141.5v2.4M36,141.5v2.4" stroke="#ffd850" stroke-width="1.1"/><path d="M27,159H35.5V172H30M35.5,168.5H32.5V175H36.5V168.5" fill="#b8b8c8" stroke="#4a4a60" stroke-width="1.4"/><circle cx="27.5" cy="166" r="4.6" fill="#2878c8" stroke="#3a3a50" stroke-width="1"/><path d="M24.5,164.5Q27,162 30,163.5" stroke="#90e8f8" stroke-width="1.6" fill="none"/><path d="M25,169.5Q28,170 30.5,167.5" stroke="#d8e060" stroke-width="1.2" fill="none"/><defs><linearGradient id="gw" x1="0" x2="1"><stop offset="0" stop-color="#d8c040"/><stop offset=".45" stop-color="#a89020"/><stop offset="1" stop-color="#5a4c08"/></linearGradient></defs><circle cx="30" cy="188.6" r="2.6" fill="none" stroke="#222" stroke-width="1.5"/><path d="M25.3,192.5Q30,190 35,192.5V201.5Q30,204.5 25.3,201.5Z" fill="url(#gw)" stroke="#3a3208" stroke-width=".8"/><path d="M21,245.5L27,241H39L33.5,245.5Z" fill="#1870b8" stroke="#16164e" stroke-width="1"/><path d="M21,245.5H33.5V253H21Z" fill="#18a0a8" stroke="#16164e" stroke-width="1"/><path d="M33.5,245.5L39,241V248L33.5,253Z" fill="#c01828" stroke="#16164e" stroke-width="1"/><path d="M29.5,244V236.5" stroke="#f8e020" stroke-width="1.8"/><path d="M29.5,233.5L32,237.5H27Z" fill="#f8e020"/><path d="M28,243.5L22,238" stroke="#d82020" stroke-width="1.3"/><rect x="20.8" y="236.3" width="2.6" height="2.6" fill="#d82020"/><path d="M21.5,264.5Q26,261.5 30,263.5Q34,261.5 38.5,263V277.5Q34,279.5 30,277Q26,279.5 21.5,277.5Q24,271 21.5,264.5Z" fill="#1830d8" stroke="#101080" stroke-width=".8"/><path d="M23.5,266.5Q27,264.5 29,266.5L27,272Q25,274.5 23.5,273Z" fill="#30e0f0"/><path d="M31,270Q33,264.5 37,265.5V270Q34,274.5 31,275.5Z" fill="#30e0f0"/><path d="M26.5,266.5L29,265.5L27.5,270.5Z" fill="#f8e830"/><path d="M34,268.5Q37.5,270 36.5,274Q33.5,272.5 34,268.5Z" fill="#f8e830"/><path d="M35,270Q37.2,271 36.5,273.3Q34.8,272.3 35,270Z" fill="#e02020"/><path d="M27,267.2l1.2,-.5l-.6,1.8z" fill="#e02020"/><rect x="21.3" y="289.5" width="17" height="16.5" fill="#ffee90" stroke="#16164e" stroke-width="1.6"/><circle cx="28.6" cy="297.5" r="5.2" fill="none" stroke="#222" stroke-width="1.1"/><path d="M28.6,290.5V304.5M21.8,297.5H35.5" stroke="#222" stroke-width="1"/><circle cx="28.6" cy="297.5" r="1.8" fill="#c8c8d8" stroke="#222" stroke-width=".6"/><path d="M31.5,303.5Q37,304.5 37.5,299.5Q39.5,302 38.5,305.5" fill="none" stroke="#1020e0" stroke-width="1.5"/><path d="M22.5,296Q22,291.5 26.5,291" fill="none" stroke="#1020e0" stroke-width="1.2"/><circle cx="39.3" cy="307.5" r="1.1" fill="#1020e0"/><path d="M23.5,320.5L30.5,318L38.5,318.5L37,323L38.5,327L36,331.5L30.5,334.5L23,333L25.5,327.5Z" fill="#189098"/><path d="M24.5,321L30,319L31,324L26,325.5Z" fill="#30c8c8"/><path d="M25,328.5L31,327L31.5,333L24.5,332Z" fill="#30c8c8"/><path d="M26,324L31,322.5L33,325.5L31.5,329.5L26,330.5L28,327Z" fill="#f8e830"/><path d="M28.5,327Q32,323.5 37,322.5L36.5,325Q32.5,326 30,329Z" fill="#d01820"/><path d="M31,318.5V334" stroke="#106068" stroke-width=".8"/><path d="M22.5,385V378.5Q22.5,375.5 24.5,375.5Q26.5,375.5 26.5,378.5V385Z" fill="#dcdce8" stroke="#9090a0" stroke-width="1.2"/><path d="M22.5,385.5L28.5,389.5" stroke="#333" stroke-width="1.1"/><path d="M27,388l2.5,2l.5,-2.5z" fill="#000"/><path d="M33,383V392.5Q36,394.5 39,392.5V383Z" fill="#30d8f0" stroke="#16164e" stroke-width="1"/><path d="M36.5,383V393.5L39,392.5V383Z" fill="#16164e"/><ellipse cx="36" cy="382.8" rx="3" ry="1.6" fill="#e8ffff" stroke="#16164e" stroke-width=".9"/><path d="M35,391.3h9.3l-4.65,5.3z" fill="#000"/><path d="M27,417L35.5,411.5V424.5L27,430Z" fill="#fff098" stroke="#28a8b8" stroke-width=".9"/><path d="M20.8,414.5L24.5,411.5L28.5,413.5V421.5L24.8,424L20.8,421.5Z" fill="#30d8f0" stroke="#16164e" stroke-width="1"/><path d="M21.5,414.5L24.5,412.5L27.5,414L24.6,416Z" fill="#f0ffff"/><path d="M24.8,416.5V423.5L28,421.3V414Z" fill="#16164e"/><path d="M32,420.5L35.5,418L40,420V427.5L36,430L32,427.5Z" fill="#30d8f0" stroke="#16164e" stroke-width="1"/><path d="M32.7,420.7L35.5,419L39,420.4L36,422.3Z" fill="#f0ffff"/><path d="M36.2,422.7V429.5L39.8,427.3V420.5Z" fill="#16164e"/><path d="M22,439.5H38.8M22,445.1H38.8M22,450.7H38.8M22,456.3H33M22,439.5V456.3M27.6,439.5V456.3M33.2,439.5V456.3M38.8,439.5V451" stroke="#2038e0" stroke-width="1"/><circle cx="22" cy="439.5" r="1.7" fill="#1020e0"/><circle cx="22" cy="445.1" r="1.7" fill="#1020e0"/><circle cx="22" cy="450.7" r="1.7" fill="#1020e0"/><circle cx="22" cy="456.3" r="1.7" fill="#1020e0"/><circle cx="27.6" cy="439.5" r="1.7" fill="#1020e0"/><circle cx="27.6" cy="445.1" r="1.7" fill="#1020e0"/><circle cx="27.6" cy="450.7" r="1.7" fill="#1020e0"/><circle cx="27.6" cy="456.3" r="1.7" fill="#1020e0"/><circle cx="33.2" cy="439.5" r="1.7" fill="#1020e0"/><circle cx="33.2" cy="445.1" r="1.7" fill="#1020e0"/><circle cx="33.2" cy="450.7" r="1.7" fill="#1020e0"/><circle cx="33.2" cy="456.3" r="1.7" fill="#1020e0"/><circle cx="38.8" cy="439.5" r="1.7" fill="#1020e0"/><circle cx="38.8" cy="445.1" r="1.7" fill="#1020e0"/><circle cx="38.8" cy="450.7" r="1.7" fill="#1020e0"/><circle cx="27.6" cy="445.1" r=".8" fill="#f8e830"/><circle cx="33.2" cy="450.7" r=".8" fill="#f8e830"/><path d="M35,454.5h9.3l-4.65,5.3z" fill="#000"/><circle cx="29.7" cy="484.7" r="7.6" fill="#ececf6"/><circle cx="29.7" cy="484.7" r="5.4" fill="#f8f070" stroke="#186068" stroke-width="1.8"/><path d="M29.7,480.5L33.5,484.7L29.7,489L26,484.7Z" fill="#ffffc0"/><path d="M20.5,475.5l4.5,.3l-4.2,4.2zM39,475.5l-4.5,.3l4.2,4.2zM20.5,494l4.5,-.3l-4.2,-4.2z" fill="#000"/><path d="M22,477l3,3M37.5,477l-3,3M22,492.5l3,-3M34.5,489.5l4,4" stroke="#000" stroke-width="1.3"/><path d="M35,493.5h9.3l-4.65,5.3z" fill="#000"/><text x="24.6" y="541" font-family="Liberation Mono" font-size="8.2" font-weight="bold" fill="#16164e" letter-spacing="-.2">ABC</text><path d="M25,542.6H39" stroke="#16164e" stroke-width="1.2"/><path d="M28.5,542.6L22,546.8" stroke="#1020e0" stroke-width="1.1"/><path d="M21.3,547.3l3.8,-.6l-2.2,-2.6z" fill="#1020e0"/><path d="M35,550.3h9.3l-4.65,5.3z" fill="#000"/><path d="M28.3,563.3H36.5L39.8,567L36.5,570.8H28.3Z" fill="#fff" stroke="#16164e" stroke-width="1.2"/><path d="M28,568.5L22.5,573" stroke="#1020e0" stroke-width="1.1"/><path d="M21.3,573.8l3.8,-.6l-2.2,-2.6z" fill="#1020e0"/><path d="M35,577.5h9.3l-4.65,5.3z" fill="#000"/><path d="M24,593.5L31,588.5L36.5,588V599L31.5,604L28,605L24,599.5Z" fill="#b8b8be" stroke="#8a8a92" stroke-width="1"/><path d="M25.5,596V601L28.5,603.5L30,599.5L33,598.5" fill="#f4f4f8" stroke="#6a6a72" stroke-width="1"/><path d="M27,593.5V599" stroke="#fff" stroke-width="1.4"/><rect x="28" y="615.5" width="5" height="4.6" fill="#fff" stroke="#d81818" stroke-width="1.5"/><path d="M30.5,620.5V625" stroke="#d81818" stroke-width="1.6"/><path d="M22,627L29,622.5H39L32.5,627Z" fill="#f8d840" stroke="#c02020" stroke-width="1"/><path d="M26.5,626L30.5,623.5L35,624.5L31.5,626.5Z" fill="#e02828"/><path d="M22,627.5H32.5L39,623V626.5L32.5,631.5H22Z" fill="#30d0d8" stroke="#16164e" stroke-width="1"/><path d="M23.5,629.8H31.5" stroke="#a0f8f8" stroke-width="1"/><text x="36" y="657" font-family="Liberation Sans" font-size="14" fill="#222">A</text><path d="M36.5,658L29,663" stroke="#111" stroke-width="1.4"/><path d="M27.3,664.3l5.3,-1l-3,-3.7z" fill="#111"/><rect x="25.3" y="663.2" width="3.8" height="3.8" fill="#30d8f0" stroke="#1870a8" stroke-width=".9"/><defs><radialGradient id="gs17" cx=".35" cy=".35" r=".7"><stop offset="0" stop-color="#a0f8f8"/><stop offset=".6" stop-color="#18a8c0"/><stop offset="1" stop-color="#0a5878"/></radialGradient></defs><circle cx="24.4" cy="704" r="4.2" fill="url(#gs17)"/><path d="M29,700.5Q35,699.5 36.5,705" fill="none" stroke="#1020e0" stroke-width="1.8"/><path d="M29.5,701.5Q33,701 35,704" fill="none" stroke="#f8e830" stroke-width="1"/><path d="M34,704.5h5l-2.6,4.2z" fill="#1020e0"/><path d="M21.5,714L25,710.5H40V716.5L36.5,720H21.5Z" fill="#d8d8e8" stroke="#000" stroke-width="1.2"/><path d="M21.5,714H36.5V720M36.5,714L40,710.5" fill="none" stroke="#000" stroke-width="1.2"/><path d="M25,713H34" stroke="#000" stroke-width="1"/><path d="M20.5,755.5H25L26.5,752.5H34L35.5,755.5H40.3V764H20.5Z" fill="#181850" stroke="#000" stroke-width=".8"/><rect x="27.5" y="752" width="5" height="2" fill="#e8d038"/><rect x="21.5" y="756.8" width="3" height="2" fill="#e8d038"/><rect x="36.5" y="756.8" width="2.6" height="1.6" fill="#b0b0c0"/><circle cx="30.3" cy="759.8" r="4.4" fill="#b8b8c4" stroke="#000" stroke-width=".8"/><circle cx="30.3" cy="759.8" r="2.3" fill="#101018"/><path d="M28.5,762.5L30.3,760L32.3,762.5L31.5,765H29Z" fill="#000"/><path d="M20.5,761.5H40.3" stroke="#5858a0" stroke-width=".8"/><defs><linearGradient id="gc799" x1="0" x2="1"><stop offset="0" stop-color="#50e8ff"/><stop offset=".3" stop-color="#2070f0"/><stop offset=".75" stop-color="#0818b0"/><stop offset="1" stop-color="#101060"/></linearGradient></defs><path d="M24.6,802.5 V815.5 Q30.8,819.5 37,815.5 V802.5 Z" fill="url(#gc799)" stroke="#f0e020" stroke-width="1"/><ellipse cx="30.8" cy="802.5" rx="6.2" ry="2.5" fill="#40e8ff" stroke="#1848c0" stroke-width=".7"/><path d="M26.5,805.5v8M28.3,806v9" stroke="#90f0ff" stroke-width=".9" stroke-dasharray="1.5 1.2"/><defs><linearGradient id="gc828" x1="0" x2="1"><stop offset="0" stop-color="#50e8ff"/><stop offset=".3" stop-color="#2070f0"/><stop offset=".75" stop-color="#0818b0"/><stop offset="1" stop-color="#101060"/></linearGradient></defs><path d="M23.4,831.5 Q23.4,828 30.6,828 Q37.8,828 37.8,831.5 V843 Q37.8,847 30.6,847 Q23.4,847 23.4,843 Z" fill="#e8d818" stroke="#1a1a30" stroke-width="1"/><path d="M25.2,832 V842.5 Q30.6,845.5 36,842.5 V832 Z" fill="url(#gc828)"/><ellipse cx="30.6" cy="832" rx="5.4" ry="2" fill="#48e8ff" stroke="#1848c0" stroke-width=".6"/><path d="M32,834V844.5" stroke="#e8d818" stroke-width="1.6"/><path d="M25.2,834.8H36" stroke="#101060" stroke-width="1"/><defs><linearGradient id="gc855" x1="0" x2="1"><stop offset="0" stop-color="#50e8ff"/><stop offset=".3" stop-color="#2070f0"/><stop offset=".75" stop-color="#0818b0"/><stop offset="1" stop-color="#101060"/></linearGradient></defs><path d="M23.4,859 Q23.4,855.5 30.6,855.5 Q37.8,855.5 37.8,859 V870.5 Q37.8,874.5 30.6,874.5 Q23.4,874.5 23.4,870.5 Z" fill="#e8d818" stroke="#1a1a30" stroke-width="1"/><path d="M25.2,859.5 V870 Q30.6,873 36,870 V859.5 Z" fill="url(#gc855)"/><ellipse cx="30.6" cy="859.5" rx="5.4" ry="2" fill="#48e8ff" stroke="#1848c0" stroke-width=".6"/><path d="M25.2,862.5H36" stroke="#101060" stroke-width="1.2"/><defs><linearGradient id="gc883" x1="0" x2="1"><stop offset="0" stop-color="#50e8ff"/><stop offset=".3" stop-color="#2070f0"/><stop offset=".75" stop-color="#0818b0"/><stop offset="1" stop-color="#101060"/></linearGradient></defs><path d="M23.4,886.5 Q23.4,883 30.6,883 Q37.8,883 37.8,886.5 V898 Q37.8,902 30.6,902 Q23.4,902 23.4,898 Z" fill="#e8d818" stroke="#1a1a30" stroke-width="1"/><path d="M25.2,887 V897.5 Q30.6,900.5 36,897.5 V887 Z" fill="#c8d8f0"/><ellipse cx="30.6" cy="887" rx="5.4" ry="2" fill="#48e8ff" stroke="#1848c0" stroke-width=".6"/><path d="M31,888.5v9M33,888.5v9M35,888.5v8" stroke="#4858c0" stroke-width=".9" stroke-dasharray="1 1"/><ellipse cx="30.6" cy="897.8" rx="5.2" ry="2" fill="#f0f0b0" stroke="#1848c0" stroke-width=".6"/></svg>
<svg style="left:1861px;top:110px" width="48" height="831" viewBox="1861 110 48 831" ><path d="M1874.3,135.8L1896,143.3L1874.3,152.5Z" fill="#84d6c8"/><path d="M1891.6,140.3L1891.5,141.6L1889.6,142.3L1889.1,143.3L1889.8,145.2L1888.9,146.1L1887.0,145.4L1886.0,145.9L1885.3,147.8L1884.0,147.9L1883.0,146.1L1882.0,145.9L1880.2,146.9L1879.1,146.1L1879.5,144.1L1878.9,143.3L1876.9,142.9L1876.5,141.6L1878.1,140.3L1878.2,139.3L1876.9,137.7L1877.4,136.5L1879.5,136.5L1880.2,135.8L1880.2,133.7L1881.4,133.2L1883.0,134.5L1884.0,134.4L1885.3,132.8L1886.6,133.2L1887.0,135.2L1887.8,135.8L1889.8,135.4L1890.6,136.5L1889.6,138.3L1889.8,139.3Z" fill="#c8c8c8" stroke="#787878" stroke-width="1.2"/><circle cx="1884" cy="140.3" r="3" fill="#84d6c8" stroke="#8a8a8a" stroke-width="1"/><path d="M1877.8,185.5V200L1881.5,197L1884.5,203L1887.5,201.5L1884.5,196L1890.5,195.8Z" fill="#fff4e8" stroke="#f87808" stroke-width="1.7" stroke-linejoin="round"/><path d="M1888.5,203.3h9.3l-4.65,5.3z" fill="#000"/><rect x="1874.8" y="235.8" width="16.6" height="13" fill="#fff" stroke="#16164e" stroke-width="1.5"/><path d="M1874.5,250.3H1891.5" stroke="#28a0a8" stroke-width="1.4"/><path d="M1877,243L1880,247.5L1883,244" fill="none" stroke="#16164e" stroke-width="1.1"/><path d="M1881,247.3L1889.3,234.6" stroke="#16164e" stroke-width="4" stroke-linecap="round"/><path d="M1881.4,246.6L1889,235" stroke="#f4ec60" stroke-width="2" stroke-linecap="round"/><path d="M1888.5,251.3h9.3l-4.65,5.3z" fill="#000"/><path d="M1877.5,281.5H1893V300H1877.5" fill="#fff" stroke="#16164e" stroke-width="2.4"/><path d="M1875.2,292L1878.5,289H1885.5V294.5L1882.5,297.8H1875.2Z" fill="#fff088" stroke="#16164e" stroke-width="1"/><path d="M1875.2,292H1882.5V297.8M1882.5,292L1885.5,289" fill="none" stroke="#16164e" stroke-width="1"/><path d="M1884,288L1889,283.5" stroke="#16164e" stroke-width="1.4"/><path d="M1889.3,300.5h9.3l-4.65,5.3z" fill="#000"/><rect x="1875" y="309" width="17.6" height="17.8" fill="#fff088" stroke="#16164e" stroke-width="1.7"/><path d="M1878.5,312.5H1889V322.5H1878.5Z" fill="#16164e"/><path d="M1880,312.5H1884V319H1889V323H1880Z" fill="#e4e4ec" stroke="#16164e" stroke-width="1.1"/><path d="M1889.3,328h9.3l-4.65,5.3z" fill="#000"/><path d="M1876,343Q1876,337.5 1882.5,337.5V353Q1879,354.5 1877.5,353Z" fill="#1a8898" stroke="#16164e" stroke-width="1.4"/><path d="M1877.5,343Q1878,340 1881,339.5V351L1878.5,351.5Z" fill="#30c8d0"/><path d="M1887,337.5Q1893.5,337.5 1893.5,343L1892,353Q1890,354.5 1887,354Z" fill="#fff088" stroke="#16164e" stroke-width="1.4"/><path d="M1882.5,338V355M1887,338V355" stroke="#16164e" stroke-width="1.2"/><path d="M1884.8,336V356" stroke="#fff" stroke-width="1.4"/><path d="M1875,368V379Q1883,384.5 1893,379V368Z" fill="#fff088" stroke="#16164e" stroke-width="1.4"/><ellipse cx="1884" cy="367.5" rx="9" ry="3.2" fill="#40e0f4" stroke="#16164e" stroke-width="1.2"/><path d="M1893,371.5H1884Q1881,371.5 1881,375Q1881,378.5 1884,378.5H1893" fill="#1a8898" stroke="#d02020" stroke-width="1.4"/><path d="M1885,373.5H1892V376.5H1885Z" fill="#4a4a60"/><path d="M1875,394.5L1877,392H1893.5V408.5L1891.5,411" fill="#16164e" stroke="#16164e" stroke-width="1.2"/><rect x="1875" y="394.5" width="16.5" height="16.5" fill="#fff088" stroke="#16164e" stroke-width="1.6"/><circle cx="1883.2" cy="402.7" r="4.3" fill="#c8c8d4" stroke="#2a2a48" stroke-width="2.2"/><path d="M1880,424L1890,419V431L1884,436.5L1880,433Z" fill="#9a9aa8" stroke="#16164e" stroke-width="1.2"/><path d="M1880,424L1884,427.5V436.5L1880,433Z" fill="#16164e"/><path d="M1884,427.5L1890,421V431L1884,436.5Z" fill="#fff088"/><path d="M1880,424L1890,419" stroke="#f8e020" stroke-width="1.6"/><path d="M1875,437.5V434.5H1878.5V428H1881.5V434.5H1887V437.5Z" fill="#fff" stroke="#16164e" stroke-width="1"/><path d="M1875,455L1886,447H1893.5V458L1887,465.5H1875Z" fill="#16164e" stroke="#16164e" stroke-width="1.2"/><path d="M1877,458.5H1887V464H1877Z" fill="#fff"/><path d="M1876,455L1886,448L1889,449.5L1879,456.5Z" fill="#fff088"/><path d="M1881,456L1890,449.5L1892,451L1883.5,457.5Z" fill="#28a8b0"/><path d="M1880,456.5L1888.5,450.5" stroke="#fff088" stroke-width="1.5"/><path d="M1877.5,474H1881L1883,476H1893V491H1877.5Z" fill="#1a9098"/><path d="M1893,476V492.5H1876.5Z" fill="#16164e"/><path d="M1875,490.5L1890.5,477.5" stroke="#16164e" stroke-width="4.4" stroke-linecap="round"/><path d="M1875.3,490.2L1890.2,477.8" stroke="#fff088" stroke-width="2.4" stroke-linecap="round"/><path d="M1889.3,493.3h9.3l-4.65,5.3z" fill="#000"/><path d="M1875,520.5L1879,511H1892L1893,520.5Z" fill="#fff" stroke="#000" stroke-width="1.3"/><path d="M1883,503.5Q1887,500.5 1890,503Q1892.5,506 1890.5,510Q1889.5,514 1887,516.5Q1884,516.5 1883.5,512.5Q1880.5,508.5 1883,503.5Z" fill="#f8ee20" stroke="#888010" stroke-width=".7"/><path d="M1877.5,517.5Q1879,509 1883.5,505.5M1892.5,507Q1891.5,513 1888.5,517" fill="none" stroke="#30d0e8" stroke-width="1.8"/><path d="M1884,508.5Q1887,510.5 1890,508" fill="none" stroke="#a09010" stroke-width="1"/><path d="M1875,548L1877,537.5H1892.5V548Z" fill="#fff" stroke="#000" stroke-width="1.4"/><path d="M1880,538.5Q1879.5,543.5 1884,544.5Q1888.5,544 1889.5,538.5Q1886,536 1880,538.5Z" fill="#38d8f0" stroke="#1880a0" stroke-width=".8"/><path d="M1878.5,538L1882.5,532.5L1884.5,535L1881,539.5ZM1889,538.5L1891.5,531.5L1893,535.5L1891.5,540Z" fill="#f8ee20" stroke="#404010" stroke-width=".8"/><path d="M1875.5,582L1880,578H1888L1883.5,582Z" fill="#8a8a96" stroke="#333" stroke-width=".8"/><path d="M1875.5,582V591L1884,597V588Z" fill="#1a8898" stroke="#16164e" stroke-width="1"/><path d="M1875.5,582L1884,588" stroke="#30c8d0" stroke-width="1.3"/><path d="M1884,597V589Q1884.5,581.5 1891,579.5Q1894,583 1893.5,590.5Z" fill="#fff6c0" stroke="#d02020" stroke-width="1.3"/><path d="M1880,578Q1887,577 1891,579.5" fill="none" stroke="#d02020" stroke-width="1.3"/><path d="M1889.3,596.7h9.3l-4.65,5.3z" fill="#000"/><path d="M1874.5,613L1881.5,606L1890.5,608L1893,612L1884,616Z" fill="#fff2c0" stroke="#d02020" stroke-width="1.3"/><path d="M1874.5,613L1884,616V624L1876,620.5Z" fill="#8a8a96" stroke="#333" stroke-width="1"/><path d="M1884,616L1893,612V619.5L1884,624Z" fill="#38c8f0" stroke="#16164e" stroke-width="1"/><path d="M1880,639L1884.5,633H1892L1889.5,639.5Z" fill="#40e0f4" stroke="#1880a0" stroke-width=".8"/><path d="M1880,639L1889.5,639.5L1887.5,650L1876.5,647.5Z" fill="#f8ee20" stroke="#16164e" stroke-width="1"/><path d="M1889.5,639.5L1892,633.5L1892.5,644L1887.5,650Z" fill="#7a7a88" stroke="#16164e" stroke-width=".8"/><path d="M1888.8,652h9.3l-4.65,5.3z" fill="#000"/><path d="M1874,674.5L1880.5,662.5L1888.5,660.5L1893.5,664.5L1887.5,677L1881,679.5Z" fill="#1a8898" stroke="#16164e" stroke-width="1.2"/><path d="M1881,677L1886,665.5L1890.5,666L1886,676.5Z" fill="#fff088" stroke="#16164e" stroke-width="1.4"/><path d="M1880.5,663L1888.5,661L1892.5,664.5L1886,665.5Z" fill="#16164e"/><path d="M1874.5,694.5L1879,690H1886V703.5L1882,707.5H1874.5Z" fill="#fff088" stroke="#16164e" stroke-width="1.2"/><path d="M1874.5,694.5H1882V707.5M1882,694.5L1886,690" fill="none" stroke="#16164e" stroke-width="1"/><path d="M1886,688H1893.5V704H1886Z" fill="#d0f4fc"/><path d="M1887.5,689v14M1890,689v14M1892.5,689v14" stroke="#38b8d8" stroke-width="1.1" stroke-dasharray="1.4 1.2"/><path d="M1877.5,699H1890" stroke="#1020e0" stroke-width="1.6"/><path d="M1893,699l-4.6,-3v6z" fill="#1020e0"/><circle cx="1883" cy="724" r="8.6" fill="#f4e890" stroke="#111" stroke-width="1.7"/><circle cx="1883" cy="724" r="4.6" fill="none" stroke="#111" stroke-width="1.2"/><path d="M1883,714V734M1873,724H1893" stroke="#111" stroke-width="1.2"/><path d="M1874.5,751L1881.5,744.5H1893L1886.5,751Z" fill="#18888c" stroke="#0a3a48" stroke-width="1"/><path d="M1886.5,751L1893,744.5V756.5L1886.5,763Z" fill="#f8ee20" stroke="#333" stroke-width=".8"/><rect x="1874.5" y="751" width="12" height="12" fill="#f8ee20" stroke="#111" stroke-width="1.2"/><path d="M1875.5,752L1885.5,762M1885.5,752L1875.5,762" stroke="#e01818" stroke-width="1.8"/><path d="M1888.8,761.9h9.3l-4.65,5.3z" fill="#000"/><rect x="1873" y="770.4" width="21" height="20" fill="#b4b4be"/><path d="M1875,776.5L1880,772.5H1892.5L1888,776.5Z" fill="#22a0a4" stroke="#0a3a48" stroke-width="1"/><path d="M1875,776.5H1888V788.5H1875Z" fill="#18888c" stroke="#0a3a48" stroke-width="1"/><path d="M1888,776.5L1892.5,772.5V784.5L1888,788.5Z" fill="#106468" stroke="#0a3a48" stroke-width="1"/><path d="M1879.5,778.5Q1883.5,775.5 1887.5,778.5L1885,783V788H1882V783Z" fill="#f8e870"/><path d="M1875,828L1879,824.5H1886V834.5L1882,838.5H1875Z" fill="#fff088" stroke="#16164e" stroke-width="1.2"/><path d="M1875,828H1882V838.5M1882,828L1886,824.5" fill="none" stroke="#16164e" stroke-width="1"/><path d="M1877,823.5L1880,819.5L1889.5,822L1887,828.5Z" fill="#fff" stroke="#1a8898" stroke-width="1.2"/><path d="M1880,819.5L1889.5,822" stroke="#1020e0" stroke-width="1.3"/><path d="M1886,829L1891,825V834L1886,837.5Z" fill="#1a8898" stroke="#16164e" stroke-width="1"/><rect x="1888.5" y="819.5" width="5" height="5" fill="#fff088" stroke="#16164e" stroke-width="1.1"/><path d="M1888.8,838.8h9.3l-4.65,5.3z" fill="#000"/></svg>
<svg style="left:10px;top:941px" width="1899" height="49" viewBox="10 941 1899 49" ><path d="M37.2,957.2H45.5L49.5,961V971.5H37.2Z" fill="#fff" stroke="#000" stroke-width="1.3"/><path d="M45.5,957.2V961H49.5" fill="none" stroke="#000" stroke-width="1"/><path d="M61.5,971.5V960H66L67.5,961.5H74.5V964" fill="#e8e050" stroke="#4a4408" stroke-width="1.2"/><path d="M61.5,971.5L65.5,964H80.5L76,971.5Z" fill="#e8e040" stroke="#4a4408" stroke-width="1.2"/><path d="M71,958.5Q74.5,955 78.5,958.5" fill="none" stroke="#000" stroke-width="1.2"/><path d="M80.3,957l-.3,4.3l-3.8,-1.6z" fill="#000"/><path d="M90.8,955.8H106.5V971.8H92.5L90.8,970Z" fill="#a8a020" stroke="#000" stroke-width="1.2"/><rect x="93.5" y="956.5" width="10" height="6.5" fill="#fff" stroke="#000" stroke-width=".7"/><rect x="94.5" y="965.5" width="9" height="6" fill="#000"/><rect x="100" y="966.8" width="2.2" height="3.6" fill="#a8a020"/><rect x="104" y="957" width="1.4" height="1.8" fill="#000"/><path d="M121,961.5L123.5,955.8H132L130.5,961.5Z" fill="#fff" stroke="#000" stroke-width="1"/><path d="M124.5,958H130M124,960H129.5" stroke="#888" stroke-width=".8"/><path d="M117,964Q117,961.5 120,961.5H131.5Q135.5,961.5 135.5,964.5V969.5H117Z" fill="#dcdce0" stroke="#000" stroke-width="1.1"/><path d="M117,967H135.5" stroke="#000" stroke-width="1"/><path d="M118.5,969.5H134V972.5H118.5Z" fill="#fff" stroke="#000" stroke-width="1"/><rect x="124.5" y="967.6" width="4.5" height="1.4" fill="#e8d020"/><circle cx="133" cy="964.3" r="1.2" fill="#555"/><path d="M150,956L154.5,967M157.5,956L152.5,967" stroke="#a0a0aa" stroke-width="1.3"/><circle cx="150.5" cy="969" r="2.3" fill="none" stroke="#a0a0aa" stroke-width="1.2"/><circle cx="156.5" cy="969" r="2.3" fill="none" stroke="#a0a0aa" stroke-width="1.2"/><path d="M171.8,957.2H177.5L180,959.5V967.5H171.8Z" fill="#f0f0f4" stroke="#a0a0aa" stroke-width="1.1"/><path d="M173.5,960.5H177.5M173.5,962.5H178.5M173.5,964.5H178.5" stroke="#a0a0aa" stroke-width=".8"/><path d="M180,962H186L189.5,965V972.5H180Z" fill="#f0f0f4" stroke="#a0a0aa" stroke-width="1.1"/><path d="M182,966H186.5M182,968H187.5M182,970H187.5" stroke="#a0a0aa" stroke-width=".8"/><rect x="199.3" y="958.5" width="16" height="13" rx="1" fill="#888838" stroke="#000" stroke-width="1.2"/><path d="M203.5,958.5L205.5,955.5H209.5L211.5,958.5Z" fill="#f0e020" stroke="#000" stroke-width="1"/><rect x="207" y="964.5" width="11.5" height="7.5" fill="#fff" stroke="#16164e" stroke-width="1.5"/><path d="M209,968.5H214M209,970H216" stroke="#16164e" stroke-width="1.1"/><path d="M231,962.5Q236,957.5 241,960.5Q244.5,963.5 241,968" fill="none" stroke="#a0a0aa" stroke-width="1.4"/><path d="M228.5,960l5.8,.5l-3.4,4.6z" fill="#a0a0aa"/><path d="M240.8,972.5h9.3l-4.65,5.3z" fill="#000"/><path d="M269.5,962.5Q264.5,957.5 259.5,960.5Q256,963.5 259.5,968" fill="none" stroke="#a0a0aa" stroke-width="1.4"/><path d="M272,960l-5.8,.5l3.4,4.6z" fill="#a0a0aa"/><path d="M268.3,972.5h9.3l-4.65,5.3z" fill="#000"/><path d="M281,955.3V969.5L284.3,966.8L287,972.5L289.3,971.3L286.8,965.8H291Z" fill="#000"/><text x="289.5" y="969.5" font-family="Liberation Sans" font-weight="bold" font-size="17.5" fill="#10107a">?</text><text x="331.5" y="973.5" font-family="Liberation Serif" font-style="italic" font-weight="bold" font-size="24" fill="#000">f</text><text x="339.5" y="976.5" font-family="Liberation Sans" font-weight="bold" font-size="9.5" fill="#000" letter-spacing="-.3">(x)</text><path d="M363,975.5L366.5,971.5Q361,969.5 361,965.5Q361,959.2 370,959.2Q379,959.2 379,965.5Q379,971.8 370,971.8L368.5,971.8Z" fill="#fff" stroke="#000" stroke-width="1.1"/><path d="M365.5,963.5H368M369.5,963.5H372M373.5,963.5H375M365,966H375M366.5,968.5H369M370.5,968.5H373.5" stroke="#222" stroke-width=".9"/><path d="M393,958H401V964L397,968L393,964Z" fill="#d4d4dc" stroke="#b0b0ba" stroke-width="1"/><circle cx="397" cy="960.8" r="2" fill="none" stroke="#b0b0ba" stroke-width="1"/><circle cx="397" cy="972" r="5" fill="#c0c0c8" stroke="#a4a4ae" stroke-width="1"/><circle cx="397" cy="972" r="2.4" fill="#a8a8b2"/><rect x="416.3" y="958.3" width="17.9" height="2.6" fill="#1020e0"/><rect x="416.8" y="961" width="17" height="14" fill="#fff"/><path d="M416.5,961.7H434" stroke="#000" stroke-width="1.1"/><path d="M416.5,965H434" stroke="#000" stroke-width="1.1"/><path d="M416.5,968.3H434" stroke="#000" stroke-width="1.1"/><path d="M416.5,971.6H434" stroke="#000" stroke-width="1.1"/><path d="M416.5,974.9H434" stroke="#000" stroke-width="1.1"/><path d="M416.8,960.5V975" stroke="#000" stroke-width="1.1"/><path d="M421.1,960.5V975" stroke="#000" stroke-width="1.1"/><path d="M425.4,960.5V975" stroke="#000" stroke-width="1.1"/><path d="M429.7,960.5V975" stroke="#000" stroke-width="1.1"/><path d="M434,960.5V975" stroke="#000" stroke-width="1.1"/><path d="M429.2,976.7h9.3l-4.65,5.3z" fill="#000"/><rect x="443" y="964" width="5.5" height="7.5" fill="#f4e880" stroke="#1020e0" stroke-width="1.2"/><path d="M448.5,967.5H456M450,967.5L456,959.5M450,967.5L456,975.5" stroke="#000" stroke-width="1"/><path d="M452,957.5l4.5,1l-2.8,3.2z" fill="#000"/><rect x="458" y="957.3" width="4.5" height="4.2" fill="#e8f4ff" stroke="#1020e0" stroke-width="1.2"/><rect x="458" y="965.5" width="4.5" height="4.2" fill="#e8f4ff" stroke="#1020e0" stroke-width="1.2"/><rect x="458" y="973.2" width="4.5" height="4.2" fill="#e8f4ff" stroke="#1020e0" stroke-width="1.2"/><path d="M454.5,962.5l2.5,1.6l-2.5,1.6zM454.5,973.5l2.5,1.6l-2.5,1.6z" fill="#e01818"/><path d="M479.5,962V959Q479.5,954.2 485,954.2Q490.5,954.2 490.5,959V962" fill="none" stroke="#8a8a8a" stroke-width="2.6"/><path d="M479.5,962V959Q479.5,954.2 485,954.2Q490.5,954.2 490.5,959V962" fill="none" stroke="#222" stroke-width=".8" transform="translate(-1.2,0)"/><path d="M476,963.5L478,961.5H493L495,964V975.5L492,978.5H476Z" fill="#9a9a9a" stroke="#1a1a1a" stroke-width="1.1"/><path d="M476,963.5H492V978.5M492,963.5L495,964" fill="none" stroke="#1a1a1a" stroke-width=".9"/><path d="M484,975V969.5M481.8,971L484,968L486.2,971" fill="none" stroke="#111" stroke-width="1.5"/><path d="M492.5,980.3h9.3l-4.65,5.3z" fill="#000"/><rect x="506.8" y="954.8" width="8" height="8.5" fill="#18a0a8" stroke="#e8d830" stroke-width="1.3"/><path d="M509,959.8h3" stroke="#90f0f0" stroke-width="1"/><rect x="506.8" y="965.8" width="8" height="8.5" fill="#18a0a8" stroke="#e8d830" stroke-width="1.3"/><path d="M509,970.8h3" stroke="#90f0f0" stroke-width="1"/><path d="M507.5,977.3h1.3M510,977.3h1.3M512.5,977.3h1.3" stroke="#333" stroke-width="1.1"/><path d="M518.5,954.5Q521,954.5 521,957.5V962.5Q521,965.5 523.5,965.5Q521,965.5 521,968.5V973.5Q521,976.5 518.5,976.5" fill="none" stroke="#111" stroke-width="1.3"/><path d="M526,964.5h5.5M526,967.5h5.5" stroke="#111" stroke-width="1.3"/><path d="M563.5,958.5L567.5,957.5L572.5,962.5L577.5,959.5Q580,958.5 580.5,960.5L574.5,966L583.5,969.5L582.5,972L572.5,970L567,974.5L564.5,973.5L568.5,968L564,965L565.5,963.5L569.5,964.5Z" fill="#40d8f4" stroke="#16164e" stroke-width="1.2" stroke-linejoin="round"/><path d="M564,957l3,1.5M565.5,955.5l1.5,2" stroke="#333" stroke-width=".8"/><rect x="591.8" y="956.7" width="18.6" height="17.6" fill="#f8f490" stroke="#58c0c8" stroke-width="1.4"/><path d="M601,959V972M594.5,965.5H607.5" stroke="#000" stroke-width="1.5"/><path d="M601,957.2l2.6,3.4h-5.2zM601,973.8l2.6,-3.4h-5.2zM592.6,965.5l3.4,-2.6v5.2zM609.4,965.5l-3.4,-2.6v5.2z" fill="#000"/><path d="M628,957V974M619.5,965.5H636.5" stroke="#30d8f0" stroke-width="3"/><path d="M628,957.5V973.5M620,965.5H636" stroke="#16164e" stroke-width="1.6"/><path d="M628,955.5l3.4,4.2h-6.8zM628,975.5l3.4,-4.2h-6.8zM618.3,965.5l4.2,-3.4v6.8zM637.7,965.5l-4.2,-3.4v6.8z" fill="#16164e"/><path d="M646.5,961L652,960Q656,957.5 661,958.5Q666,961 665.5,966.5Q664,972 657,972.5Q652,972.5 650.5,969L646.5,970Z" fill="#f4c8a8" stroke="#16164e" stroke-width="1.2"/><path d="M655,962H662M654,964.5H662" stroke="#16164e" stroke-width="1"/><path d="M652,969.5Q657,972 663,967.5" fill="none" stroke="#1870e8" stroke-width="2"/><path d="M665,965.5l-.6,4.2l-3.8,-2.4z" fill="#1870e8"/><rect x="646" y="960.5" width="2.2" height="10" fill="#16164e"/><path d="M686.7,967.8L692.2,973.3" stroke="#16164e" stroke-width="4" stroke-linecap="round"/><path d="M687,968.1L692,973.1" stroke="#38a8c0" stroke-width="2" stroke-linecap="round"/><circle cx="681.7" cy="962.8" r="6.3" fill="#fff" stroke="#16164e" stroke-width="1.7"/><path d="M678.2,962.8h7" stroke="#000" stroke-width="2"/><path d="M681.7,959.3v7" stroke="#000" stroke-width="2"/><path d="M714.2,967.3L719.7,972.8" stroke="#16164e" stroke-width="4" stroke-linecap="round"/><path d="M714.5,967.6L719.5,972.6" stroke="#38a8c0" stroke-width="2" stroke-linecap="round"/><circle cx="709.2" cy="962.3" r="6.3" fill="#fff" stroke="#16164e" stroke-width="1.7"/><path d="M705.7,962.3h7" stroke="#000" stroke-width="2"/><path d="M730.5,973L738,967H750L742,973Z" fill="#30b8c8" stroke="#186878" stroke-width="1"/><path d="M730.5,974H742L750,968" fill="none" stroke="#888" stroke-width="1"/><path d="M740,970V958.5" stroke="#e8c020" stroke-width="1.6"/><path d="M740,970V958.5" stroke="#e02020" stroke-width="1.6" stroke-dasharray="1.6 1.6"/><path d="M740,955.3l3.6,4.6h-7.2z" fill="#f4f4ff" stroke="#1020e0" stroke-width="1.1"/><rect x="762" y="958.3" width="16" height="15.6" fill="#8a8a96"/><rect x="760.8" y="957.2" width="15.6" height="15.2" fill="#38e0f8" stroke="#1020e0" stroke-width="1.4"/><rect x="769" y="957.9" width="6.8" height="6.6" fill="#a070e8"/><path d="M768.6,957.2V972.4M760.8,964.8H776.4" stroke="#1020e0" stroke-width="1.3"/><path d="M787,962L793,956H805.5V967.5L799.5,974H787Z" fill="#48e0f8" stroke="#1020e0" stroke-width="1.4" stroke-linejoin="round"/><path d="M787,962H799.5V974M799.5,962L805.5,956" fill="none" stroke="#1020e0" stroke-width="1.3"/><path d="M801.7,974.5h9.3l-4.65,5.3z" fill="#000"/><path d="M818.5,956.2H827.5Q829,956.2 829,958V971Q829,973 827.5,973H818.5Q817,973 817,971V958Q817,956.2 818.5,956.2Z" fill="#e0e4f4" stroke="#16164e" stroke-width="1.3"/><text x="819.3" y="969.5" font-family="Liberation Sans" font-weight="bold" font-size="13" fill="#16164e">?</text><rect x="827" y="973.5" width="11" height="6" fill="#f4f4fa"/><path d="M828.3,974.5h9.3l-4.65,5.3z" fill="#000"/><rect x="842.3" y="955.9" width="18" height="18" fill="#40e0f8" stroke="#16164e" stroke-width="1.3"/><path d="M845,970.5L855,959.5L858.5,961L848.5,972Z" fill="#e8e060" stroke="#6a6410" stroke-width=".9"/><path d="M851,958.5L856,957L859,959L855,960.5Z" fill="#fff" stroke="#555" stroke-width=".8"/><path d="M848,968L853,966.5L855,969L850,970.5Z" fill="#fff" stroke="#333" stroke-width=".8"/><rect x="870.1" y="955.9" width="17.8" height="18" fill="#40e0f8" stroke="#16164e" stroke-width="1.3"/><path d="M873.5,967L879.5,962L885,966L879,971.5Z" fill="#e8e060" stroke="#222" stroke-width="1"/><path d="M879.5,962L885,966L883.5,968L878,964Z" fill="#fff" stroke="#222" stroke-width=".8"/><path d="M927.5,954V974M921,974V955" stroke="#000" stroke-width="1.3"/><path d="M921,956h6.5" stroke="#000" stroke-width="1"/><path d="M921,958.2h4" stroke="#000" stroke-width="1"/><path d="M921,960.4h6.5" stroke="#000" stroke-width="1"/><path d="M921,962.6h4" stroke="#000" stroke-width="1"/><path d="M921,964.8h6.5" stroke="#000" stroke-width="1"/><path d="M921,967h4" stroke="#000" stroke-width="1"/><path d="M921,969.2h6.5" stroke="#000" stroke-width="1"/><path d="M921,971.4h4" stroke="#000" stroke-width="1"/><path d="M921,973.6h6.5" stroke="#000" stroke-width="1"/><path d="M929.5,966H940M929.5,963V966M940,963V966" stroke="#000" stroke-width="1.2"/><path d="M931.5,966v-2.4" stroke="#000" stroke-width=".9"/><path d="M933.5,966v-2.4" stroke="#000" stroke-width=".9"/><path d="M935.5,966v-2.4" stroke="#000" stroke-width=".9"/><path d="M937.5,966v-2.4" stroke="#000" stroke-width=".9"/><path d="M931.5,956v6M929.8,957.8l1.7,-2.3l1.7,2.3M929.8,960.2l1.7,2.3l1.7,-2.3" fill="none" stroke="#e01818" stroke-width="1.2"/><path d="M930,971.5h10M932,969.8l-2.3,1.7l2.3,1.7M938,969.8l2.3,1.7l-2.3,1.7" fill="none" stroke="#e01818" stroke-width="1.2"/><circle cx="980.8" cy="967" r="9.7" fill="#dcdce4"/><path d="M980.8,959.5A7.5,7.5 0 1 0 988.3,967A4.2,4.2 0 0 0 980.8,965A2,2 0 0 1 980.8,969A4,4 0 0 1 977,965" fill="none" stroke="#a4a4ae" stroke-width="2.6"/><circle cx="1012.5" cy="967" r="12" fill="#f4f0a0" stroke="#16164e" stroke-width="2"/><path d="M1002,962A11.5,11.5 0 0 1 1019,957Q1010,958 1008,966Q1007,973 1012,978.5A11.5,11.5 0 0 1 1002,962Z" fill="#16164e"/><path d="M1020,958.5A11.5,11.5 0 0 1 1024,969" fill="none" stroke="#38d0e8" stroke-width="2.4"/><path d="M1011.3,971.5V959.8Q1011.3,958.3 1012.7,958.3Q1014.1,958.3 1014.1,959.8V966L1016.8,966.3L1019.4,966.8L1021.8,967.8Q1022.8,968.3 1022.6,970L1021.6,975.5L1020.6,978.5H1012.8L1009.6,973.5L1007.4,970.5Q1007,969.3 1008.2,968.8Q1009.4,968.5 1010.2,969.8Z" fill="#fff" stroke="#000" stroke-width="1.1" stroke-linejoin="round"/><path d="M1016.8,966.5V970M1019.4,967V970.3" stroke="#000" stroke-width=".8"/><path d="M1042.5,970.3V958M1042.5,970.3H1053M1042.5,970.3L1035,977" stroke="#16164e" stroke-width="1.7"/><path d="M1043.2,969.6L1036,976" stroke="#f4e020" stroke-width="1"/><path d="M1042.5,956l2.8,4h-5.6zM1054.8,970.3l-4,2.8v-5.6z" fill="#16164e"/><path d="M1033.8,978l1,-4l3,3z" fill="#f4e020" stroke="#16164e" stroke-width=".6"/><text x="1063" y="967.5" font-family="Liberation Serif" font-weight="bold" font-size="10" fill="#000">10</text><text x="1063" y="976.5" font-family="Liberation Serif" font-weight="bold" font-size="10" fill="#000">10</text><text x="1072.6" y="967.5" font-family="Liberation Serif" font-weight="bold" font-size="10" fill="#1020e0">.1</text><text x="1072.6" y="976.5" font-family="Liberation Serif" font-weight="bold" font-size="10" fill="#1020e0">.0</text><path d="M1093,960.5V972.5Q1098.5,976.5 1104.5,972.5V960.5Z" fill="#40e0f0" stroke="#000" stroke-width="1.6"/><ellipse cx="1098.7" cy="960.5" rx="5.8" ry="2.5" fill="#50d8e8" stroke="#000" stroke-width="1.6"/><path d="M1090,971.5H1107M1090.5,969.8H1106" stroke="#e8f8f8" stroke-width="1"/><path d="M1101.5,963v8M1103.3,964h2.2v2.2h-2.2" fill="none" stroke="#e8f8f8" stroke-width=".9"/><path d="M1104.2,976.7h9.3l-4.65,5.3z" fill="#000"/><rect x="1117.3" y="958.3" width="6.6" height="2.4" fill="#a8f0f8" stroke="#1020e0" stroke-width="1.1"/><path d="M1120.6,961V967.5H1130" fill="none" stroke="#1020e0" stroke-width="1.3"/><rect x="1130" y="966" width="6.3" height="2.6" fill="#a8f0f8" stroke="#1020e0" stroke-width="1.1"/><path d="M1127.5,961.5L1121.8,968.5L1126,968L1120.5,974.5" fill="none" stroke="#e01818" stroke-width="1.6"/><rect x="1151.8" y="957.5" width="10.4" height="2.6" fill="#fff" stroke="#30c8e0" stroke-width="1.3"/><path d="M1151.2,960.5h11.6" stroke="#1020e0" stroke-width="1"/><rect x="1151.8" y="965.8" width="10.4" height="2.6" fill="#fff" stroke="#30c8e0" stroke-width="1.3"/><path d="M1151.2,968.8h11.6" stroke="#1020e0" stroke-width="1"/><rect x="1151.8" y="974" width="10.4" height="3.2" fill="#fff" stroke="#30c8e0" stroke-width="1.3"/><path d="M1151.2,977.6h11.6" stroke="#1020e0" stroke-width="1"/><path d="M1166.3,980.7h9.3l-4.65,5.3z" fill="#000"/><path d="M1179.5,967L1189.5,958L1199,964.5L1189,974Z" fill="#e8f4ff" stroke="#1020e0" stroke-width="1.5" stroke-linejoin="round"/><path d="M1179.5,967V971L1189,978L1199,968.5V964.5" fill="none" stroke="#1020e0" stroke-width="1.4" stroke-linejoin="round"/><path d="M1180.5,969.5L1189,976L1198.5,966.5" fill="none" stroke="#30c8e0" stroke-width="1.5"/><path d="M1447,957.5L1454,953.8H1458L1460.8,956.5V968L1455,973.5" fill="#8a8a92" stroke="#6a6a72" stroke-width=".6"/><path d="M1442,960L1449.5,955.5L1454,954L1460,956.5L1453,961.5Z" fill="#f8c8a0"/><path d="M1453.5,954.5L1449,961.5" stroke="#6a6a72" stroke-width="1"/><path d="M1441.8,960.5H1447.5V966Q1447.5,968 1449.8,968Q1452,968 1452,966V960.5H1457.5V970L1454,973.5H1445L1441.8,970Z" fill="#f8e828" stroke="#d01818" stroke-width="1.4" stroke-linejoin="round"/><path d="M1444.5,964V969.5L1446.5,971.2H1452.5L1455,969V964" fill="none" stroke="#f08020" stroke-width="1.2"/><path d="M1493,960.5L1503,955.5L1505,962L1497,966Z" fill="#f4e440" stroke="#111" stroke-width="1"/><path d="M1497,961L1503,958L1504,963L1498.5,965.5Z" fill="#f8c8a0"/><path d="M1494,967L1502,963L1511.5,966.5L1503.5,971Z" fill="#f4f060" stroke="#111" stroke-width="1.2"/><path d="M1494,967V970L1503.5,974.5L1511.5,970V966.5" fill="#e8dc30" stroke="#111" stroke-width="1.1"/><path d="M1499,968.5L1504,966" stroke="#48d0e0" stroke-width="2.4"/><path d="M1501.5,966.5L1510.5,957.5" stroke="#1848e8" stroke-width="2.6" stroke-linecap="round"/><path d="M1507.5,973.7h9.3l-4.65,5.3z" fill="#000"/><path d="M1521.5,957H1526L1527.5,958.5H1532.5L1530.5,962.5H1521.5Z" fill="#f4e828" stroke="#111" stroke-width="1.3" stroke-linejoin="round"/><path d="M1523.5,960.5H1530" stroke="#a09810" stroke-width="1"/><path d="M1534,957Q1538.5,957.5 1539,961.5" fill="none" stroke="#1838f0" stroke-width="1.4" stroke-dasharray="2 1.2"/><path d="M1539.3,964l-2.6,-3.4h5z" fill="#1838f0"/><path d="M1525.5,969L1533,964.5L1541,968L1533.5,972.5Z" fill="#f4e828" stroke="#1838f0" stroke-width="1.3" stroke-dasharray="2 1"/><path d="M1525.5,969V971.5L1533.5,975L1541,970.5V968" fill="#e8dc30" stroke="#1838f0" stroke-width="1.2" stroke-dasharray="2 1"/><path d="M1530,968.5L1535,966.5" stroke="#c8c020" stroke-width="2"/><path d="M1537.5,975.2h9.3l-4.65,5.3z" fill="#000"/><path d="M1860.6,944.8Q1868,943 1872.3,946Q1872.5,950 1862.5,955.2Q1868.5,950 1869.3,947Q1866,945.5 1860.6,944.8Z" fill="#e82020"/><path d="M1856,958.3Q1866,956.8 1866.6,961.2Q1866.6,967 1850,972.2L1857.5,959.8ZM1860.3,960.2L1854.6,969.6Q1863.4,966.3 1863.4,962Q1863,960.2 1860.3,960.2Z" fill="#38208c" fill-rule="evenodd"/><path d="M1880.3,954Q1870,952.6 1869.3,957.5Q1869.3,960.5 1874,962.5Q1877,964.5 1876,966.7Q1874,968.5 1865.3,968.2L1864.8,969.6Q1877,970.6 1879,966.7Q1879.8,963.5 1874.6,961Q1872,959.5 1872.8,957.5Q1874,955.2 1880,955.5Z" fill="#f0a010"/><text x="1859" y="979.8" font-family="Liberation Sans" font-weight="bold" font-style="italic" font-size="10.4" fill="#38208c" textLength="40.5" lengthAdjust="spacingAndGlyphs">CATIA</text></svg></body></html>
